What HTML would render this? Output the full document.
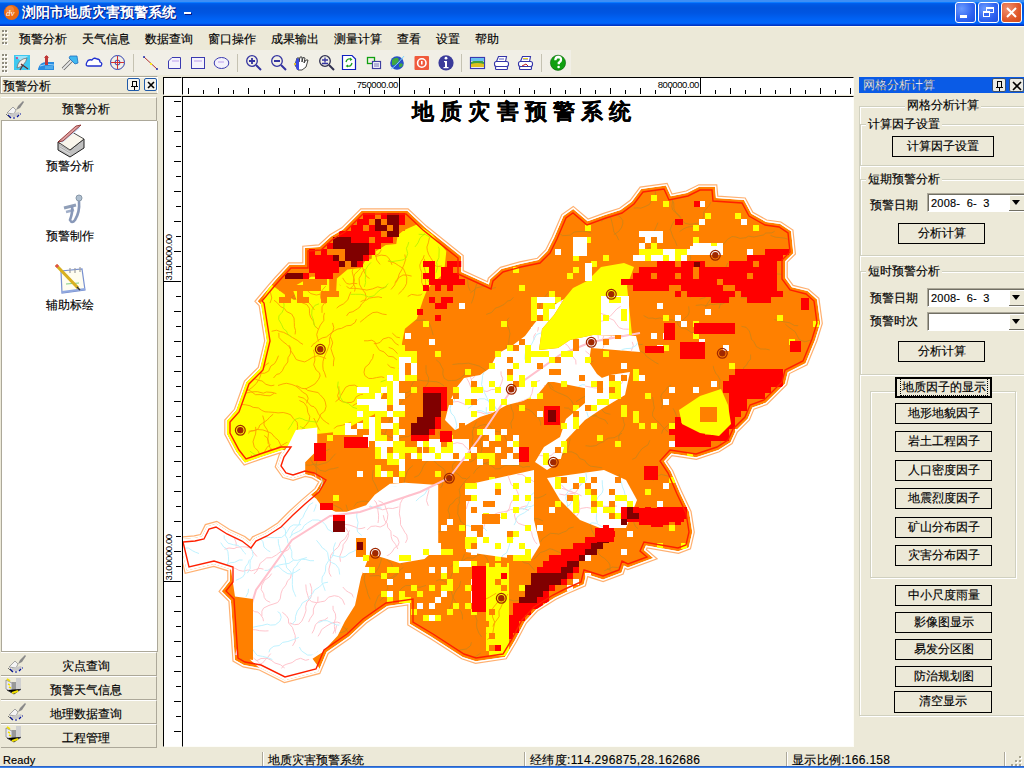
<!DOCTYPE html>
<html><head><meta charset="utf-8">
<style>
*{box-sizing:border-box;margin:0;padding:0}
html,body{width:1024px;height:768px;overflow:hidden;background:#ECE9D8;font-family:"Liberation Sans",sans-serif;font-size:12px;color:#000;-webkit-text-stroke:0.15px #000}
#title{-webkit-text-stroke:0}
.abs{position:absolute}
#title{left:0;top:0;width:1024px;height:26px;background:linear-gradient(#3E8FF5 0,#3E8FF5 2px,#0B7BFF 2px,#0B7BFF 3px,#0060F0 3px,#0058E2 5px,#0053DC 8px,#0056E2 13px,#0062F4 19px,#0066FA 23px,#0058F0 24px,#0036C4 25px,#0036C4 26px)}
#title .t{left:22px;top:4px;color:#fff;font-weight:bold;font-size:14px;letter-spacing:0px;text-shadow:1px 1px 0 #0A1880}
.tb{top:2px;width:21px;height:21px;border:1px solid #fff;border-radius:3px}
#menu{left:0;top:26px;width:1024px;height:24px;background:#ECE9D8;border-top:1px solid #FFFCEF}
.mi{top:4px;font-size:12px}
.grip{width:3px;background:repeating-linear-gradient(#B8B4A0 0 2px,transparent 2px 4px)}
#toolbar{left:0;top:50px;width:571px;height:25px;background:#F1EFE6}
.sep{top:55px;width:1px;height:16px;background:#C5C2B2;border-right:1px solid #fff}
.ico{position:absolute;top:54px;width:16px;height:16px}
.sunk{border-top:1px solid #000;border-left:1px solid #000;border-right:1px solid #FDFDF8;border-bottom:1px solid #FDFDF8;background:#fff}
.hdr{left:1px;width:156px;height:24px;background:#ECE9D8;border-top:1px solid #fff;border-bottom:1px solid #ACA899;border-right:1px solid #ACA899}
.hdr span{position:absolute;left:0;width:170px;text-align:center;top:5px}
.btn{position:absolute;border:1px solid #000;background:#ECE9D8;text-align:center;line-height:19px;font-size:12px}
.grp{position:absolute;border:1px solid #D0D0BF;box-shadow:1px 1px 0 #fff inset,1px 1px 0 #fff}
.gt{position:absolute;background:#ECE9D8;padding:0 2px;font-size:12px;line-height:12px}
.combo{position:absolute;left:927px;width:99px;height:19px;background:#fff;border:1px solid;border-color:#ACA899 #fff #fff #ACA899;box-shadow:inset 1px 1px 0 #716F64}
.combo span{position:absolute;left:3px;top:3px;font-size:11px;line-height:12px;letter-spacing:0.2px}
.dd{position:absolute;left:81px;top:1px;width:16px;height:16px;background:#ECE9D8;box-shadow:inset -1px -1px 0 #716F64,inset 1px 1px 0 #fff}
.dd:after{content:"";position:absolute;left:3px;top:5px;border-left:4px solid transparent;border-right:4px solid transparent;border-top:5px solid #000}
#status{left:0;top:748px;width:1024px;height:18px;background:#ECE9D8}
.st{position:absolute;top:5px;font-size:12px;line-height:14px}
.ssep{position:absolute;top:4px;width:2px;height:14px;border-left:1px solid #ACA899;border-right:1px solid #fff}
</style></head><body>
<div id="title" class="abs">
  <svg class="abs" style="left:3px;top:4px" width="17" height="17"><circle cx="8.5" cy="8.5" r="7.5" fill="#EE6A10"/><circle cx="7" cy="6" r="4" fill="#F8A060" opacity=".5"/><text x="3" y="12" font-size="9" fill="#fff" font-style="italic" font-family="Liberation Serif">dv</text></svg>
  <div class="abs t">浏阳市地质灾害预警系统</div><div class="abs" style="left:184px;top:12px;width:7px;height:2px;background:#fff;box-shadow:1px 1px 0 #0A1880"></div>
  <div class="abs tb" style="left:955px;background:radial-gradient(circle at 30% 30%,#6A9AFF,#2E62F0 60%,#1D4FE0)"><div class="abs" style="left:4px;top:12px;width:7px;height:3px;background:#fff"></div></div>
  <div class="abs tb" style="left:978px;background:radial-gradient(circle at 30% 30%,#6A9AFF,#2E62F0 60%,#1D4FE0)"><div class="abs" style="left:7px;top:4px;width:8px;height:6px;border:1px solid #fff;border-top-width:2px"></div><div class="abs" style="left:4px;top:8px;width:7px;height:6px;border:1px solid #fff;border-top-width:2px;background:#3567F2"></div></div>
  <div class="abs tb" style="left:1001px;background:radial-gradient(circle at 30% 30%,#F09070,#E0582A 60%,#D04A1A)"><svg class="abs" style="left:3px;top:3px" width="13" height="13"><path d="M2 2L11 11M11 2L2 11" stroke="#fff" stroke-width="2"/></svg></div>
</div>
<div id="menu" class="abs">
  
  <div class="abs mi" style="left:19px">预警分析</div>
  <div class="abs mi" style="left:82px">天气信息</div>
  <div class="abs mi" style="left:145px">数据查询</div>
  <div class="abs mi" style="left:208px">窗口操作</div>
  <div class="abs mi" style="left:271px">成果输出</div>
  <div class="abs mi" style="left:334px">测量计算</div>
  <div class="abs mi" style="left:397px">查看</div>
  <div class="abs mi" style="left:436px">设置</div>
  <div class="abs mi" style="left:475px">帮助</div>
</div>
<div id="toolbar" class="abs"></div>

<!-- TOOLBAR_ICONS --><svg class="abs" style="left:0;top:0" width="580" height="76" viewBox="0 0 580 76">
<g><rect x="3" y="31" width="2" height="2" fill="#fff"/><rect x="2" y="30" width="2" height="2" fill="#8E8B7E"/><rect x="6" y="31" width="2" height="2" fill="#fff"/><rect x="5" y="30" width="2" height="2" fill="#8E8B7E"/><rect x="3" y="35" width="2" height="2" fill="#fff"/><rect x="2" y="34" width="2" height="2" fill="#8E8B7E"/><rect x="6" y="35" width="2" height="2" fill="#fff"/><rect x="5" y="34" width="2" height="2" fill="#8E8B7E"/><rect x="3" y="39" width="2" height="2" fill="#fff"/><rect x="2" y="38" width="2" height="2" fill="#8E8B7E"/><rect x="6" y="39" width="2" height="2" fill="#fff"/><rect x="5" y="38" width="2" height="2" fill="#8E8B7E"/><rect x="3" y="43" width="2" height="2" fill="#fff"/><rect x="2" y="42" width="2" height="2" fill="#8E8B7E"/><rect x="6" y="43" width="2" height="2" fill="#fff"/><rect x="5" y="42" width="2" height="2" fill="#8E8B7E"/><rect x="3" y="55" width="2" height="2" fill="#fff"/><rect x="2" y="54" width="2" height="2" fill="#8E8B7E"/><rect x="6" y="55" width="2" height="2" fill="#fff"/><rect x="5" y="54" width="2" height="2" fill="#8E8B7E"/><rect x="3" y="59" width="2" height="2" fill="#fff"/><rect x="2" y="58" width="2" height="2" fill="#8E8B7E"/><rect x="6" y="59" width="2" height="2" fill="#fff"/><rect x="5" y="58" width="2" height="2" fill="#8E8B7E"/><rect x="3" y="63" width="2" height="2" fill="#fff"/><rect x="2" y="62" width="2" height="2" fill="#8E8B7E"/><rect x="6" y="63" width="2" height="2" fill="#fff"/><rect x="5" y="62" width="2" height="2" fill="#8E8B7E"/><rect x="3" y="67" width="2" height="2" fill="#fff"/><rect x="2" y="66" width="2" height="2" fill="#8E8B7E"/><rect x="6" y="67" width="2" height="2" fill="#fff"/><rect x="5" y="66" width="2" height="2" fill="#8E8B7E"/><rect x="3" y="71" width="2" height="2" fill="#fff"/><rect x="2" y="70" width="2" height="2" fill="#8E8B7E"/><rect x="6" y="71" width="2" height="2" fill="#fff"/><rect x="5" y="70" width="2" height="2" fill="#8E8B7E"/></g>
<rect x="133" y="54" width="1" height="18" fill="#C5C2B2"/><rect x="237" y="54" width="1" height="18" fill="#C5C2B2"/><rect x="461" y="54" width="1" height="18" fill="#C5C2B2"/><rect x="541" y="54" width="1" height="18" fill="#C5C2B2"/>
<!-- dish -->
<rect x="14" y="55" width="16" height="15" fill="#3EC8F0"/><path d="M15,56 L28,56 L22,62 Z" fill="#9BE4FA"/><circle cx="17" cy="58" r="1" fill="#E0307A"/>
<path d="M17,68 Q18,59 27,58 Q25,66 17,68 Z" fill="#F4F2EC" stroke="#707070" stroke-width="0.8"/><path d="M21,64 L28,69 M23,65 L20,70" stroke="#603030" stroke-width="1.2"/>
<!-- wave -->
<path d="M38,69 Q40,61 48,62 L54,62 L54,70 L38,70 Z" fill="#2A8CE0"/><path d="M40,66 Q46,63 54,65" stroke="#9AD4FA" stroke-width="1" fill="none"/><rect x="45" y="56" width="3" height="9" fill="#C03838"/><path d="M44,58 L46.5,55 L49,58 Z" fill="#C03838"/><path d="M45,66 L53,66 L53,69 L45,69 Z" fill="#60B8F0" opacity=".7"/>
<!-- arrow -->
<path d="M63,69 L73,59" stroke="#6A6A6A" stroke-width="3.6"/><path d="M63,69 L73,59" stroke="#E8E8E8" stroke-width="1.8"/><path d="M70,56 L77,56 L78,63 L75,64 L69,58 Z" fill="#40B8F0" stroke="#2070C0" stroke-width=".8"/>
<!-- cloud -->
<path d="M88,66 Q85,66 87,62 Q88,59 92,60 Q94,57 97,59 Q100,59 100,62 Q103,63 101,66 Z" fill="#fff" stroke="#2030D0" stroke-width="1.3"/>
<!-- crosshair -->
<circle cx="117.5" cy="62.5" r="7" fill="none" stroke="#3040B0" stroke-width="1"/><circle cx="117.5" cy="62.5" r="2.5" fill="none" stroke="#3040B0" stroke-width="1"/><path d="M111,62.5 H124 M117.5,56 V69" stroke="#D03030" stroke-width="1"/>
<!-- line -->
<path d="M144,57 L157,69" stroke="#B03030" stroke-width="1"/><circle cx="144" cy="57" r="1" fill="#2030B0"/><circle cx="157" cy="69" r="1" fill="#2030B0"/><circle cx="151" cy="64" r="1.1" fill="#FFFF00"/>
<!-- polygon -->
<path d="M168.5,61 L172,57.5 L180.5,57.5 L180.5,68.5 L168.5,68.5 Z" fill="#F4F2FC" stroke="#3A3AB0" stroke-width="1"/><rect x="172" y="60" width="7" height="2" fill="#D8C8F4"/>
<rect x="191.5" y="57.5" width="13" height="11" fill="#F4F2FC" stroke="#3A3AB0" stroke-width="1"/><rect x="194" y="60" width="8" height="2" fill="#D8C8F4"/>
<ellipse cx="221.5" cy="63" rx="7.3" ry="5.5" fill="#F4F2FC" stroke="#3A3AB0" stroke-width="1"/><rect x="218" y="61" width="6" height="2" fill="#D8C8F4"/>
<!-- zoom in/out -->
<g fill="none" stroke="#3434A0"><circle cx="252" cy="61" r="5.3" stroke-width="1.3"/><circle cx="277" cy="61" r="5.3" stroke-width="1.3"/><circle cx="325" cy="61" r="5.3" stroke-width="1.3" stroke="#303050"/></g>
<path d="M256,65 L261,70 M281,65 L286,70" stroke="#3434A0" stroke-width="2"/><path d="M329,65 L334,70" stroke="#303050" stroke-width="2"/>
<path d="M249,61 H255 M252,58 V64 M274,61 H280" stroke="#3434A0" stroke-width="1.8"/><path d="M322,60 H328 M325,57.5 V62.5 M322,63.5 H328" stroke="#3434A0" stroke-width="1.3"/>
<!-- hand -->
<path d="M295,65 L297,58 L299,58 L299,62 L300,57 L302,57 L302,62 L303,57.5 L305,58 L304,63 L306,60 L308,60 L306,67 L302,70 L298,70 Z" fill="#fff" stroke="#303030" stroke-width=".9"/><path d="M295,64 L297,58 L299,59 L299,70 L297,70 Z" fill="#3A4AE0"/><rect x="294" y="63" width="2" height="2" fill="#E0C030"/>
<!-- refresh doc -->
<path d="M342.5,55.5 L352,55.5 L355.5,59 L355.5,69.5 L342.5,69.5 Z" fill="#fff" stroke="#1020C0" stroke-width="1.2"/><path d="M346,62 Q347,58 351,59 M352,63 Q351,67 347,66" stroke="#20A020" stroke-width="1.3" fill="none"/><path d="M350,57.5 L352.5,59.5 L350,61 Z M348,64.5 L345.5,66 L348,67.5 Z" fill="#20A020"/>
<!-- windows -->
<rect x="367.5" y="57.5" width="7" height="6" fill="none" stroke="#10A010" stroke-width="1.3"/><rect x="372.5" y="61.5" width="8" height="7" fill="#fff" stroke="#4040A0" stroke-width="1.2"/><path d="M374,64 H379 M374,66 H379" stroke="#4040A0" stroke-width=".8"/>
<!-- globe -->
<circle cx="397" cy="63" r="6.8" fill="#2850C8"/><path d="M392,60 Q395,57 398,58 Q400,61 397,63 Q395,66 392,65 Z M399,64 Q402,62 403,65 Q401,68 399,67 Z" fill="#40A840"/><path d="M391,69 Q396,66 404,56" stroke="#80D8FF" stroke-width="1" fill="none"/>
<!-- red square -->
<rect x="414.5" y="56" width="14.5" height="14" rx="1" fill="#F05A3C"/><circle cx="421.8" cy="63" r="4.2" fill="none" stroke="#fff" stroke-width="1.6"/><rect x="421" y="61" width="1.6" height="3.5" fill="#fff"/>
<!-- info -->
<circle cx="446" cy="62.8" r="7.6" fill="#3A3A9A"/><circle cx="446" cy="58.2" r="1.4" fill="#fff"/><path d="M444,61 H447 V67 H448.5 V68.3 H443.5 V67 H445 V62.3 H444 Z" fill="#fff"/>
<!-- picture -->
<rect x="470.5" y="57.5" width="14" height="11" fill="#fff" stroke="#3A3AB0" stroke-width="1.2"/><path d="M471,62 Q475,60 478,61 Q481,59 484,62 L484,66 L471,66 Z" fill="#40A040"/><path d="M471,64 Q477,62 484,64 L484,67 L471,67 Z" fill="#E0C020"/><rect x="471" y="58" width="13" height="3" fill="#6AC0F0"/>
<!-- printers -->
<g fill="#fff" stroke="#3434A8" stroke-width="1.1"><path d="M496.5,61.5 L498.5,56.5 L506.5,56.5 L505.5,61.5 Z"/><rect x="494.5" y="61.5" width="14" height="5" rx="2"/><rect x="495.5" y="66.5" width="12" height="3" rx="1"/>
<path d="M520.5,61.5 L522.5,56.5 L530.5,56.5 L529.5,61.5 Z"/><rect x="518.5" y="61.5" width="14" height="5" rx="2"/><rect x="519.5" y="66.5" width="12" height="3" rx="1"/></g>
<path d="M499,59 H504 M523,59 H528" stroke="#3434A8" stroke-width=".8"/><rect x="523" y="58" width="5" height="1" fill="#E8D020"/><path d="M522,66 L526,64 L528,66" stroke="#C02020" stroke-width="1" fill="none"/>
<!-- help -->
<circle cx="558" cy="62.8" r="7.6" fill="#10A010" stroke="#0A600A" stroke-width=".6"/><path d="M555.3,60.3 Q555.5,57 558.3,57 Q561.2,57.2 561,60 Q560.8,61.8 558.8,62.8 L558.8,64.3" stroke="#fff" stroke-width="2.3" fill="none"/><circle cx="558.6" cy="67" r="1.3" fill="#fff"/>
</svg>
<!-- /TOOLBAR_ICONS -->

<!-- LEFT PANEL -->
<div class="abs" style="left:0px;top:76px;width:158px;height:18px;border:1px solid #ACA899;border-right-color:#fff;box-shadow:inset 1px 1px 0 #fff"></div>
<div class="abs" style="left:3px;top:78px">预警分析</div>
<div class="abs" style="left:127px;top:78px;width:13px;height:13px;border:1px solid #1F5AA8;border-radius:2px;background:#F4F3EE"><svg class="abs" style="left:1px;top:1px" width="10" height="10"><path d="M3 1h5v5h1v1H6v3H5V7H2V6h1z M4 2v4h3V2z" fill="#000"/></svg></div>
<div class="abs" style="left:144px;top:78px;width:13px;height:13px;border:1px solid #1F5AA8;border-radius:2px;background:#F4F3EE"><svg class="abs" style="left:1px;top:1px" width="10" height="10"><path d="M2 2L8 8M8 2L2 8" stroke="#000" stroke-width="1.6"/></svg></div>
<div class="abs hdr" style="top:97px"><span style="top:3px">预警分析</span></div>
<div class="abs" style="left:1px;top:121px;width:157px;height:531px;background:#fff;border:1px solid #ACA899;border-top:none"></div>
<!-- LEFT_ICONS --><svg class="abs" style="left:0;top:0;z-index:5" width="160" height="750" viewBox="0 0 160 750">
<defs>
<g id="brush"><path d="M6,-11 L11,-16 L12,-15 L8,-9 L4,-7 Z" fill="#8A8A8A"/><path d="M-5,-4 L1,-10 L4,-7 L2,-3 Z" fill="#F4F4F4" stroke="#909090" stroke-width=".8"/><path d="M-2,-1 Q3,2 8,-3 L7,-5 L-2,-3 Z" fill="#C8C8C8"/><path d="M-4,-2 L-1,1 M1,1 L3,1 M5,0 L7,-2 M8,-3 L9,-3" stroke="#0010A0" stroke-width="1.2"/><path d="M-6,-3 L-2,1" stroke="#707070" stroke-width="1"/></g>
<g id="bldg"><path d="M-8,-8 L-2,-5 L-2,5 L-8,1 Z" fill="#E8E8F4" stroke="#888" stroke-width=".8"/><rect x="-2" y="-6" width="4" height="10" fill="#999"/><rect x="2" y="-10" width="5" height="13" fill="#D0D0D0"/><path d="M-7,-9 L-4,-7 M-6,-4 L-4,-3 M-5,-1 L-3,0" stroke="#F0E000" stroke-width="1.6"/><path d="M-7,2 L0,6 L7,1" stroke="#404040" stroke-width="1"/><path d="M-2,5 L4,3" stroke="#F0E000" stroke-width="2"/></g>
</defs>
<use href="#brush" x="12" y="117"/>
<use href="#brush" x="14" y="671"/>
<use href="#bldg" x="14" y="688"/>
<use href="#brush" x="14" y="719"/>
<use href="#bldg" x="14" y="736"/>
<!-- book -->
<path d="M58,142 L70,150 L84,139 L84,148 L70,157 L58,150 Z" fill="#C0C0C0" stroke="#202020" stroke-width="1"/>
<path d="M60,143 L70,149 L70,155 L60,149 Z" fill="#D8D8D8"/><path d="M60,145 L70,151 M60,147 L70,153" stroke="#909090" stroke-width=".6"/>
<path d="M58,142 L72,132 L84,139 L70,150 Z" fill="#FAF6EC" stroke="#202020" stroke-width=".8"/>
<path d="M60,141 L78,126 L80,128 L62,143 Z" fill="#C8E0F8"/>
<path d="M58,142 L76,126 L81,125 L63,141 Z" fill="#E0A0A0" stroke="#802020" stroke-width=".8"/>
<!-- wrench -->
<path d="M64,208 L76,205" stroke="#909FB8" stroke-width="3"/><path d="M66,212 L74,210" stroke="#A0AEC8" stroke-width="2.4"/>
<path d="M79,201 Q80,212 75,220 Q72,224 70,220 Q73,212 72,206" fill="none" stroke="#8898B8" stroke-width="2.6"/>
<circle cx="79" cy="198" r="3" fill="#B0C0D0" stroke="#8898A8" stroke-width="1"/>
<!-- notepad -->
<path d="M61,271 L82,269 L85,290 L62,293 Z" fill="#FFFDF0" stroke="#7890D0" stroke-width="1.2"/>
<path d="M62,292 L85,289" stroke="#90A8E0" stroke-width="2"/>
<path d="M70,268 V273 M75,268 V273 M80,267 V272" stroke="#A0A0A0" stroke-width="1.2"/>
<path d="M66,284 L79,283" stroke="#60C060" stroke-width=".8"/>
<path d="M56,265 L78,288" stroke="#D8B020" stroke-width="3.2"/><path d="M56,265 L58,267" stroke="#E05050" stroke-width="3"/><path d="M77,287 L80,290" stroke="#303030" stroke-width="1.5"/>
</svg>
<!-- /LEFT_ICONS -->
<div class="abs" style="left:46px;top:158px">预警分析</div>
<div class="abs" style="left:46px;top:228px">预警制作</div>
<div class="abs" style="left:46px;top:297px">辅助标绘</div>
<div class="abs hdr" style="top:652px"><span>灾点查询</span></div>
<div class="abs hdr" style="top:676px"><span>预警天气信息</span></div>
<div class="abs hdr" style="top:700px"><span>地理数据查询</span></div>
<div class="abs hdr" style="top:724px"><span>工程管理</span></div>

<!-- RULERS -->
<div class="abs sunk" style="left:163px;top:77px;width:19px;height:18px"></div>
<div class="abs sunk" style="left:182px;top:77px;width:672px;height:18px;overflow:hidden">
  <!-- TOPRULER -->
</div>
<div class="abs sunk" style="left:163px;top:96px;width:19px;height:651px;overflow:hidden">
  <!-- LEFTRULER -->
</div>
<div class="abs sunk" style="left:182px;top:96px;width:672px;height:651px;overflow:hidden">
  <!-- MAP -->
</div>

<!-- MAPSVG --><svg class="abs" style="left:0;top:0" width="1024" height="768" viewBox="0 0 1024 768">
<defs><clipPath id="cv"><rect x="183" y="97" width="670" height="648"/></clipPath><clipPath id="olc"><path d="M257.671,301.196 L261.001,304.527 L266.74,340.869 L260.101,368.374 L246.228,382.246 L236.199,410.329 L226.8,420.772 L226.8,433.795 L236.303,451.744 L244.896,462.792 L261.044,457.025 L281.519,450.2 L284.854,450.2 L281.111,455.546 L277.449,466.534 L284.046,475.77 L293.073,478.349 L305.171,474.316 L312.819,476.016 L321.624,481.152 L316.508,489.922 L302.877,501.605 L290.786,512.688 L278.98,524.494 L265.465,533.183 L253.895,538.442 L250.333,543.428 L243.68,538.253 L228.542,531.188 L216.504,523.528 L206.767,526.31 L201.819,536.207 L194.518,537.829 L179.018,539.121 L186.635,570.858 L213.883,564.319 L229.8,569.345 L229.8,580.902 L221.74,591.265 L230.889,600.414 L234.923,659.928 L243.88,665.046 L259.97,668.063 L284.64,680.398 L318.334,671.702 L326.589,652.097 L349.019,636.494 L365.019,621.494 L387.211,606.055 L409.8,602.709 L409.8,623.812 L431.309,636.717 L462.605,656.908 L475.713,661.277 L504.966,656.944 L514.79,640.57 L524.636,621.862 L536.065,609.48 L554.574,597.791 L566.358,591.899 L583.723,584.301 L586.28,574.076 L603.09,579.384 L621.553,572.46 L623.869,565.512 L627.807,567.481 L653.222,558.118 L643.892,550.122 L645.908,545.586 L678.305,551.303 L688.732,547.393 L692.258,532.114 L689.089,512.046 L679.918,492.684 L670.826,471.469 L664.048,461.304 L671.212,453.424 L696.278,457.28 L718.386,449.911 L730.52,442.189 L735.673,430.852 L747.71,418.815 L752.409,407.537 L765.754,402.772 L784.889,383.636 L787.747,372.204 L805.507,363.324 L815.014,340.085 L820.267,323.274 L817.009,299.381 L807.526,291.083 L791.904,287.178 L785.2,277.959 L785.2,261.325 L793.342,253.183 L791.025,231.171 L780.171,223.935 L766.046,221.917 L751.378,213.666 L743.981,199.929 L715.94,197.995 L714.922,186.8 L699.245,186.8 L686.938,192.954 L670.851,196.34 L665.921,185.493 L641.235,189.02 L631.714,201.714 L620.52,210.11 L604.969,214.97 L587.656,221.348 L573.18,208.939 L563.411,215.916 L554.096,237.653 L547.37,251.104 L538.41,260.065 L520.241,263.89 L501.419,269.118 L490.133,279.275 L488.827,284.497 L461.2,271.939 L461.2,256.462 L425.099,227.582 L407.269,210.8 L361.675,210.8 L343.03,229.445 L331.091,236.409 L319.652,246.894 L304.8,248.037 L304.8,264.8 L289.599,264.8 L276.62,278.861 L269.566,286.922 L257.671,301.196 Z"/></clipPath></defs>
<g clip-path="url(#cv)">
<text x="412" y="119" font-family="Liberation Serif" font-weight="bold" font-size="22" letter-spacing="6.2" stroke="#000" stroke-width="0.2">地质灾害预警系统</text>
<path d="M254.965,301.319 L259.127,305.481 L264.702,340.787 L258.288,367.358 L244.496,381.15 L234.448,409.284 L224.8,420.005 L224.8,434.292 L234.617,452.834 L244.205,465.163 L261.697,458.916 L280.76,452.561 L279.306,454.638 L275.229,466.868 L282.825,477.501 L293.118,480.442 L305.278,476.389 L312.08,477.9 L318.888,481.872 L314.95,488.622 L301.55,500.108 L289.403,511.243 L277.718,522.928 L264.505,531.422 L252.579,536.843 L249.917,540.57 L244.73,536.536 L229.506,529.431 L216.819,521.358 L205.372,524.628 L200.456,534.461 L194.216,535.847 L176.529,537.321 L185.157,573.27 L213.81,566.393 L227.8,570.811 L227.8,580.216 L219.077,591.431 L228.944,601.298 L233,661.132 L243.181,666.949 L259.326,669.977 L284.415,682.521 L319.793,673.391 L328.207,653.408 L350.28,638.053 L366.28,623.053 L387.968,607.965 L407.8,605.027 L407.8,624.944 L430.252,638.415 L461.733,658.726 L475.534,663.326 L506.194,658.784 L516.534,641.551 L526.284,623.026 L537.356,611.031 L555.557,599.535 L567.206,593.711 L585.425,585.74 L587.704,576.623 L603.145,581.499 L623.149,573.998 L625.037,568.332 L627.687,569.657 L657.11,558.817 L646.325,549.573 L647.1,547.827 L678.496,553.368 L690.439,548.889 L694.294,532.186 L691.02,511.45 L681.741,491.862 L672.591,470.513 L666.579,461.494 L671.969,455.564 L696.452,459.331 L719.252,451.731 L732.095,443.558 L737.344,432.01 L749.404,419.95 L753.915,409.123 L766.85,404.504 L786.695,384.658 L789.465,373.581 L807.073,364.777 L816.897,340.763 L822.309,323.445 L818.889,298.369 L808.479,289.26 L793.094,285.414 L787.2,277.309 L787.2,262.154 L795.431,253.923 L792.916,230.028 L780.903,222.019 L766.7,219.99 L752.864,212.207 L745.219,198.01 L717.778,196.117 L716.749,184.8 L698.772,184.8 L686.273,191.049 L672.009,194.053 L667.122,183.301 L640.132,187.157 L630.286,200.286 L619.595,208.303 L604.325,213.076 L588.067,219.065 L573.292,206.401 L561.794,214.614 L552.281,236.811 L545.726,249.92 L537.416,258.23 L519.767,261.946 L500.43,267.317 L488.341,278.198 L487.469,281.683 L463.2,270.652 L463.2,255.501 L426.412,226.07 L408.062,208.8 L360.846,208.8 L341.799,227.847 L329.898,234.79 L318.81,244.953 L302.8,246.185 L302.8,262.8 L288.723,262.8 L275.132,277.524 L268.045,285.623 L254.965,301.319 Z" fill="none" stroke="#FFB070" stroke-width="1.2"/>
<g clip-path="url(#olc)">
<path d="M257.671,301.196 L261.001,304.527 L266.74,340.869 L260.101,368.374 L246.228,382.246 L236.199,410.329 L226.8,420.772 L226.8,433.795 L236.303,451.744 L244.896,462.792 L261.044,457.025 L281.519,450.2 L284.854,450.2 L281.111,455.546 L277.449,466.534 L284.046,475.77 L293.073,478.349 L305.171,474.316 L312.819,476.016 L321.624,481.152 L316.508,489.922 L302.877,501.605 L290.786,512.688 L278.98,524.494 L265.465,533.183 L253.895,538.442 L250.333,543.428 L243.68,538.253 L228.542,531.188 L216.504,523.528 L206.767,526.31 L201.819,536.207 L194.518,537.829 L179.018,539.121 L186.635,570.858 L213.883,564.319 L229.8,569.345 L229.8,580.902 L221.74,591.265 L230.889,600.414 L234.923,659.928 L243.88,665.046 L259.97,668.063 L284.64,680.398 L318.334,671.702 L326.589,652.097 L349.019,636.494 L365.019,621.494 L387.211,606.055 L409.8,602.709 L409.8,623.812 L431.309,636.717 L462.605,656.908 L475.713,661.277 L504.966,656.944 L514.79,640.57 L524.636,621.862 L536.065,609.48 L554.574,597.791 L566.358,591.899 L583.723,584.301 L586.28,574.076 L603.09,579.384 L621.553,572.46 L623.869,565.512 L627.807,567.481 L653.222,558.118 L643.892,550.122 L645.908,545.586 L678.305,551.303 L688.732,547.393 L692.258,532.114 L689.089,512.046 L679.918,492.684 L670.826,471.469 L664.048,461.304 L671.212,453.424 L696.278,457.28 L718.386,449.911 L730.52,442.189 L735.673,430.852 L747.71,418.815 L752.409,407.537 L765.754,402.772 L784.889,383.636 L787.747,372.204 L805.507,363.324 L815.014,340.085 L820.267,323.274 L817.009,299.381 L807.526,291.083 L791.904,287.178 L785.2,277.959 L785.2,261.325 L793.342,253.183 L791.025,231.171 L780.171,223.935 L766.046,221.917 L751.378,213.666 L743.981,199.929 L715.94,197.995 L714.922,186.8 L699.245,186.8 L686.938,192.954 L670.851,196.34 L665.921,185.493 L641.235,189.02 L631.714,201.714 L620.52,210.11 L604.969,214.97 L587.656,221.348 L573.18,208.939 L563.411,215.916 L554.096,237.653 L547.37,251.104 L538.41,260.065 L520.241,263.89 L501.419,269.118 L490.133,279.275 L488.827,284.497 L461.2,271.939 L461.2,256.462 L425.099,227.582 L407.269,210.8 L361.675,210.8 L343.03,229.445 L331.091,236.409 L319.652,246.894 L304.8,248.037 L304.8,264.8 L289.599,264.8 L276.62,278.861 L269.566,286.922 L257.671,301.196 Z" fill="#FF8000"/>
<clipPath id="lc1"><path d="M262,301 L272,289 L279,281 L291,268 L308,268 L308,251 L321,250 L333,239 L345,232 L363,214 L406,214 L423,230 L458,258 L458,274 L491,289 L493,281 L503,272 L521,267 L540,263 L550,253 L557,239 L566,218 L573,213 L587,225 L606,218 L622,213 L634,204 L643,192 L664,189 L669,200 L688,196 L700,190 L712,190 L713,201 L742,203 L749,216 L765,225 L779,227 L788,233 L790,252 L782,260 L782,279 L790,290 L806,294 L814,301 L817,323 L812,339 L803,361 L785,370 L782,382 L773,391 L764,400 L750,405 L745,417 L733,429 L728,440 L717,447 L696,454 L670,450 L660,461 L668,473 L677,494 L686,513 L689,532 L686,545 L678,548 L644,542 L640,551 L647,557 L628,564 L622,561 L619,570 L603,576 L584,570 L581,582 L565,589 L553,595 L534,607 L522,620 L512,639 L503,654 L476,658 L464,654 L433,634 L413,622 L413,599 L386,603 L363,619 L347,634 L324,650 L316,669 L285,677 L261,665 L245,662 L238,658 L234,599 L226,591 L233,582 L233,567 L214,561 L189,567 L183,542 L195,541 L204,539 L209,529 L216,527 L227,534 L242,541 L251,548 L256,541 L267,536 L281,527 L293,515 L305,504 L319,492 L326,480 L314,473 L305,471 L293,475 L286,473 L281,466 L284,457 L291,447 L281,447 L272,450 L260,454 L246,459 L239,450 L230,433 L230,422 L239,412 L244,398 L249,384 L256,377 L263,370 L270,341 L267,322 L264,303 Z"/></clipPath><g clip-path="url(#lc1)" fill="none" stroke-width="0.8">
<path d="M469.8,462.2L474.1,460.0L476.9,456.5L480.9,452.9L482.0,449.1L480.4,443.9L480.3,440.8L483.9,436.1L487.6,433.0L488.7,430.2M220.8,281.8L221.2,286.1L219.5,290.4L217.1,294.1L213.9,297.2L211.1,302.5M631.8,342.9L635.3,346.8L639.5,350.4L644.5,353.4L646.1,356.0L650.7,359.3L655.7,362.6L658.6,364.0M676.6,320.7L678.5,325.6L681.4,327.9L684.6,328.2L687.7,329.9L691.3,332.4L696.4,333.3L701.0,331.6L703.7,328.3M183.3,610.8L185.9,612.4L191.9,613.0L196.5,614.1L199.6,612.8L202.3,611.4L207.5,609.6L210.4,608.1L213.5,604.3L213.5,600.2L214.1,596.9L215.7,591.6M732.4,278.2L733.0,281.9L735.9,286.3L735.8,289.8L732.3,294.3L729.3,297.3L728.5,300.3L725.6,302.6L722.1,304.1L717.4,303.8L713.9,304.6L710.7,304.3L706.3,305.7L701.5,304.8L695.8,305.4M657.9,222.7L656.4,226.3L654.0,231.7L654.5,235.1L655.4,239.0L654.9,243.5L651.7,247.1L647.4,248.1M627.4,658.8L632.6,659.4L638.5,658.5L641.9,655.4L647.2,653.1L652.3,652.8L657.7,654.6L662.7,655.3L667.0,658.9L671.6,661.8M546.2,494.0L543.5,495.8L537.9,498.1L532.8,497.3L527.6,497.4L523.3,497.0L520.6,495.2L518.7,492.8L516.5,488.9L512.6,485.7L508.8,482.6M345.2,194.5L345.5,198.0L343.3,202.4L341.1,207.7L340.4,212.6L341.5,216.8L340.6,222.4L338.0,225.7L335.2,228.4L333.9,232.7L330.0,236.7M785.3,324.1L788.0,326.6L791.9,329.4L795.1,331.7L797.9,337.0L799.5,339.7L804.8,341.8L809.7,340.4L813.6,339.7L816.5,340.5M439.9,281.7L442.5,277.0L445.6,275.7L448.4,272.0L451.4,269.3L452.3,265.8L454.8,262.9L459.2,260.1L461.9,258.5M355.7,357.7L354.8,352.5L353.1,347.4L353.9,344.3L357.8,340.9L359.2,336.8L362.0,331.8L363.6,327.3L367.7,323.9L372.1,323.5M245.7,611.7L244.9,608.1L243.7,605.0L240.2,600.3L240.0,596.5L240.8,593.6L241.7,590.6L241.9,586.3L240.4,580.7L237.0,576.3L234.8,574.0L231.5,570.2L231.0,565.8L234.1,561.0L236.9,556.9M782.6,429.4L786.1,426.4L788.9,422.0L792.0,418.7L796.5,417.2L799.9,414.9L805.6,414.3M376.0,257.9L372.0,256.7L369.0,257.5L364.9,259.4L362.1,264.5L358.9,269.6L358.8,272.8L361.3,278.1M445.3,656.0L448.3,654.3L452.7,651.1L457.2,650.9L460.6,649.8L466.3,649.0L470.5,645.8L471.4,642.3M190.5,327.6L189.8,323.2L189.5,317.6L190.1,312.5L192.3,307.3L191.0,302.6L191.9,297.9M730.7,449.6L731.3,454.3L734.8,458.9L736.6,462.5L740.4,465.4L741.7,468.8L741.7,472.4L744.6,477.2M643.6,315.6L648.4,318.2L652.6,318.1L655.5,318.8L660.5,317.9L666.0,320.2L670.4,319.5L674.8,320.5L678.0,322.1L681.3,321.7L684.6,318.4L688.1,315.2L689.2,311.9L688.7,306.4M770.6,235.5L775.6,237.2L780.0,237.6L784.3,238.1L787.2,238.9L792.0,241.7L796.3,242.1L800.2,243.9L803.7,243.9L806.7,243.9L811.3,246.8L814.9,251.0L817.1,254.7L818.8,258.8L817.3,264.0M360.2,245.7L362.0,242.9L363.5,238.5L364.1,234.2L363.0,230.8L359.4,226.8L356.6,225.1L353.8,219.8M330.2,650.0L328.7,645.5L327.7,641.5L329.8,637.0L333.3,633.1L336.3,632.5L341.5,632.5L345.5,631.0L347.5,628.0M189.8,315.2L188.9,319.3L187.6,324.7L188.9,328.8L189.4,333.4L188.7,339.3L188.9,345.1L190.0,350.9M526.6,480.1L523.5,483.0L521.1,486.8L519.1,490.1L514.6,492.2L511.5,492.4L506.9,491.0L503.2,489.1L500.9,486.9L497.2,485.0L492.9,482.1M229.6,630.9L226.0,630.1L220.3,628.6L216.6,626.3L214.8,621.1L214.2,617.9L214.1,613.5L212.8,610.6L211.5,607.5L209.2,603.1L207.3,599.8M413.8,552.0L414.2,548.6L414.6,544.2L413.8,539.7L414.9,536.1L417.2,531.4L419.6,528.8L421.2,525.4M501.4,507.6L501.8,510.6L503.3,513.3L506.6,514.9L511.9,515.5L514.6,517.7L520.2,519.6L524.1,520.8L528.5,521.1L533.6,518.8L538.0,518.7L543.0,521.0M464.7,553.7L462.6,558.8L460.6,562.1L456.4,565.6L454.2,570.0L451.9,573.7L450.4,578.1M540.7,425.6L540.6,422.4L538.6,417.8L535.3,415.7L532.1,411.8L529.2,410.0L524.4,408.1L521.1,407.4L516.9,405.3M460.7,580.9L459.5,586.6L456.9,589.3L454.8,592.8L453.2,596.7L452.5,600.2L450.9,605.3L448.9,610.5L447.4,613.7M741.5,326.4L746.1,327.3L749.3,331.0L750.3,334.1L751.5,339.3L753.8,341.6L756.4,346.6L760.7,349.0L765.9,349.1L769.6,349.9M493.0,632.0L491.2,637.1L490.8,640.5L490.3,645.9L492.7,650.1L497.5,652.3L499.2,655.9L503.0,657.6L507.4,656.9L510.4,656.6M633.2,580.5L630.3,584.9L626.4,586.1L623.8,588.6L621.3,591.6L618.2,592.2L615.2,593.8L610.1,595.2L607.7,597.3L604.3,600.7L601.3,601.3M308.3,364.3L304.4,362.1L299.2,359.7L293.7,358.0L290.7,354.2L290.5,349.5L292.5,345.5L294.3,340.0L297.0,335.4L296.9,329.8M214.5,651.4L216.1,647.1L216.4,641.2L217.4,637.6L215.6,633.6L212.5,629.1L211.1,624.5L208.7,622.0L205.5,620.1M586.8,673.6L588.8,678.6L593.7,681.1L596.7,685.6L600.3,687.1L602.8,689.2L606.3,691.9L607.6,696.5L606.7,700.3L604.1,703.7L601.1,704.8M315.1,454.2L311.9,451.9L308.9,450.7L304.5,450.3L300.8,448.8L298.1,446.8L294.3,444.6L292.1,439.6M190.8,373.0L190.1,368.7L185.6,364.8L184.1,361.5L183.1,357.7L181.2,353.6L178.5,350.5L174.7,347.3M302.6,372.8L306.7,374.4L310.4,376.7L313.4,378.0L316.3,379.8L318.8,382.3L321.8,383.3L326.7,384.7L329.7,383.8L333.6,385.5M399.6,590.7L401.8,588.1L405.5,585.6L410.4,585.5L415.0,587.0L420.3,587.2L426.0,585.4M348.3,281.1L346.8,284.4L346.0,288.2L347.8,293.0L350.7,296.5L353.8,298.6L357.1,301.7L359.5,304.4L360.2,310.4L359.2,316.1M580.6,285.6L584.7,288.6L590.1,290.8L594.4,291.6L600.0,289.7L603.8,285.5L607.1,282.2M289.9,552.9L292.3,547.6L290.9,542.8L288.6,538.0L286.5,535.2L283.8,530.5L281.5,527.0L280.5,521.3M378.0,516.6L378.3,511.2L376.2,508.2L374.1,505.6L370.6,502.4L366.2,501.1L361.5,501.3L356.8,502.7L353.8,506.7M438.6,431.8L440.7,437.2L441.9,441.2L445.0,445.9L448.4,450.5L450.4,455.6L453.0,457.7L454.2,461.5M449.5,200.8L453.4,199.1L456.7,196.8L462.3,195.8L465.8,197.0L468.3,199.8L469.6,205.5L470.5,208.7L469.1,213.2M779.1,618.3L782.7,620.3L786.6,622.9L791.5,623.5L794.9,623.5L798.7,620.9L801.1,615.8L803.4,612.1L804.9,607.1L803.5,603.9L801.5,600.0L800.1,596.9L799.5,593.3M202.7,627.5L197.8,630.8L194.9,633.0L191.5,637.6L188.1,638.9L184.1,638.5L180.6,638.2L175.6,634.9L170.8,634.0L165.3,635.4M595.2,338.4L595.6,334.1L598.0,330.9L603.1,329.4L606.4,328.0L609.7,328.3L613.3,329.7L616.8,332.5L620.3,333.9L623.5,337.2L627.9,338.4L631.2,343.0L634.4,344.8L639.5,344.7L642.7,344.4M519.5,211.1L514.3,209.6L510.6,210.8L506.9,210.6L502.4,211.7L498.0,215.4L494.9,215.4L489.7,215.7M184.7,624.1L188.8,628.1L192.7,630.2L196.5,629.7L201.2,631.2L204.0,635.6M559.5,565.4L562.3,569.1L566.5,572.0L568.8,575.0L572.0,579.6L573.6,583.0L578.2,586.8L582.5,587.1L585.8,589.4L589.3,592.7M502.4,541.9L502.8,538.4L504.3,533.9L507.2,530.0L507.3,525.7L508.8,520.5M668.2,432.2L665.5,429.6L661.9,426.1L659.2,422.7L655.7,420.0L652.6,416.0L652.6,412.6L654.3,408.1L653.4,402.9L652.6,397.0M335.6,623.4L339.1,625.8L342.2,625.8L346.2,629.3L348.1,632.5L351.7,635.4L355.8,636.8L358.2,640.1L362.8,644.0L364.8,646.4M554.0,674.4L556.7,669.5L559.9,667.8L565.7,668.0L569.5,666.5L571.8,662.9L572.9,657.6L575.5,654.0L577.8,649.8L581.1,646.9L584.8,643.7M730.0,288.8L726.3,290.7L724.2,292.8L722.9,296.4L721.8,302.1L720.0,305.4L719.0,308.7M269.9,306.5L275.2,304.9L280.3,302.8L283.5,300.8L288.5,300.7L293.2,299.3L296.6,298.2M203.1,341.4L200.3,345.7L199.0,350.7L197.5,353.7L197.2,357.6L195.7,361.5L194.5,367.0L195.2,370.8L196.6,374.2L199.3,375.7L202.8,378.8M601.7,221.7L603.1,218.6L606.2,215.8L609.7,214.5L613.1,214.8L617.5,215.0L620.6,217.4L622.7,220.4L622.8,224.0L621.4,227.8L618.7,231.4L613.9,234.6M486.2,314.4L491.6,312.5L495.3,308.1L498.9,307.0L503.9,304.5L507.7,301.0L510.8,300.3L513.4,297.3M541.7,316.8L539.1,312.7L539.4,308.6L540.5,302.9L543.1,298.8L545.9,295.6L548.2,292.5M740.7,375.4L742.9,371.4L743.8,367.4L746.5,365.2L748.1,361.9L750.6,359.1L750.6,354.5M185.2,455.9L185.4,450.5L188.1,446.2L191.3,444.1L192.6,441.3L195.3,439.0L197.6,436.3L198.6,433.0L198.8,427.9L200.6,424.5L202.0,420.6L204.5,416.9L207.4,414.1L212.5,411.4M739.3,671.7L740.2,666.2L741.1,661.3L738.9,656.9L736.4,653.2L733.4,650.3L731.1,645.8L727.6,642.4L723.3,639.7L717.8,639.0L713.3,640.3L709.2,644.6L706.4,646.6M691.0,250.1L689.5,253.4L690.8,257.9L688.7,263.5L689.5,268.5L690.8,273.2L693.1,278.5L692.2,281.6L690.4,284.4L690.7,288.2L689.2,294.0L690.3,297.8M711.0,606.5L714.1,611.2L715.4,614.6L715.6,618.8L718.2,622.8L719.3,626.3L722.6,630.9M294.0,241.3L297.1,239.9L299.4,237.9L302.3,236.0L305.8,234.5L308.9,231.3L311.0,228.2L310.9,225.0L312.8,221.6L312.5,218.0M271.6,574.1L274.7,571.4L278.5,568.7L281.0,564.6L284.2,562.5L286.3,559.3L287.4,554.0L289.3,548.5L287.5,543.2M524.7,518.3L524.1,521.4L523.2,527.0L524.9,530.7L525.2,534.5L527.6,539.7M436.1,580.9L439.2,579.6L443.3,580.6L446.5,582.4L448.0,585.1L449.3,588.6L451.4,592.1L453.0,597.3L455.4,601.6L457.9,604.5L458.4,608.4L461.0,611.5L462.3,614.9L462.5,619.5M295.4,240.6L297.5,242.8L300.4,245.9L304.4,248.3L305.7,251.6L305.1,255.6L303.5,258.5L299.5,260.1L296.0,259.1L290.9,258.4M698.2,223.1L692.9,224.0L689.9,224.3L685.0,223.3L682.8,221.1L680.4,217.9L677.0,214.0L672.7,210.0L671.9,206.7L672.5,201.5L672.5,197.1L674.7,193.1L676.1,188.7L674.2,183.3M466.3,478.6L461.9,478.1L458.3,474.4L453.8,471.7L452.3,467.8L452.9,464.4L456.2,461.5L458.8,456.6L462.5,452.1L467.4,449.9L472.9,447.5L475.8,442.7L478.7,440.2M470.9,450.7L472.9,446.2L472.0,441.6L473.0,437.3L472.3,431.9L474.1,426.9L476.5,421.7M697.6,276.1L694.2,277.6L691.0,280.3L688.3,281.9L684.1,283.2L681.0,284.1L676.4,284.6L670.9,286.6L666.5,285.2L664.2,281.7L663.6,276.7L665.6,271.2L667.6,268.1L668.4,262.9M622.8,416.6L623.5,421.4L624.7,424.8L623.0,429.6L620.4,432.7L618.7,436.6L619.1,441.5M420.5,488.0L421.6,491.1L423.0,495.1L424.1,498.3L428.3,502.0L429.1,505.1L429.2,508.8L429.3,512.4M564.2,407.8L568.5,408.2L571.4,410.8L574.1,415.1L577.4,417.6L583.1,418.4L587.2,417.5L592.2,415.2L597.0,415.4M470.3,291.1L468.4,286.7L467.6,280.8L469.4,275.5L471.2,272.5L471.0,269.0M487.1,507.1L492.2,505.6L495.7,504.2L498.8,503.2L502.3,498.3L506.4,494.8L510.9,494.2L515.4,494.2M509.9,235.8L513.9,232.7L519.5,231.3L525.4,231.2L531.0,230.9M480.1,196.7L483.0,195.7L487.0,193.4L489.9,191.8L493.8,191.5L497.2,191.2L500.6,191.3L504.4,188.9L508.0,184.9L509.5,181.0L508.6,177.4L507.2,173.0L505.1,167.8L500.7,164.5L494.8,163.6M440.7,487.8L442.4,485.2L443.0,479.8L445.2,475.2L445.0,470.6L442.8,468.0L437.9,464.8L434.0,460.8L429.8,460.2L426.4,461.8L423.2,466.6L421.6,470.8L418.6,475.5L414.2,477.3M433.1,335.1L432.0,330.9L430.9,327.0L429.2,323.0L424.6,320.1L420.0,320.3L415.8,320.3L412.7,321.5L409.4,323.6M785.9,442.7L781.1,442.7L776.9,445.4L774.1,448.0L769.1,448.6L765.7,447.3L763.3,445.2L760.1,444.2L756.9,441.8L755.4,438.5L753.8,433.3L755.4,428.6L755.9,425.4M237.2,669.2L238.6,664.0L241.6,660.1L241.8,654.8L239.1,650.7L236.2,645.7L235.2,642.8L236.7,637.8M705.3,422.8L700.4,425.2L698.4,427.8L695.7,429.9L690.9,431.3L686.6,430.8L682.5,427.5L680.2,422.2L677.0,417.7L675.4,412.8L673.1,408.3M767.7,292.0L764.4,292.2L760.4,290.3L756.2,291.1L751.5,292.9L747.1,291.8L743.5,289.8L741.4,287.3L740.2,284.0L739.4,280.5L738.0,277.3L735.1,273.5M470.1,476.3L466.3,479.7L464.2,482.3L461.1,486.1L459.2,489.8L460.1,495.5L459.1,499.2L459.5,502.8L458.1,505.6L458.0,509.9L457.7,514.0L459.3,517.2L460.8,522.0M205.2,529.9L201.8,529.2L198.3,525.3L197.2,522.2L197.5,518.5L196.0,514.2L195.4,510.9L196.2,506.2L200.1,502.0L203.6,499.8L208.7,500.1M568.6,594.4L572.0,593.3L576.8,594.5L581.5,594.1L584.5,592.9L587.1,588.2L590.2,586.7M284.5,608.5L287.9,604.6L291.4,601.0L296.6,599.9L299.3,598.2L303.4,598.4L306.7,600.1L310.5,601.7L314.9,605.5L318.4,608.6L321.6,610.4M547.5,641.2L543.5,636.9L543.2,633.3L542.1,629.4L537.9,625.3L536.1,622.4L534.0,619.7L533.3,613.8L536.3,608.9M459.9,520.6L464.3,524.3L465.4,527.4L468.1,529.8L469.8,532.4L469.6,538.1L472.5,543.0L475.3,545.3L478.5,546.6L483.6,548.9L487.9,548.7L492.4,550.4M774.7,231.2L771.8,232.9L765.9,233.0L763.5,234.9L758.6,236.0L753.9,237.0L748.6,236.1L745.8,237.7L740.0,238.4L736.0,237.0L732.0,236.5L727.5,239.4L724.5,243.1L721.9,246.1M471.4,303.4L472.7,299.8L474.3,294.7L474.6,291.0L475.6,287.4L476.8,283.8L479.5,281.5L481.3,278.0M651.8,288.7L656.5,287.0L660.6,285.5L663.1,281.6L663.5,276.6L661.9,273.8L661.6,267.8L660.8,262.9M397.4,574.7L393.2,577.8L388.9,581.1L387.8,585.5L387.6,588.7L385.6,591.5L384.3,596.9L379.8,600.7M270.8,255.5L269.7,252.0L269.7,248.2L272.2,243.2L274.9,240.1L279.8,237.1L282.6,232.2L287.4,230.3M261.1,345.8L256.4,342.9L251.6,340.5L248.3,340.1L245.5,339.0L242.0,334.2L241.9,329.2L239.2,323.9M369.7,575.9L375.2,575.7L378.8,575.5L383.8,578.5L389.1,577.9L392.1,577.1L394.8,574.7L398.1,573.3L399.8,570.1L403.4,567.4M477.9,278.1L481.1,276.1L484.9,274.6L489.4,272.6L492.5,270.1L497.2,269.4L501.7,268.3L505.5,267.1L509.1,268.1M479.9,463.0L483.9,463.4L488.0,464.1L491.6,465.9L495.5,468.9L499.9,468.7L504.3,465.8L509.2,465.0L514.1,465.5L518.6,465.3L522.9,467.3L526.8,466.6L530.0,466.7M798.1,325.7L794.4,325.5L789.7,322.8L784.1,321.8L779.9,321.0L774.2,319.5M727.8,262.9L725.5,268.2L722.5,272.3L720.5,275.6L718.1,278.0L715.9,282.8L715.5,286.6L713.5,289.3L710.5,293.5L710.7,298.9L707.8,303.0L705.2,307.2M774.2,503.4L780.1,502.6L783.7,504.0L788.8,503.7L794.5,505.5L797.5,507.0L799.8,509.3L801.2,514.4L800.4,519.9L799.1,525.6L797.2,529.7M633.8,208.1L637.5,207.8L640.8,208.2L644.8,206.6L649.4,204.5L651.2,201.1L653.7,199.0L655.5,196.4L655.4,191.8L655.6,187.9L655.7,184.7L653.9,181.6M224.8,236.2L225.1,231.6L223.9,226.0L222.1,222.0L220.0,218.6L220.4,214.7M319.6,638.0L318.2,634.0L316.6,630.0L315.6,624.7L317.3,620.6L321.4,618.1L323.8,616.2L325.0,612.9L329.1,610.4L332.4,605.4L336.3,602.8L340.1,602.8L342.9,604.1L346.1,603.5L351.3,606.3M788.3,622.6L793.4,622.7L796.7,622.5L801.4,621.8L805.5,622.5L810.2,624.4L812.9,626.1M338.5,467.3L333.5,468.7L329.9,469.1L325.2,471.4L319.7,470.2L316.3,466.6L313.8,464.9L311.2,460.4L309.2,455.6M346.2,575.2L344.3,571.3L342.4,567.8L340.9,563.9L337.9,559.5L335.1,556.1L334.4,551.8L332.6,546.4L334.4,541.3L335.4,536.4M370.8,542.3L375.1,542.0L378.8,542.5L382.8,544.7L384.3,548.5L384.6,551.5L385.6,556.7L388.1,560.8L391.5,563.3L392.4,566.8L391.3,569.8L388.9,574.7M225.2,666.1L223.4,662.1L219.9,658.5L217.2,656.3L211.9,656.2L206.5,655.5L203.5,655.1L200.0,653.2L198.3,649.6M603.5,330.1L602.8,325.3L601.9,320.8L604.1,316.7L607.8,314.9L611.0,314.6L615.7,312.8L621.2,312.3L624.9,311.3L629.0,309.2M525.0,383.1L520.0,385.4L516.5,386.3L513.1,390.9L510.8,393.0L509.6,395.8L510.7,400.5L510.6,404.3L511.7,409.1L513.3,412.7L513.2,418.4L510.8,422.9L511.7,428.6M569.3,670.7L569.3,674.1L566.8,677.3L564.5,680.9L559.6,683.9L556.3,684.9L551.8,687.4L548.3,691.8M486.8,217.8L482.0,215.6L478.6,211.9L478.2,208.9L476.4,204.4L476.3,199.9L476.5,195.8L478.3,191.9L482.4,189.4L485.2,187.9L488.0,183.8L487.9,178.5M538.9,362.7L537.4,366.1L538.5,369.9L539.0,373.7L542.6,378.0L545.6,381.3L550.4,384.4L553.3,388.3M622.0,433.2L618.2,435.5L614.2,437.7L608.5,438.2L605.8,439.7L603.5,441.8L599.0,443.4L596.1,445.6L590.7,446.3L585.6,445.7M240.4,433.6L240.0,439.2L241.2,442.3L242.4,446.1L244.3,450.4L247.6,452.3L253.2,454.1L256.3,455.3L259.8,459.4L261.9,464.2L264.6,469.5M558.0,455.8L563.1,454.4L566.8,451.9L571.7,451.8L577.1,454.4L579.7,458.5L584.5,460.2L587.4,464.1L590.7,466.2L596.3,466.9L602.2,467.9M349.3,586.4L347.1,584.2L345.9,581.0L343.7,578.9L339.5,577.5L337.2,574.2L332.7,571.0L327.9,570.2L322.4,568.2L318.0,569.6L313.1,572.0L309.5,575.8L308.1,580.0M335.1,325.1L336.6,321.9L336.9,318.0L339.7,313.7L344.4,312.0L348.5,311.4L352.9,312.0L356.9,310.0L360.6,307.2L361.5,304.3L364.9,302.0L367.2,299.5L371.6,295.8M312.3,194.5L310.6,190.5L309.3,187.7L307.2,182.2L304.0,179.5L299.9,178.2L296.5,177.8L290.9,178.1L287.8,178.9L283.7,181.6L280.0,181.7L276.6,181.1M271.0,356.0L274.6,356.2L278.7,354.5L281.5,353.1L284.4,351.7L289.8,351.7L293.9,351.2L297.1,352.0L300.6,350.2L303.6,350.9L308.2,354.4L312.8,357.2L314.8,360.5L318.5,363.9M426.1,534.5L423.1,535.3L419.7,537.2L414.5,538.2L408.7,537.6L404.8,539.1L399.5,538.3L394.0,540.5L388.5,540.9L383.8,542.0L378.5,539.9M816.4,598.5L812.6,596.6L809.8,594.8L807.9,592.1L806.4,588.7L803.3,584.9L799.5,583.0L796.1,578.1L792.7,575.6L790.5,572.8L789.9,569.3L789.5,565.3L787.3,563.2L783.4,562.9L777.6,564.3L774.4,564.5M691.0,275.8L687.2,275.8L683.5,275.4L678.6,273.3L674.3,271.2L671.8,266.9L672.1,263.5L673.4,258.6L674.2,253.1L674.9,249.6M796.7,217.4L801.3,220.3L804.5,223.7L805.5,227.7L809.1,231.2L812.7,231.6M554.7,605.1L559.3,607.3L562.7,612.0L566.3,615.4L569.8,617.7L572.5,620.3L577.1,621.0L581.4,620.7L585.3,619.0M189.8,421.5L189.4,426.0L191.1,429.0L192.9,433.7L191.2,438.8L191.1,443.1L191.0,448.5L191.6,454.3L192.2,458.4L192.9,462.4L191.3,465.1M521.2,658.5L524.4,657.9L527.3,656.0L531.0,654.6L535.9,651.7L538.9,651.1L541.6,649.0L542.9,645.9L547.2,642.9L550.2,641.2L552.8,638.7M361.3,212.7L357.8,209.7L356.9,205.8L355.0,200.4L355.1,194.9L357.1,192.0L359.2,188.8L361.7,184.0L365.5,182.1L368.1,178.6M386.1,542.3L387.5,538.0L386.7,533.4L389.1,528.4L389.6,523.8L389.0,520.3L390.0,515.1L389.7,510.9L390.9,505.8L391.5,502.5L390.2,499.3L390.5,494.8L391.6,490.8M231.9,299.0L227.4,298.5L221.5,297.8L217.0,294.8L214.6,291.3L209.7,287.9L207.7,282.9M593.4,361.0L589.0,363.5L584.8,363.6L581.1,363.0L577.8,363.3L572.4,361.4L568.3,361.2L565.2,362.8L559.8,364.4L557.4,367.3L554.1,369.0L550.1,369.0L546.5,369.0L542.4,370.3M376.7,423.1L376.1,427.5L378.3,431.2L383.0,433.4L386.3,435.2L390.3,437.2L394.7,438.2L398.4,438.7L403.0,436.9L408.0,436.7L411.4,434.6M294.7,509.2L290.9,508.5L287.0,508.8L284.0,509.9L281.2,511.2L278.8,514.3L278.4,518.9L275.2,523.3M241.6,259.8L243.9,263.0L246.8,266.3L249.0,269.4L250.0,273.3L248.6,278.5L250.7,282.7L255.5,285.6M403.6,505.2L400.4,503.0L397.4,499.8L394.3,499.3L389.7,498.7L385.2,497.4L380.9,496.0L378.9,493.0L377.0,488.5L375.0,484.0L372.5,479.5L372.5,475.0L373.2,470.1M287.3,301.9L290.0,299.8L292.4,296.9L296.4,293.7L300.6,292.6L304.7,291.1L308.5,288.9L313.5,287.6L317.6,285.4L319.3,282.7L320.9,279.0L320.2,275.8L318.2,270.4L318.6,267.3L318.1,263.2M680.9,217.7L678.8,214.9L675.6,212.0L673.9,208.8L673.8,203.0L671.9,199.3L670.4,196.4L670.3,193.3L670.2,190.0L666.9,185.1L667.0,181.9L665.9,178.0L665.2,174.8M310.2,581.7L314.4,585.1L316.6,588.0L317.0,593.6L317.2,596.8L318.6,600.4L321.3,605.6L323.2,610.7M444.1,386.0L439.8,382.9L436.2,381.7L430.4,381.3L426.3,380.9L423.2,380.8L417.9,379.9L413.4,381.8L411.0,386.5M255.9,203.4L252.1,201.8L247.8,200.3L244.7,201.4L240.0,201.1L236.0,200.9L231.8,199.1M610.3,414.3L605.0,412.9L602.7,410.8L600.5,406.5L598.6,401.1L594.9,398.5L589.6,396.1L585.0,396.3L580.4,398.9L576.0,401.7M702.6,399.5L701.0,404.4L697.2,408.8L694.8,412.5L690.4,414.3L687.2,414.6L683.5,415.3L679.7,418.2L676.7,421.4L673.6,422.6L669.3,424.0L666.2,426.8L662.8,429.9L661.6,433.6M773.6,631.8L774.2,627.5L775.8,622.9L776.5,617.0L776.1,614.0L773.8,611.2L771.7,606.1L768.5,604.2M258.0,228.6L260.5,225.6L265.0,224.2L267.8,221.3L272.9,220.0L277.4,221.8L281.5,225.0L285.2,225.7L287.7,228.2L289.1,231.2L293.6,233.6M721.0,589.7L716.9,586.0L715.9,583.1L711.6,580.1L706.8,577.0L705.6,572.8M604.7,527.5L603.9,533.2L601.6,538.0L600.2,541.4L598.6,546.2L597.3,549.2L598.5,553.2L600.8,556.1L604.5,558.3L608.5,562.4L610.0,565.0L610.1,569.8M572.1,361.9L569.8,364.1L564.9,367.0L560.2,368.4L554.4,367.6L549.4,364.3M675.3,482.4L673.5,478.7L669.2,476.4L664.9,475.3L661.4,474.4L657.0,476.4L653.1,480.6M632.2,459.4L635.8,457.8L638.7,453.0L641.9,448.8L644.6,447.0L648.0,444.8L649.8,440.3M548.5,335.8L546.8,340.6L546.1,346.1L544.7,351.0L544.3,355.2L540.8,359.9L536.2,362.8L532.9,362.3L528.8,362.8L525.2,364.0M715.5,671.8L716.7,667.1L718.0,663.9L722.0,661.7L726.0,657.3L727.7,654.6L730.4,652.0L732.0,648.4M385.8,513.3L391.5,513.1L396.6,510.9L399.3,507.0L399.3,503.7L401.3,501.0L405.0,498.3L406.3,493.1L404.2,487.8L404.5,483.3L404.5,480.2L405.3,477.2L407.1,471.8L408.9,468.9L412.8,465.6M639.2,599.4L640.9,604.7L641.1,608.6L643.5,612.0L648.5,614.9L651.8,614.8L656.0,618.1L659.5,620.7L661.3,625.5L663.6,629.0M355.2,230.2L359.7,228.6L363.8,226.4L367.7,226.6L371.7,225.0L375.4,223.3L379.7,222.0L382.5,220.1L386.0,215.8L389.3,214.2L392.6,211.2L395.1,209.0L397.0,204.9L401.3,201.4M225.5,333.1L228.7,333.3L232.3,332.8L237.0,331.7L240.3,331.6L243.5,331.7L248.9,331.5L254.0,329.5L257.1,326.7L259.9,325.7L264.4,324.5L270.2,324.8L273.7,326.0L278.1,325.5L282.4,323.7M505.9,356.8L506.2,351.9L506.3,346.8L508.7,343.9L509.0,339.6L510.0,333.7L509.1,329.4L506.9,324.3L507.1,320.0L509.0,317.7M267.7,478.8L267.0,475.5L265.4,472.4L263.9,469.7L264.0,464.7L266.0,460.6L270.7,457.8L276.1,457.3L279.6,455.5L282.0,450.7L284.5,445.3L285.1,441.1L288.6,436.3M742.5,639.8L744.8,644.2L744.1,648.7L745.7,653.1L749.2,655.7L753.5,655.9L758.1,658.3L760.5,661.9L762.5,664.4L763.8,668.9L765.1,672.1L766.5,674.9M505.5,508.2L508.7,508.5L513.7,508.5L518.9,511.1L523.6,514.5L527.1,517.6M309.6,399.6L312.1,396.7L312.5,392.1L312.3,386.3L310.7,383.0L307.9,381.7L304.3,377.4L301.5,376.3L298.2,374.5L293.6,371.0L291.5,367.8L290.0,364.3L289.7,360.5L292.0,356.0L295.4,353.8M346.1,504.7L347.4,509.3L349.3,512.0L350.1,515.3L349.7,519.1L350.1,524.9L348.0,530.0M565.7,645.4L562.1,643.3L559.1,641.2L555.3,637.1L553.7,633.7L550.0,631.9L544.9,629.9L540.8,627.9L536.9,625.3L533.8,621.9L531.5,618.9M547.9,341.4L552.0,341.4L555.7,343.8L557.3,348.4L557.6,353.4L556.5,356.2L554.4,359.1L550.6,362.0L545.7,364.0L541.2,364.0L537.3,366.2L533.2,368.2L530.8,370.5L527.0,371.2L522.3,373.7M365.9,370.8L362.3,371.2L357.2,368.3L351.9,365.3L348.7,362.7L345.7,362.4L340.7,361.2L335.7,359.2L330.7,357.6L326.3,355.5L322.0,353.0L319.3,351.2M454.3,662.3L450.2,662.7L445.5,665.8L442.8,670.2L442.4,674.7L440.1,677.0L437.2,677.9L431.9,675.8M232.2,572.2L235.8,570.9L240.6,571.1L244.7,574.6L249.4,574.7L253.0,574.4L257.1,577.3L261.4,578.9L266.4,581.7L270.4,582.2L274.7,582.8L278.3,581.8L283.2,579.1M576.1,420.0L575.6,414.1L575.5,410.1L573.7,405.3L571.5,400.8L567.6,396.8L562.5,394.4L558.6,392.9L554.5,390.8L550.5,388.4L548.5,383.6L543.6,380.2M516.8,615.4L522.4,614.4L525.7,611.4L529.7,611.1L533.8,611.9L539.2,612.6L544.2,614.2L547.5,614.0L551.1,610.9L554.1,608.1L558.0,606.3L561.1,604.4L563.9,600.0L565.8,596.8L565.4,592.0M301.8,435.7L301.2,430.9L302.5,425.1L302.5,419.1L302.1,414.6L300.5,411.8L299.5,408.6L296.8,406.8M307.2,317.5L305.3,312.8L306.8,308.2L307.9,303.7L310.6,298.9L313.5,296.6L316.7,295.7L319.9,292.5L321.5,288.1L321.7,282.3M766.5,546.8L761.1,544.3L756.9,543.9L753.4,542.0L750.4,540.9L746.7,536.8L743.0,535.1L740.4,532.2M473.5,473.6L476.0,469.7L479.5,466.7L482.7,464.2L486.9,462.6L492.0,461.4M784.1,423.2L784.4,419.9L783.5,416.6L778.9,413.3L777.7,409.3L773.4,406.4L771.3,404.1L770.1,401.1M195.5,435.2L194.1,430.7L191.0,427.3L186.2,425.1L180.9,424.3L176.7,423.7L172.2,422.2L168.0,421.0L165.0,418.1L161.9,417.1M554.3,222.8L555.4,227.0L557.9,232.1L562.4,235.6L565.9,235.5L570.4,235.1L574.0,232.1L577.0,231.7L582.7,231.4L586.9,231.6L591.3,233.0M382.0,593.7L378.4,595.7L376.9,599.2L374.8,604.7L375.6,610.3L373.0,615.0L372.4,618.0L370.2,620.3L367.6,625.6L364.1,629.7M754.5,629.9L753.5,624.8L753.7,619.0L753.5,613.7L756.4,609.9L760.0,606.8L763.1,604.0M543.3,615.3L545.1,619.7L543.7,624.6L545.8,630.0L547.3,633.3L547.5,638.2L545.5,642.4L545.0,646.8M210.3,458.2L207.8,461.6L204.6,464.5L199.8,467.0L197.4,470.4L195.6,475.1L191.1,477.7L187.6,478.5L183.6,479.9L181.6,482.5L180.0,486.3L179.9,490.2L181.0,493.5M367.0,572.2L364.7,575.0L364.2,579.4L365.0,583.5L365.9,586.9L366.9,589.8L367.8,593.9L370.2,599.3M230.2,395.3L226.8,395.0L223.2,393.8L219.5,391.8L217.6,387.9L214.9,385.1L214.4,381.1L212.3,377.0L210.9,371.3L207.9,368.7L205.7,364.8L204.4,359.9L202.1,357.8L198.3,356.6M448.8,528.4L443.6,530.9L438.0,532.0L433.5,533.0L430.0,533.0L425.5,533.3L421.6,532.5L416.6,533.0L414.0,535.5L409.1,536.0L403.4,536.4M471.8,602.2L473.4,605.7L476.0,607.7L477.4,611.8L475.6,616.1L477.0,620.6L476.5,624.7L477.0,628.4L479.0,633.3L481.6,636.9M221.3,206.9L227.1,205.9L232.1,205.3L235.4,202.6L239.1,200.5L242.9,199.3L246.5,198.9L250.8,198.5L254.0,198.3L258.6,196.1L261.4,192.7L266.1,191.7L271.4,192.4L274.4,195.3M661.7,408.7L662.6,403.7L661.6,400.6L660.9,396.3L662.1,393.4L666.0,389.7L667.6,387.0L671.1,385.1M510.0,207.8L507.9,204.9L507.9,201.4L507.9,197.0L506.2,193.6L503.5,191.4L498.5,191.3L494.9,190.3L492.2,187.0L488.3,182.7L486.1,178.9L485.2,173.8L483.8,170.9L483.1,165.7M257.2,552.2L258.6,556.9L261.8,559.5L263.6,562.3L267.6,563.8L270.8,567.5L273.7,568.9L276.9,573.4L278.2,576.8L278.1,579.8L279.9,583.4L279.3,586.5L280.8,591.5L280.5,595.2M472.9,227.7L470.6,231.9L467.1,235.0L462.9,236.1L460.0,237.0L456.8,238.4L452.9,237.4L449.5,236.8M751.3,617.6L748.0,621.2L743.4,622.0L738.2,621.3L733.5,622.9L730.1,624.4M798.7,635.7L794.3,639.4L789.1,642.0L786.0,646.6L781.8,650.6L781.1,655.0M582.8,364.3L578.1,365.2L572.2,366.0L567.9,366.7L565.4,369.0L561.6,371.8L559.2,375.5L553.5,377.3M568.0,315.1L568.5,309.9L570.8,305.9L576.1,303.2L580.2,303.0L584.7,301.1L586.9,298.3M609.9,653.2L612.3,649.4L614.5,643.9L614.5,639.7L613.5,635.1L612.2,631.4L611.3,627.9L612.7,622.3L612.6,619.2L610.6,613.6M243.5,490.4L241.0,487.9L237.9,483.6L235.0,481.0L231.9,480.3L227.5,481.1L223.0,479.6L219.2,477.8L214.3,476.2L210.5,474.3L207.3,474.5L203.1,475.0L198.9,477.1M436.1,359.8L439.8,362.9L441.1,365.9L443.1,369.4L442.8,374.2L444.2,378.3L448.1,380.7L451.5,380.5L456.2,380.3L460.4,378.2L464.3,374.8L465.6,369.5M274.2,384.0L278.5,383.9L284.2,385.2L287.4,386.7L291.2,389.1L292.6,392.5M546.9,189.8L547.9,193.0L550.7,197.3L550.3,202.6L548.8,207.0L547.5,210.6L544.0,213.0L541.0,215.2L538.4,218.8L535.8,221.0L533.6,224.8L531.1,228.9M426.0,365.2L426.0,368.2L426.2,372.7L428.7,377.9L428.2,382.4L426.2,385.9L422.1,389.3M272.6,251.9L273.6,248.1L271.8,244.0L271.9,240.9L272.0,237.6L271.5,233.2L268.2,230.2L266.6,225.0L267.8,220.8L268.2,216.2L267.4,213.2L266.8,209.5L265.3,205.3L263.3,202.4M498.7,540.9L497.0,544.4L494.9,548.2L492.0,550.2L488.6,551.7L482.9,552.6L478.0,555.2L472.9,558.2L467.0,557.8L463.5,560.1L458.7,562.5L453.3,564.3L450.8,566.9M225.1,216.8L228.3,220.1L231.3,221.8L235.8,222.1L239.2,224.1L243.6,225.2L246.8,227.4M364.2,520.6L360.1,520.3L356.4,520.2L353.8,518.6L350.6,517.8L347.7,516.4L344.5,513.1L341.1,508.6L336.0,506.1L331.9,504.1M528.6,674.5L533.2,674.2L536.4,674.5L541.4,673.6L544.4,674.7L550.2,674.2L554.9,674.3L557.4,672.3M509.3,530.2L508.7,535.7L510.5,540.4L513.0,543.0L513.4,548.9L517.1,552.9L519.3,556.6L520.7,559.6L524.0,562.7L528.9,563.7L532.7,568.4L535.0,570.6M218.3,628.1L214.9,625.6L212.6,621.8L208.3,618.5L205.2,618.5L200.8,619.4L196.0,619.4L192.6,620.8L187.2,620.2L183.4,620.1M316.3,241.9L320.5,241.7L325.5,239.3L330.7,238.3L335.2,234.7L335.8,231.7M381.7,437.1L384.3,435.6L385.8,431.8L386.6,428.9L386.8,425.6L388.8,422.5L389.9,419.2L392.4,416.9L394.8,414.2L397.0,408.6L400.3,404.6L403.0,399.3L407.4,397.2L409.5,394.9L412.8,391.8M816.0,587.6L815.6,590.7L817.4,596.3L816.8,601.5L815.7,604.4L812.6,606.7L808.1,607.8L803.7,608.9L798.4,607.2L793.0,606.1L789.1,607.2L786.4,608.8L784.0,610.6L778.5,610.7L775.4,610.8M668.1,612.9L672.9,612.8L678.4,612.7L683.6,611.4L688.9,609.5L693.5,609.2L697.1,610.5L699.1,614.0L700.6,617.3M742.4,656.9L738.6,659.6L735.7,662.3L730.6,663.9L727.5,663.0L722.9,660.9L719.8,660.9L715.3,658.0L712.7,655.0L708.8,651.2L703.7,650.1L699.9,648.0L697.8,643.6M306.2,388.2L302.7,393.0L297.5,395.0L292.5,393.6L289.9,391.7L285.9,389.5L280.2,389.9L276.6,390.8L273.5,394.1L270.6,399.2M455.6,265.9L459.6,267.9L463.4,269.8L465.0,272.5L469.2,275.9L472.9,277.5L476.6,278.6L479.1,280.7L482.9,284.2L487.4,286.9L492.0,288.4L495.8,287.6M570.6,415.3L573.5,417.9L578.0,419.5L581.3,419.4L585.3,416.5L590.6,416.0L596.2,416.1L599.5,418.0L605.1,420.0L607.9,424.1M746.7,657.1L748.8,660.6L752.7,663.7L757.3,664.0L760.5,662.7L765.5,662.7L771.0,664.2L776.5,662.9L779.9,660.6L782.9,660.8L785.8,661.8L791.3,663.9M489.7,493.2L487.7,496.3L485.2,498.4L483.8,502.7L479.3,505.5L474.3,507.2L471.0,510.2L470.2,514.8M709.0,411.7L713.4,410.2L715.1,407.7L716.1,402.9L718.6,399.0L718.1,395.3L719.1,391.0L719.4,385.7L720.0,379.7L717.8,375.6L715.8,373.3L713.8,368.9L713.2,365.9M545.5,201.4L541.1,201.6L536.6,198.7L531.6,197.8L529.3,195.9L528.2,191.7L528.9,188.7L528.8,184.8L526.8,180.3L526.8,175.3L528.6,172.5L529.7,168.5L533.0,164.4L538.5,163.3M651.9,588.3L647.4,585.1L644.3,584.7L639.4,582.4L633.8,582.4L630.6,581.2L625.6,581.8L622.1,581.7L619.2,579.5L616.4,574.4L612.1,571.7L607.4,568.4M591.6,579.6L596.2,578.2L599.4,578.7L604.4,578.0L607.4,575.1L612.3,572.2L616.3,570.3M205.6,268.6L207.8,270.7L211.2,273.1L213.8,278.1L217.7,281.5L222.3,284.2L224.6,286.4L227.9,289.2L231.6,292.0L234.2,295.3L237.4,299.8L238.7,303.1L241.6,305.6L242.6,309.6M794.7,530.1L790.7,534.4L787.3,538.0L783.2,540.6L780.7,544.6L778.4,549.1L775.7,551.5L773.4,554.5L769.1,555.6L763.5,557.6L758.0,557.2L754.6,557.0M472.5,427.5L476.5,427.7L480.0,425.6L484.8,424.5L490.0,426.1L492.8,429.7L495.4,431.3L499.9,431.9L502.7,433.9L505.4,437.6L507.4,442.1L509.5,444.9L511.6,448.7M444.9,191.5L449.6,191.6L453.9,190.3L457.2,189.5L461.3,191.1L463.6,193.1L467.0,196.6L469.8,200.8L469.4,204.8L469.4,209.9L472.4,213.7M570.2,438.4L569.2,443.8L567.7,449.6L564.8,453.2L561.8,456.2L556.4,457.3L551.9,460.7M411.3,552.4L407.0,554.7L401.4,554.2L397.2,553.8L392.6,552.0L388.1,552.9L383.8,555.2L381.6,558.4L380.6,562.2L378.7,567.4L376.1,571.6L372.8,574.2M679.7,231.5L684.0,228.6L688.3,226.9L693.3,226.4L697.1,225.7L700.9,222.0L703.6,216.7L703.7,212.3L706.1,209.0L709.1,205.6L710.8,202.2M234.8,409.9L235.6,406.1L236.4,401.8L239.1,399.5L241.4,395.2L242.7,391.4L241.5,385.8L240.2,381.2M597.8,335.9L594.9,333.4L589.7,331.7L585.1,329.0L582.7,325.2L580.3,322.5L577.5,320.4L574.4,315.8L571.8,314.2L570.3,311.4L568.2,308.8L567.8,305.4M470.3,292.9L473.7,290.4L476.3,287.9L480.1,287.0L484.9,286.1L488.2,283.3L489.8,279.0M724.5,647.4L727.0,650.8L727.0,655.3L725.4,658.1L723.6,662.8L720.3,665.9L715.2,667.1L710.4,668.9L707.2,670.0L701.8,668.8M335.6,453.7L331.7,457.9L329.7,460.6L326.7,462.6L322.8,463.6L317.9,465.1L314.2,464.1L309.8,465.3L305.8,465.0L300.6,465.4L296.5,463.1L292.7,461.1L288.3,461.2L284.8,463.3L281.8,464.5M650.8,549.8L650.1,553.5L648.8,557.9L646.3,560.9L641.7,562.5L637.0,562.7L632.8,564.8L629.8,564.3L625.9,564.6L621.0,566.8L617.7,567.5L612.1,567.1L609.4,568.7L604.2,570.8M503.8,387.5L499.4,384.7L494.4,381.9L491.6,378.4L488.4,376.2L486.9,371.5L483.4,368.7L479.3,366.1L473.8,364.5L468.5,363.2L462.9,363.7L458.2,363.8L452.5,364.5M491.9,197.5L495.4,196.0L500.7,195.1L505.2,193.6L509.8,190.4L514.7,188.3L517.0,186.3L520.5,183.3L522.9,178.4L523.0,174.7L525.2,169.9L526.6,166.8L528.5,163.3L528.7,160.1M542.6,615.5L538.8,613.6L533.2,611.7L529.1,609.7L525.9,606.1L522.6,602.3L519.1,600.2L514.0,601.0L509.0,599.5L505.9,595.2L502.3,593.6L500.5,590.9L500.3,585.5M540.5,542.1L542.3,538.9L545.6,536.7L550.4,533.3L555.6,533.6L558.8,534.1L563.2,532.2L566.6,531.0L568.7,528.4L573.7,527.0M689.0,606.9L686.0,610.7L683.7,613.5L681.3,618.9L679.7,623.0L680.9,627.7L683.2,630.2L686.1,634.0L688.9,635.8L691.9,640.3L694.5,642.6L697.8,645.5L701.0,646.5L703.7,649.7M533.8,559.2L537.8,555.5L540.3,552.6L544.9,551.1L549.8,548.7L552.9,549.5L557.8,551.7L562.5,553.6L566.4,552.5L569.4,549.8M611.6,612.7L607.7,614.8L603.4,618.1L597.7,619.7L592.1,619.4L588.6,620.7L584.7,620.8L580.8,618.6L577.5,617.1L575.1,614.6L571.1,610.2L567.8,605.3M483.3,554.4L486.3,557.4L488.5,562.0L490.8,566.8L492.3,569.8L494.5,574.6L497.9,577.3L499.2,580.1L498.9,584.1L499.5,589.2L499.5,593.0L501.6,596.8M638.1,528.7L635.5,526.5L634.3,523.6L632.9,519.7L634.0,515.0L633.5,511.8L632.6,507.2L631.5,502.6L628.4,499.9L626.9,496.4L624.3,494.0L623.1,488.5L621.8,484.7L618.9,479.9L619.2,474.0M257.1,648.8L259.2,651.1L261.0,654.4L260.8,658.0L259.6,662.1L260.9,665.7L264.0,670.1L265.4,675.7L267.8,678.5L270.9,681.0L275.9,682.4L280.1,680.5L282.5,677.3M677.1,246.0L675.1,240.8L673.3,237.8L672.0,234.2L670.3,229.4L671.8,225.1L674.6,220.6M480.7,653.1L477.0,655.7L472.9,658.1L467.4,658.3L462.9,660.7L459.1,662.6L456.0,667.4L451.0,669.0L447.9,669.6L444.3,671.4L442.2,674.9L440.8,678.9L441.6,682.2L439.9,686.6M458.6,497.3L455.5,499.3L452.8,503.1L449.9,505.0L448.0,510.2L449.6,514.6L449.2,520.3M610.8,208.5L612.5,205.4L613.3,201.8L615.3,197.0L618.9,194.3L619.8,191.4L618.9,188.1M375.6,535.8L377.8,538.1L382.4,539.8L387.0,542.2L390.0,546.9L393.0,550.3L397.6,552.8L399.5,555.9L401.0,559.8L402.0,564.7M306.1,285.4L305.6,280.2L303.4,277.1L303.4,273.5L305.0,270.1L308.2,267.4L312.3,264.4L315.7,263.3L319.2,263.0L324.0,260.7M621.5,645.3L617.9,645.5L613.5,644.7L608.9,643.2L604.6,642.2L602.0,640.7L598.1,641.2L593.2,638.9L588.4,635.9L584.0,634.1L581.2,629.1L580.6,624.9L577.8,619.8M418.1,386.6L415.8,388.9L412.7,389.3L408.0,392.3L404.9,392.8L399.0,393.3L396.0,391.8L390.4,392.5M587.9,200.2L590.3,203.2L590.8,208.6L594.2,213.2L598.0,214.2L601.6,213.6L604.7,213.2L607.9,214.9L610.8,217.7L611.9,222.2L613.1,227.4L613.8,231.7L616.9,236.1L618.7,240.1M573.6,666.2L577.9,665.2L580.9,664.7L586.0,667.0L591.2,669.4L594.8,672.9L598.9,673.5L602.6,672.0L605.6,672.3L611.0,674.0L613.9,676.8L618.9,680.2L621.7,683.4M249.9,273.8L245.9,276.8L240.8,279.8L236.0,279.4L231.9,281.5L229.3,284.3L228.4,289.3L227.0,292.8L226.9,298.8L226.4,303.8M353.6,314.3L357.9,315.0L363.4,316.6L367.2,316.1L371.7,312.4L376.5,308.8M520.6,211.2L516.7,210.7L513.8,207.5L510.4,205.3L507.1,204.4L502.0,204.3L498.4,205.0M329.5,449.1L324.8,451.3L321.3,454.8L319.0,456.7L317.0,460.8L315.8,466.6L316.6,471.3L316.2,475.5M808.7,534.1L813.5,532.7L816.6,533.9L820.7,536.8L826.4,536.5L830.4,535.2M807.6,532.9L806.3,536.0L804.4,538.3L803.1,543.4L800.9,547.2L801.0,552.4L799.2,556.0L798.9,559.7L794.8,564.0L794.2,567.7L796.5,572.6L795.1,578.4L791.1,581.8L790.0,584.9L790.9,588.1M680.1,296.2L681.7,293.4L681.6,287.9L683.7,284.9L687.7,281.5L691.1,280.8L693.7,279.0L697.5,277.6L701.0,277.4L704.8,277.9L709.5,278.1L712.3,280.3L713.8,283.1L718.0,286.1M718.8,420.3L718.1,425.0L715.5,430.1L715.0,434.9L716.9,438.0L720.6,441.7L720.9,445.4L719.7,449.2L721.0,452.7L723.7,456.1L724.5,460.7M231.5,277.1L228.0,281.3L225.3,286.1L222.0,288.7L219.5,293.8L218.5,296.6L216.9,301.9M493.1,651.9L494.3,648.7L498.5,644.8L502.7,642.8L505.5,641.4L511.0,640.6L514.4,640.2L517.6,640.9M469.7,252.9L472.7,253.8L477.2,253.8L482.3,253.5L487.4,253.6L490.6,251.5M695.9,285.8L700.5,285.2L704.7,285.6L708.5,287.1L712.0,289.9L716.1,291.6L721.3,293.2L726.1,294.3L730.3,296.4L733.5,296.3M351.3,362.0L348.2,361.8L344.9,362.0L340.3,362.5L335.3,360.0L333.0,356.3L328.9,352.6L324.8,351.8L319.8,354.0M770.3,279.7L772.7,276.1L776.5,273.9L782.3,274.4L786.9,273.9L792.5,272.8L796.5,274.1L800.4,274.5L805.1,276.2L809.1,278.4L811.3,280.5L815.1,283.9M699.7,299.1L704.9,297.5L707.6,295.2L709.6,291.1L713.0,288.9L718.5,289.2L721.1,287.4L725.6,287.9L730.5,290.5L733.4,291.2L737.7,295.1L741.9,297.9L747.7,297.3L753.6,297.7M227.9,390.1L228.4,394.5L228.7,398.5L230.0,403.1L230.7,407.3L230.5,410.7L231.6,415.3L233.2,418.4L233.3,424.2L234.9,426.9L239.2,428.4L242.3,428.2M598.9,551.3L601.6,546.8L601.1,543.5L599.6,540.5L596.5,538.4L593.8,533.8L591.5,529.7L590.7,525.0L587.6,521.9L583.6,520.2L581.8,517.1L578.5,513.7L576.5,510.3L573.6,506.8L573.4,503.7" stroke="#C8841A"/>
</g>
<path d="M327,435h6v6h-6zM327,507h6v6h-6zM333,495h6v6h-6zM339,543h6v6h-6zM345,543h6v6h-6zM357,555h6v6h-6zM375,423h6v6h-6zM381,351h6v6h-6zM381,549h6v6h-6zM387,567h6v6h-6zM393,369h6v6h-6zM393,453h6v6h-6zM399,351h6v6h-6zM399,591h6v6h-6zM405,597h6v6h-6zM411,351h6v6h-6zM411,387h6v6h-6zM417,453h6v6h-6zM423,321h6v6h-6zM435,351h6v6h-6zM435,393h6v6h-6zM435,471h6v6h-6zM441,585h6v6h-6zM447,225h6v6h-6zM447,435h6v6h-6zM447,579h6v6h-6zM459,393h6v6h-6zM459,525h6v6h-6zM465,369h6v6h-6zM465,399h6v6h-6zM471,225h6v6h-6zM477,453h6v6h-6zM483,207h6v6h-6zM483,453h6v6h-6zM483,591h6v6h-6zM489,237h6v6h-6zM489,477h6v6h-6zM495,555h6v6h-6zM501,321h6v6h-6zM501,549h6v6h-6zM507,213h6v6h-6zM507,519h6v6h-6zM507,633h6v6h-6zM513,195h6v6h-6zM513,267h6v6h-6zM519,201h6v6h-6zM519,285h6v6h-6zM519,405h6v6h-6zM519,585h6v6h-6zM525,237h6v6h-6zM525,393h6v6h-6zM531,297h6v6h-6zM537,393h6v6h-6zM537,609h6v6h-6zM537,633h6v6h-6zM549,291h6v6h-6zM555,297h6v6h-6zM555,501h6v6h-6zM555,573h6v6h-6zM555,609h6v6h-6zM561,447h6v6h-6zM567,273h6v6h-6zM573,255h6v6h-6zM573,267h6v6h-6zM573,291h6v6h-6zM573,309h6v6h-6zM573,357h6v6h-6zM573,405h6v6h-6zM579,315h6v6h-6zM579,369h6v6h-6zM585,225h6v6h-6zM585,237h6v6h-6zM591,261h6v6h-6zM597,279h6v6h-6zM597,435h6v6h-6zM597,543h6v6h-6zM597,591h6v6h-6zM603,255h6v6h-6zM603,351h6v6h-6zM609,189h6v6h-6zM615,441h6v6h-6zM621,405h6v6h-6zM621,411h6v6h-6zM627,339h6v6h-6zM633,369h6v6h-6zM633,375h6v6h-6zM633,411h6v6h-6zM633,417h6v6h-6zM639,423h6v6h-6zM645,393h6v6h-6zM645,489h6v6h-6zM645,513h6v6h-6zM651,195h6v6h-6zM651,423h6v6h-6zM657,543h6v6h-6zM663,201h6v6h-6zM663,315h6v6h-6zM663,345h6v6h-6zM669,423h6v6h-6zM669,477h6v6h-6zM669,525h6v6h-6zM675,249h6v6h-6zM675,555h6v6h-6zM681,543h6v6h-6zM687,453h6v6h-6zM693,225h6v6h-6zM693,237h6v6h-6zM693,321h6v6h-6zM693,333h6v6h-6zM693,513h6v6h-6zM693,543h6v6h-6zM705,213h6v6h-6zM711,429h6v6h-6zM717,477h6v6h-6zM723,501h6v6h-6zM729,291h6v6h-6zM729,363h6v6h-6zM729,489h6v6h-6zM735,213h6v6h-6zM735,381h6v6h-6zM741,261h6v6h-6zM753,225h6v6h-6zM759,465h6v6h-6zM777,183h6v6h-6zM777,315h6v6h-6zM783,219h6v6h-6zM789,339h6v6h-6zM795,255h6v6h-6zM795,273h6v6h-6zM795,411h6v6h-6zM801,195h6v6h-6zM801,483h6v6h-6zM813,321h6v6h-6zM813,483h6v6h-6zM819,195h6v6h-6zM819,267h6v6h-6zM825,279h6v6h-6zM825,387h6v6h-6zM825,531h6v6h-6z" fill="#FFFF00"/>
<path d="M357,393h6v6h-6zM357,423h6v6h-6zM357,471h6v6h-6zM357,549h6v6h-6zM363,441h6v6h-6zM363,567h6v6h-6zM369,417h6v6h-6zM381,381h6v6h-6zM387,393h6v6h-6zM393,411h6v6h-6zM399,525h6v6h-6zM405,333h6v6h-6zM429,339h6v6h-6zM435,411h6v6h-6zM435,543h6v6h-6zM441,525h6v6h-6zM447,519h6v6h-6zM459,303h6v6h-6zM459,417h6v6h-6zM465,489h6v6h-6zM477,495h6v6h-6zM483,441h6v6h-6zM513,357h6v6h-6zM513,477h6v6h-6zM531,393h6v6h-6zM537,411h6v6h-6zM537,525h6v6h-6zM543,219h6v6h-6zM543,297h6v6h-6zM549,507h6v6h-6zM549,639h6v6h-6zM555,249h6v6h-6zM567,585h6v6h-6zM573,579h6v6h-6zM585,555h6v6h-6zM585,573h6v6h-6zM591,513h6v6h-6zM591,579h6v6h-6zM603,489h6v6h-6zM603,501h6v6h-6zM621,339h6v6h-6zM621,363h6v6h-6zM621,549h6v6h-6zM627,531h6v6h-6zM639,375h6v6h-6zM651,333h6v6h-6zM657,303h6v6h-6zM657,345h6v6h-6zM657,501h6v6h-6zM657,567h6v6h-6zM663,333h6v6h-6zM663,399h6v6h-6zM663,483h6v6h-6zM669,387h6v6h-6zM669,441h6v6h-6zM675,315h6v6h-6zM681,321h6v6h-6zM693,387h6v6h-6zM699,201h6v6h-6zM699,219h6v6h-6zM699,339h6v6h-6zM705,309h6v6h-6zM711,381h6v6h-6zM717,519h6v6h-6zM723,345h6v6h-6zM723,531h6v6h-6zM729,447h6v6h-6zM729,555h6v6h-6zM735,429h6v6h-6zM735,441h6v6h-6zM741,219h6v6h-6zM747,249h6v6h-6zM747,483h6v6h-6zM753,525h6v6h-6zM759,255h6v6h-6zM765,453h6v6h-6zM777,495h6v6h-6zM777,501h6v6h-6zM795,381h6v6h-6zM795,531h6v6h-6zM801,417h6v6h-6zM807,429h6v6h-6zM813,357h6v6h-6zM819,423h6v6h-6z" fill="#FFFFFF"/>
<path d="M260.101,368.374 L246.228,382.246 L236.199,410.329 L226.8,420.772 L226.8,433.795 L236.303,451.744 L244.896,462.792 L261.044,457.025 L282.454,449.889 L293.065,442.461 L299.486,436.039 L314.366,434.179 L333.558,432.159 L346.173,429.005 L357.482,422.837 L374.541,414.307 L379.943,400.261 L388.745,381.68 L399.072,368.254 L402.162,342.505 L404.916,328.735 L416.748,318.876 L423.006,300.101 L426.828,290.546 L431.365,284.195 L444.054,273.621 L446.321,250.946 L432.154,234.599 L417.353,224.353 L403.831,230.268 L397.703,235.315 L396.253,244.018 L385.777,244.891 L371.8,253.718 L371.8,258.694 L365.276,260.868 L361.086,268.05 L361.081,268.058 L361.075,268.066 L361.069,268.073 L361.062,268.079 L361.054,268.084 L361.046,268.089 L361.037,268.093 L361.028,268.096 L361.019,268.098 L361.009,268.1 L347.461,269.39 L336.881,278.459 L335.973,294.8 L329.2,294.8 L329.2,279.276 L317.809,276.8 L311.162,276.8 L292.079,287.534 L296.459,299.8 L293.829,299.8 L285.745,295.309 L271.546,284.659 L269.566,286.922 L269.361,287.168 L260.664,302.389 L266.74,340.869 L260.101,368.374 Z" fill="#FFFF00"/>
<clipPath id="lc2"><path d="M264,303 L272,289 L284,298 L293,303 L301,303 L296,289 L312,280 L326,280 L326,298 L339,298 L340,280 L354,268 L375,261 L375,249 L399,247 L401,235 L417,228 L430,237 L443,252 L441,272 L429,282 L424,289 L420,299 L414,317 L402,327 L399,342 L396,367 L386,380 L377,399 L372,412 L356,420 L345,426 L333,429 L314,431 L298,433 L291,440 L281,447 L272,450 L260,454 L246,459 L239,450 L230,433 L230,422 L239,412 L244,398 L249,384 L256,377 L263,370 L270,341 L267,322 Z"/></clipPath><g clip-path="url(#lc2)" fill="none" stroke-width="0.9">
<path d="M238.5,362.2L235.4,360.1L231.3,356.6L228.2,356.4L223.8,357.5L219.2,356.0L216.3,353.1L213.5,347.9L213.3,344.5L212.4,340.9M380.1,264.4L376.7,260.0L375.7,254.4L375.3,249.4L375.6,245.9L374.4,240.6L372.7,237.2L369.3,232.9L366.9,230.9L363.6,227.1L361.9,222.5L359.1,220.6M379.4,411.8L383.5,410.7L387.1,411.4L392.5,413.9L398.1,412.9L401.0,410.9L406.2,410.7L411.5,409.4M374.8,393.6L370.4,392.9L367.2,391.6L363.4,390.3L359.8,388.4L354.8,385.1L349.2,385.5L345.6,387.3L343.5,390.9L340.8,395.4L339.3,398.7L335.5,401.7M398.5,294.0L402.6,290.0L405.1,286.5L406.6,283.3L406.8,277.7L405.5,273.5L403.4,268.6L398.3,265.4L395.0,263.2L391.2,261.8L387.9,261.1M274.0,300.3L276.8,302.3L280.7,306.7L284.4,308.4L286.5,311.5L291.6,314.0L294.0,318.0L294.3,322.5L294.4,326.6L295.5,330.5L295.1,334.4M413.5,436.9L410.8,431.7L409.8,428.3L410.3,422.6L411.4,416.9L413.5,412.6L418.2,409.1L422.8,408.2L426.5,408.5L429.7,407.4L434.2,404.6L439.4,403.0L442.6,400.8M250.9,455.1L254.5,458.7L258.6,459.8L261.6,458.8L264.5,455.3L268.0,451.2L271.0,449.2L274.4,449.3L278.5,446.9L283.0,444.7L286.7,442.6L290.8,442.9L294.3,443.5L299.0,442.8L301.3,440.3L304.7,438.0M323.9,440.2L328.4,437.7L333.2,436.7L337.5,434.9L341.4,432.6L342.9,429.5L345.4,427.8L349.2,423.7L355.0,422.2L360.3,421.1M274.3,385.1L271.0,385.8L265.9,384.3L262.0,380.9L258.8,380.5L254.3,378.6L250.9,374.5L247.4,371.1M360.2,322.1L364.7,318.4L367.9,315.8L372.8,312.6L377.1,312.1L382.6,314.1L386.6,314.6M316.8,245.2L316.8,249.8L319.1,253.5L320.1,256.6L320.9,260.2L322.5,265.0L326.1,267.3L330.9,270.9L335.2,274.5L337.2,279.7L338.3,283.0L340.2,285.6M290.7,414.8L287.0,413.4L283.2,412.5L278.1,412.9L274.2,412.4L268.7,412.0L265.0,411.8L261.7,410.3L258.4,407.9L253.2,407.4L250.1,405.8L245.7,404.8L241.0,404.5M437.6,233.1L433.0,234.9L429.4,237.8L428.3,242.9L426.9,247.0L427.3,250.3L428.6,254.3L430.5,257.5L432.6,260.8L434.0,264.7L436.9,266.6L441.0,266.1L444.9,265.4L450.1,264.9M277.7,233.6L275.8,229.9L271.1,226.9L267.8,226.7L264.5,224.2L261.5,223.3L258.0,218.4M276.4,393.6L272.0,392.4L266.4,392.0L263.3,393.2L257.6,391.7L254.1,391.7L250.5,392.2L245.6,393.1L241.1,394.4L236.5,396.7L233.3,398.8L229.9,401.7L224.5,404.5L220.9,407.4M364.0,340.8L367.8,340.8L371.9,340.2L375.1,342.1L376.4,345.7L379.4,350.2L384.0,351.9L388.1,356.2L393.2,356.9L397.8,360.7L400.0,364.2L402.9,366.2L407.1,367.7L409.9,369.3L413.8,373.6M272.9,247.2L278.0,249.1L283.3,251.6L286.1,253.2L290.0,257.1L293.1,258.8L296.5,260.3L299.3,264.4L302.6,267.6M430.6,316.8L429.4,320.3L427.7,323.5L425.2,328.1L424.7,331.1L424.5,334.4L423.5,337.4L424.8,342.4L423.0,347.0L424.0,350.9L426.4,355.3L430.1,359.5L431.9,362.1M420.0,299.2L425.2,299.5L427.7,301.4L431.2,302.4L434.7,303.8L438.5,305.1L441.1,306.7L445.4,310.0L448.7,314.9M418.4,440.6L415.4,443.4L413.7,447.8L410.0,451.1L409.0,453.9L404.9,456.9L402.7,461.8L400.6,464.0L399.0,469.6L396.3,474.6L395.7,478.0L393.3,482.6L392.1,486.6L391.4,491.6M238.4,371.9L241.2,369.7L246.4,368.2L248.4,365.1L251.3,362.6L256.0,360.0L259.5,360.7L262.4,363.0L265.1,365.6M336.7,308.2L339.0,306.1L343.6,303.8L347.9,299.7L348.8,296.8L350.9,291.8M412.3,445.5L410.0,440.3L410.0,434.5L410.8,429.5L411.9,425.0L415.5,421.4L420.8,419.7L424.1,416.1L425.4,410.5M381.4,249.5L379.1,253.8L375.0,255.7L371.0,258.4L365.7,258.4L362.1,258.3M428.0,333.2L432.3,329.1L437.4,326.9L439.9,323.4L443.6,322.1L445.9,319.7L449.5,317.9L454.5,317.7M402.9,449.6L401.0,453.8L400.0,456.7L400.2,459.7L400.4,465.7L402.4,468.7L406.6,470.9M418.9,341.5L423.8,342.8L428.8,342.6L434.2,344.2L438.4,348.4M429.6,391.7L424.4,389.5L421.2,387.1L419.3,384.3L415.0,382.7L412.2,379.1L412.2,375.6L410.6,372.2M332.0,280.5L329.6,282.6L325.6,286.3L322.9,289.3L320.3,293.4L320.7,298.3L322.5,301.4L325.8,303.9M298.1,264.8L299.5,268.7L302.1,271.5L303.7,275.3L303.5,279.1L304.8,281.8L304.8,285.0L306.5,288.4L307.9,291.2L310.9,293.6L316.3,295.0L320.8,294.1L325.2,291.6L328.7,288.2L330.2,283.0M330.4,446.1L333.4,450.8L334.0,454.5L335.8,457.1L339.1,458.2L343.0,461.1L348.3,463.0L351.8,464.6L354.7,469.4L355.4,473.0M248.0,433.5L251.0,430.8L255.3,430.6L258.5,428.4L259.8,425.1L262.8,423.0L267.2,420.1L269.7,417.2L273.2,414.2M369.5,278.5L366.5,276.4L364.2,271.8L362.1,266.2L360.7,261.7L360.8,256.1L362.4,252.5L365.5,248.4L368.3,245.9L371.3,242.9L374.7,242.0L378.8,237.8M395.8,444.1L398.9,445.9L404.7,446.6L410.1,449.1L413.1,448.8L419.0,448.1L421.7,445.7L424.9,444.1L427.8,441.7L428.6,437.5L429.4,433.8L430.5,429.5M315.4,274.2L319.1,272.7L323.5,271.7L326.7,267.9L329.7,266.8L331.6,264.0L333.6,261.3L336.4,258.6L340.3,256.9L344.1,257.7M360.5,301.8L363.3,300.4L366.6,300.0L369.3,298.1L373.7,297.4L378.2,296.8L382.0,297.7M339.4,250.8L341.9,248.6L346.3,246.6L349.7,246.6L355.7,245.8L358.9,244.5L363.7,244.1L367.9,247.1L370.2,250.6M361.5,267.2L358.4,270.6L354.5,274.2L353.5,278.3L353.4,283.8L355.4,288.1L354.5,291.5M413.6,434.2L410.4,433.0L407.3,433.0L403.4,435.7L398.4,435.5L394.3,435.4L391.5,433.7L387.1,430.7M387.5,364.3L390.4,367.0L394.8,368.2L398.4,369.0L403.9,369.0L407.7,370.2L411.7,369.7L415.1,367.4L418.1,366.7L422.9,368.2L427.8,371.0M325.4,292.5L329.6,289.9L332.8,285.7L335.6,282.7L338.2,277.7L337.9,274.4L336.7,268.7L333.2,265.7M351.1,422.1L347.0,423.7L342.5,425.2L337.0,426.2L333.9,428.7L332.1,434.0L333.5,438.8L333.9,443.2M379.0,389.9L378.4,392.9L376.6,397.9L374.7,400.8L370.5,402.1L367.3,401.3L363.6,400.6L359.9,401.5L357.3,403.0L352.6,405.8M365.2,269.0L362.3,272.2L361.0,275.3L359.1,278.4L359.4,284.1L361.9,288.8L365.2,293.0L366.2,297.6L364.5,301.3L361.5,304.0L359.9,307.0L357.3,308.9L352.9,311.7L349.0,312.6L346.6,315.9M285.5,238.8L288.4,244.0L291.3,246.3L294.2,247.9L297.0,249.4L302.6,248.7L307.4,247.0L311.8,246.9L316.8,246.1L320.0,244.3L325.3,242.4L328.1,240.3L331.0,236.5L334.6,234.2M305.1,388.1L307.6,390.4L313.1,391.6L317.9,392.5L320.3,394.9L324.1,399.1L325.3,402.1L326.1,406.4L324.7,411.1L320.6,414.3L319.7,417.2L317.1,422.2M296.5,385.5L301.7,388.3L305.8,388.8L310.0,386.7L314.9,384.0L318.5,379.4L320.1,375.9L319.5,372.9L316.1,370.0L313.7,364.8L314.9,360.1L314.6,354.7L313.5,349.8M391.0,289.5L394.8,284.9L395.5,281.5L398.5,277.8L403.0,275.0L407.1,275.1L411.6,276.1M265.2,254.2L264.6,250.7L263.6,247.5L263.8,242.1L263.1,238.7L262.2,233.5L262.2,229.9L264.2,224.4L267.2,222.4L269.4,217.9M241.3,290.7L237.2,288.1L235.1,283.0L232.4,277.7L230.0,272.4L228.7,267.8L227.6,262.2L226.6,257.3L225.6,253.5L223.1,248.1M427.7,425.3L425.1,421.0L421.7,417.7L419.1,416.0L417.1,413.1L412.5,410.1L410.7,407.1L409.3,403.2L409.7,398.9M252.7,372.0L256.0,372.5L259.3,373.3L264.7,373.2L268.6,371.1L270.8,366.1L274.6,363.6L276.6,360.2L278.5,355.7M237.8,410.9L235.0,406.0L235.8,401.3L238.5,396.0L241.2,391.2L244.3,389.6L248.0,389.7L251.5,391.7L255.5,394.7L260.2,394.6L265.2,395.5L270.1,395.8L274.2,393.3M251.4,372.6L248.3,367.9L246.4,363.9L246.9,358.0L248.1,353.2L251.0,348.3L254.7,345.4L258.3,342.2L261.2,339.0L263.8,334.2M383.7,237.2L382.4,231.8L383.6,226.3L385.0,221.7L383.9,218.7L382.9,214.5L382.7,211.1L381.5,206.5L382.6,201.3L385.6,198.4L388.7,196.2L391.3,193.4L395.8,192.2M332.5,322.9L333.8,327.5L333.0,331.0L331.0,334.0L329.5,339.1L329.7,343.3L328.5,346.7L327.5,350.0L325.9,353.2L323.9,358.0L323.0,361.6L322.8,365.9L323.2,369.8L324.6,372.8L326.0,377.5M271.6,331.3L276.7,330.2L280.2,331.6L283.5,332.3L288.0,334.7L292.6,337.6L297.8,340.6L300.2,342.7L303.0,344.4M314.3,309.9L311.1,305.3L307.7,301.6L305.1,298.3L300.3,295.5L297.4,294.2L292.7,291.2L289.4,291.2L286.1,291.8L280.6,293.3M373.8,343.7L377.1,343.4L380.1,342.4L382.9,339.0L388.5,337.4L391.5,338.4L395.2,343.1L398.9,345.4L402.1,347.2L405.6,347.6L409.5,349.7L413.0,354.4L415.1,358.5M272.3,262.6L274.2,266.1L277.6,271.1L279.1,275.0L280.1,279.4L280.5,282.5L281.1,285.5L282.4,291.1L285.6,293.9L288.2,296.9L290.7,302.1M338.8,386.4L338.9,392.0L337.6,395.6L338.9,399.4L342.2,401.7L346.3,402.4L351.0,402.5L354.0,401.1L356.2,396.8L360.2,394.7L365.4,394.0L370.8,392.2L375.9,391.7L379.2,391.4M273.5,378.0L276.6,374.4L279.6,373.7L282.3,370.8L284.3,366.6L287.8,362.0L288.0,357.7L290.4,353.9L290.5,349.6L289.2,346.9L286.8,344.5L282.3,341.1L279.0,337.5L278.8,332.8M278.0,385.5L283.0,383.9L286.6,383.3L291.9,384.5L295.9,386.1L300.4,389.7L302.4,392.0L306.6,394.5L308.2,398.3L306.6,403.4M441.6,415.2L446.9,417.5L449.2,422.1L450.1,425.2L452.6,428.0L455.6,431.4L455.9,436.1L454.2,438.6L453.3,441.6L449.6,445.1L447.7,450.2L443.8,453.9M264.2,435.5L267.3,438.0L268.6,441.7L269.7,447.4L272.2,449.8L274.9,454.9M255.6,426.9L255.9,430.6L255.6,434.1L254.5,436.9L253.0,441.8L254.3,447.2L258.1,450.9L260.0,455.6L260.1,459.5L261.0,462.8L262.7,466.7L263.7,471.8L263.5,476.8L264.4,480.5M329.2,424.2L326.3,422.4L322.7,419.6L320.6,416.6L318.4,413.9L316.3,409.3L314.0,406.7L311.1,406.0L307.7,402.1L303.9,398.2L298.2,396.6M411.7,403.5L407.0,401.9L403.8,398.8L398.4,396.8L395.1,395.2L391.9,391.5L390.0,387.8M324.5,312.9L323.7,315.8L323.8,320.5L320.4,325.0L318.1,330.1L316.7,334.5L317.6,338.6L318.8,341.6M356.4,319.2L355.2,322.3L351.0,325.3L346.5,325.8L341.5,328.4L337.9,329.0L334.7,330.6L329.9,334.1L326.4,337.0L322.3,337.9L318.4,340.1L315.6,342.7L313.0,344.3L311.3,347.0M386.5,286.6L382.1,288.1L377.7,286.8L372.5,288.9L366.8,290.1L362.5,289.3L359.1,288.8L353.6,288.3L349.4,288.4L346.5,286.4M333.4,277.5L338.8,276.3L342.6,277.7L344.6,281.0L346.7,283.5L349.7,284.1L353.3,283.3L357.3,283.7M438.2,415.4L440.0,411.2L444.2,407.0L445.1,402.2L445.9,397.3L446.0,394.0M421.0,399.5L419.4,393.7L418.8,389.7L420.6,385.9L424.5,383.4L427.6,381.8L431.0,382.0M396.0,282.6L397.6,279.7L399.2,274.1L401.7,269.9L404.0,264.6L405.7,259.2L404.8,254.5M240.7,335.4L243.8,333.0L248.0,329.7L253.8,329.9L259.2,329.5L263.7,331.2M279.5,230.8L283.9,230.2L287.5,227.8L289.6,225.1L292.8,220.9L294.0,217.1L294.2,212.8L292.8,209.5L290.6,206.1M313.7,418.0L315.3,421.0L316.8,424.6L319.0,429.3L322.1,433.0L322.8,438.6L326.2,442.3L329.0,447.1L329.4,450.2L327.3,454.4L322.4,457.4M315.0,267.5L312.1,272.7L311.7,276.5L310.5,280.9L308.3,285.7L308.4,289.2M326.1,358.5L322.0,357.0L317.8,355.7L312.8,357.2L307.8,360.3L304.7,361.9L299.0,360.5L296.2,359.5L293.4,354.6L290.8,350.8L290.6,347.8L288.8,345.1M270.5,444.7L267.0,447.3L264.6,451.7L262.4,456.2L262.4,460.6L263.9,463.8L268.2,467.2L271.3,468.3M442.3,426.3L445.8,423.8L450.5,421.7L453.9,418.5L454.7,415.2L455.0,412.0L452.7,406.6L449.5,404.7M428.9,351.0L425.6,351.2L423.0,349.3L417.5,348.2L412.1,345.7L408.0,342.1L403.4,339.4L400.7,338.0L396.5,337.0L392.3,333.1M333.4,366.2L333.5,362.1L334.2,358.2L332.6,354.0L330.9,348.5L332.7,342.9L331.7,339.8L330.4,336.9M356.7,247.2L357.0,252.6L355.6,257.1L354.3,261.8L353.5,267.5L352.1,271.1L353.1,275.6L354.5,279.6L353.5,285.3L350.8,288.0M299.4,400.5L304.0,402.7L307.0,406.9L307.8,412.4L309.8,416.5L309.0,421.2L306.0,425.1L302.7,428.8L299.2,431.6L297.2,436.4M426.7,369.5L432.1,371.1L435.6,371.8L438.6,373.5L443.1,373.3L447.9,375.8L451.1,380.5L451.4,383.9L452.2,387.6L452.7,391.9L454.2,396.5L458.0,399.0M256.7,251.9L254.3,246.7L254.3,243.2L255.0,239.0L256.5,235.8L259.8,231.0L262.6,229.2L264.6,226.8L269.3,223.8L272.1,222.4L275.2,217.9L278.0,214.6M241.2,366.1L237.9,364.1L234.2,361.0L229.8,357.8L228.2,352.8L224.6,350.4L222.6,347.6L218.5,345.6L215.9,342.8L212.1,342.3L208.0,342.2L202.4,342.5L197.2,344.8M332.0,290.2L328.7,294.4L326.1,298.2L325.0,302.1L322.0,306.8L322.0,312.8M392.0,264.9L390.5,261.0L388.6,258.1L386.4,255.8L381.3,255.1L375.8,256.4L372.3,254.7L366.4,254.8M284.8,455.5L283.7,449.7L280.6,445.0L278.4,440.3L274.6,437.1L271.3,433.1L268.3,431.9L262.8,429.9L256.9,429.5L252.4,431.0L248.6,431.2M293.9,450.6L292.8,456.1L291.1,458.6L291.0,464.1L290.9,468.5L291.0,474.3L292.6,478.7L291.5,483.6M258.9,274.6L262.7,275.0L266.0,278.2L267.4,283.2L270.4,286.9L270.4,292.2L271.8,298.0L270.0,303.1M373.5,354.0L372.6,358.5L370.6,361.1L369.1,364.0L365.0,367.5L364.0,372.2L364.8,375.5L368.6,378.4L372.3,378.5L376.5,377.6L381.4,376.8L384.3,377.6M290.6,414.7L293.5,418.7L297.1,422.3L297.7,426.7L297.1,430.8L296.4,434.2L295.2,438.1L296.1,441.9L294.1,445.9L289.9,448.8M234.8,247.1L231.7,244.3L228.4,242.5L222.9,243.3L219.8,241.6L216.6,238.4L211.3,235.7L205.5,234.2M268.9,362.8L265.0,365.3L263.5,368.1L261.2,373.3L259.4,378.6L256.4,383.4L252.1,387.5L248.2,390.3L242.8,391.1L239.2,394.6L236.1,399.0L233.4,400.6M428.2,354.7L422.8,356.7L419.5,358.5L414.6,357.9L411.6,357.4L408.8,356.2L404.7,357.1L399.2,355.5L395.9,351.9L393.1,349.0L388.7,347.4M292.3,284.7L296.8,286.6L298.7,289.9L298.8,294.8L300.1,299.1L302.0,302.7L306.9,304.7L309.4,308.3L309.5,313.7L310.6,317.2L313.2,320.9L314.6,325.6L318.3,329.2M427.3,310.9L428.5,307.0L426.9,302.3L427.8,298.5L428.2,293.1L426.0,290.0L423.4,286.5L421.7,282.3L421.8,277.7L421.8,272.6L420.2,268.4L419.8,265.2L421.1,261.4L423.3,258.2L424.2,255.2M415.5,401.2L415.3,395.9L414.0,392.4L412.3,386.8L412.9,381.1L412.7,377.3L412.5,373.0M407.7,296.6L411.5,294.4L417.4,295.3L420.9,294.9L423.9,292.4L426.1,288.0L425.6,282.8L425.2,277.0L425.5,272.9L424.2,267.3L425.2,262.8L424.3,258.8M262.7,415.6L264.1,420.4L264.0,425.0L267.1,429.7L268.5,433.4L267.8,439.0L268.2,443.8" stroke="#FFA000"/>
<path d="M252.5,259.2L248.2,261.8L246.0,264.8L243.8,269.3L242.8,272.6L239.0,275.3L236.2,278.3L235.9,283.0L238.8,287.6L240.1,291.3M279.4,282.9L282.2,285.3L284.0,289.3L285.7,294.0L285.3,297.3L283.4,301.0L284.1,305.2L283.5,309.2L282.2,312.2L278.9,315.9L278.7,319.4L281.5,324.3L283.5,328.9L286.4,330.9L287.6,333.7L291.3,336.8M422.9,369.7L428.3,370.2L433.2,366.9L438.7,365.0L441.3,362.7L444.4,361.2M437.5,352.5L434.4,351.3L431.2,350.6L427.8,348.4L425.1,343.3L425.2,340.3L426.1,336.3L426.7,331.1L426.7,326.5L428.2,323.4L428.1,319.7L428.3,313.9L431.0,310.8L434.1,308.1M300.1,426.5L304.6,428.6L307.4,431.7L308.8,437.4L308.1,440.7L305.6,443.6L305.0,448.9L302.8,451.6L302.8,456.7L302.9,461.4L305.3,463.9L309.8,464.6L312.2,466.8L315.3,470.1L319.1,471.1M314.9,450.0L313.3,454.9L311.0,459.5L310.2,465.2L308.4,470.5M433.0,355.4L436.0,354.6L438.4,351.8L441.2,350.1L443.9,345.4L445.8,341.8L449.4,340.1L453.3,336.3M338.2,381.6L337.5,387.2L339.6,391.4L340.4,397.4L343.1,401.7L348.7,403.7L353.0,407.4L358.3,408.9M247.7,275.9L252.1,276.6L256.8,274.5L259.9,272.5L263.9,271.2L268.6,270.0L272.1,266.5M418.7,234.3L422.4,234.4L425.6,234.6L429.1,236.7L433.5,238.8L437.4,243.2L439.2,248.7L439.0,254.0L438.9,257.5L436.6,262.3L437.5,267.2L436.1,272.8M316.6,247.2L314.7,250.8L310.1,253.6L305.5,254.3L301.5,256.5L298.7,258.9L296.6,261.9M277.2,273.8L276.3,268.6L275.4,262.8L276.7,257.8L277.6,254.3L280.3,251.4M249.9,451.2L254.0,454.1L258.6,455.8L263.3,455.3L268.4,454.3L271.5,455.5L274.9,456.2L277.9,458.0L281.0,457.7M355.1,427.9L357.3,430.5L360.8,431.1L365.4,432.5L368.6,435.5L369.3,439.2L373.0,443.6L375.9,445.7L379.2,448.6M339.2,238.5L342.4,243.2L345.6,245.7L349.5,246.7L355.1,247.1L358.0,245.5L361.9,241.0L365.4,238.4L370.6,238.7L374.1,240.5L377.7,241.4L383.0,244.0M425.0,274.2L426.6,277.3L428.5,281.7L432.8,285.6L436.0,286.2L438.9,287.6L442.3,289.1L445.1,291.0L450.7,292.3L454.7,294.7L457.1,297.3L460.7,300.8L465.2,301.8L468.9,300.7M408.7,400.2L408.1,396.8L409.9,392.0L411.3,386.2L411.8,380.4L409.9,377.5L406.0,375.3L401.5,374.6L398.0,373.8L393.9,375.8L388.8,378.9L384.2,380.7L380.6,381.9M317.5,422.2L312.0,421.5L309.0,421.2L305.2,420.3L302.5,418.9L299.4,418.0L295.1,419.4L293.1,421.8L290.9,425.7L288.1,429.7M429.2,336.3L432.8,337.1L435.8,341.0L438.9,343.9L441.5,345.6L444.4,348.3L447.7,349.4L451.2,352.1M440.6,377.3L440.5,373.6L438.5,370.6L433.5,367.4L431.6,364.5L429.0,360.1L429.1,355.8L426.3,351.5L425.0,345.7M388.2,283.5L384.6,287.9L380.8,289.3L376.8,292.6L374.0,295.8L368.5,297.0L364.4,295.0L360.3,294.3L355.7,294.3L350.5,294.3M422.5,386.4L417.7,384.7L413.1,384.2L407.7,385.7L405.7,388.4L404.3,391.2L404.0,395.3M326.9,297.5L328.3,294.0L330.2,289.5L331.9,284.3L334.2,281.3L335.7,275.8L339.2,272.7L342.5,271.4L345.9,269.5M415.0,246.9L418.0,242.9L420.2,237.7L424.5,234.2L426.5,230.2L425.8,226.4L426.2,221.4L426.9,217.1M423.0,292.7L426.7,296.3L431.2,297.7L434.2,299.5L439.6,301.0L441.5,303.6L441.8,307.4L441.2,312.7L438.9,317.6L435.2,321.7M388.3,260.4L392.0,261.6L397.1,260.8L403.0,259.9L406.2,257.9L407.7,253.5L406.4,248.3L407.8,245.3L408.8,242.0M254.1,275.4L249.7,274.6L246.7,275.9L242.7,277.0L236.8,277.9L233.6,276.0L230.6,273.1L227.5,268.7L224.5,265.9L221.6,260.9L218.3,256.6L215.8,254.1M304.8,256.5L310.0,258.9L314.2,258.4L318.8,256.8L324.4,255.1L330.2,254.7L334.4,252.7L336.1,249.1L339.9,245.1L342.1,241.4M239.7,285.4L236.7,288.4L235.0,291.0L235.1,296.4L234.6,300.3L233.3,305.1M239.5,366.6L236.6,363.8L234.8,358.6L235.2,354.6L238.8,350.4L242.6,346.6L246.8,345.7L251.3,343.8L254.0,340.8L257.0,338.0L258.6,334.4L262.0,331.3L266.2,329.8M369.2,244.7L368.3,250.2L368.2,254.4L371.0,259.3L370.8,262.5L367.8,266.0L365.7,269.6L365.6,274.3L365.3,279.4L365.6,282.6L364.4,286.9M231.8,315.5L231.0,321.4L226.8,325.7L221.6,328.3L219.8,332.5L215.3,336.2L212.0,336.3L207.0,338.7L203.6,339.7L199.6,341.8L195.9,341.9L192.8,344.1L189.2,346.1M338.1,245.9L339.9,249.1L343.6,252.0L347.8,255.3L353.6,256.8L357.3,259.3L360.6,261.7L364.6,264.5M260.7,454.2L255.3,455.3L250.4,457.8L247.4,462.3L245.2,464.7L240.4,467.8L237.0,472.3L236.0,476.9L233.8,480.7M319.1,303.8L314.9,305.4L312.0,309.8L311.7,315.2L313.5,320.0L314.0,324.7L315.8,327.5M263.3,255.8L259.8,255.4L256.9,253.1L251.0,253.0L246.1,253.3L240.6,251.2L238.0,247.8L236.7,244.8" stroke="#B8F000"/>
</g>
<path d="M279,279h6v6h-6zM279,285h6v6h-6zM285,273h6v6h-6zM285,279h6v6h-6zM291,267h6v6h-6zM291,273h6v6h-6zM297,267h6v6h-6zM297,273h6v6h-6zM303,267h6v6h-6zM303,273h6v6h-6zM309,249h6v6h-6zM309,255h6v6h-6zM309,261h6v6h-6zM309,267h6v6h-6zM315,249h6v6h-6zM315,255h6v6h-6zM315,261h6v6h-6zM315,267h6v6h-6zM315,273h6v6h-6zM321,249h6v6h-6zM321,255h6v6h-6zM321,261h6v6h-6zM321,267h6v6h-6zM321,273h6v6h-6zM327,243h6v6h-6zM327,249h6v6h-6zM327,255h6v6h-6zM327,261h6v6h-6zM327,267h6v6h-6zM327,273h6v6h-6zM333,237h6v6h-6zM333,243h6v6h-6zM333,249h6v6h-6zM333,255h6v6h-6zM333,261h6v6h-6zM333,267h6v6h-6zM339,231h6v6h-6zM339,237h6v6h-6zM339,243h6v6h-6zM339,249h6v6h-6zM339,255h6v6h-6zM339,261h6v6h-6zM345,231h6v6h-6zM345,237h6v6h-6zM345,243h6v6h-6zM345,249h6v6h-6zM345,255h6v6h-6zM345,261h6v6h-6zM351,225h6v6h-6zM351,231h6v6h-6zM351,237h6v6h-6zM351,243h6v6h-6zM351,249h6v6h-6zM351,255h6v6h-6zM351,261h6v6h-6zM357,219h6v6h-6zM357,225h6v6h-6zM357,231h6v6h-6zM357,237h6v6h-6zM357,243h6v6h-6zM357,249h6v6h-6zM357,255h6v6h-6zM357,261h6v6h-6zM363,213h6v6h-6zM363,219h6v6h-6zM363,225h6v6h-6zM363,231h6v6h-6zM363,237h6v6h-6zM363,243h6v6h-6zM363,249h6v6h-6zM363,255h6v6h-6zM369,213h6v6h-6zM369,219h6v6h-6zM369,225h6v6h-6zM369,231h6v6h-6zM369,237h6v6h-6zM369,243h6v6h-6zM369,249h6v6h-6zM375,213h6v6h-6zM375,219h6v6h-6zM375,225h6v6h-6zM375,231h6v6h-6zM375,237h6v6h-6zM375,243h6v6h-6zM381,213h6v6h-6zM381,219h6v6h-6zM381,225h6v6h-6zM381,231h6v6h-6zM381,237h6v6h-6zM387,213h6v6h-6zM387,219h6v6h-6zM387,225h6v6h-6zM387,231h6v6h-6zM387,237h6v6h-6zM393,213h6v6h-6zM393,219h6v6h-6zM393,225h6v6h-6zM393,231h6v6h-6zM399,213h6v6h-6zM399,219h6v6h-6zM399,225h6v6h-6z" fill="#FF0000"/>
<path d="M333,237h6v6h-6zM333,243h6v6h-6zM333,249h6v6h-6zM333,255h6v6h-6zM339,237h6v6h-6zM339,243h6v6h-6zM339,249h6v6h-6zM339,255h6v6h-6zM339,261h6v6h-6zM345,237h6v6h-6zM345,243h6v6h-6zM345,249h6v6h-6zM345,255h6v6h-6zM345,261h6v6h-6zM351,243h6v6h-6zM351,249h6v6h-6zM351,255h6v6h-6zM351,261h6v6h-6zM357,243h6v6h-6zM357,249h6v6h-6zM357,255h6v6h-6zM363,243h6v6h-6zM363,249h6v6h-6z" fill="#800000"/>
<path d="M375,219h6v6h-6zM375,225h6v6h-6zM381,219h6v6h-6zM381,225h6v6h-6zM381,231h6v6h-6zM387,213h6v6h-6zM387,219h6v6h-6zM387,225h6v6h-6zM387,231h6v6h-6zM393,213h6v6h-6zM393,219h6v6h-6zM393,225h6v6h-6zM393,231h6v6h-6z" fill="#800000"/>
<path d="M279,279h6v6h-6zM285,273h6v6h-6zM285,279h6v6h-6zM291,267h6v6h-6zM291,273h6v6h-6zM297,267h6v6h-6zM297,273h6v6h-6z" fill="#800000"/>
<path d="M279,279h6v6h-6zM285,279h6v6h-6zM291,267h6v6h-6zM297,267h6v6h-6zM303,267h6v6h-6zM315,249h6v6h-6zM327,249h6v6h-6zM333,249h6v6h-6zM339,249h6v6h-6zM339,255h6v6h-6zM345,261h6v6h-6zM363,225h6v6h-6zM369,219h6v6h-6zM369,237h6v6h-6zM375,213h6v6h-6zM381,219h6v6h-6zM381,231h6v6h-6zM387,225h6v6h-6zM399,225h6v6h-6z" fill="#FF8000"/>
<path d="M279,285h6v6h-6zM279,297h6v6h-6zM285,285h6v6h-6zM285,291h6v6h-6zM285,297h6v6h-6zM291,285h6v6h-6zM297,285h6v6h-6zM297,291h6v6h-6zM297,297h6v6h-6zM303,279h6v6h-6zM303,285h6v6h-6zM303,297h6v6h-6zM309,279h6v6h-6zM309,285h6v6h-6zM315,279h6v6h-6zM315,285h6v6h-6zM321,279h6v6h-6zM321,291h6v6h-6zM321,297h6v6h-6zM327,291h6v6h-6zM333,291h6v6h-6z" fill="#FF8000"/>
<path d="M417,309h6v6h-6zM423,261h6v6h-6zM423,273h6v6h-6zM423,285h6v6h-6zM429,261h6v6h-6zM429,267h6v6h-6zM429,273h6v6h-6zM429,279h6v6h-6zM429,297h6v6h-6zM435,279h6v6h-6zM435,285h6v6h-6zM435,303h6v6h-6zM435,315h6v6h-6zM441,267h6v6h-6zM441,273h6v6h-6zM441,279h6v6h-6zM441,297h6v6h-6zM441,303h6v6h-6zM447,261h6v6h-6zM447,267h6v6h-6zM447,273h6v6h-6zM447,279h6v6h-6zM447,285h6v6h-6zM447,297h6v6h-6zM453,261h6v6h-6zM453,273h6v6h-6zM453,279h6v6h-6zM459,261h6v6h-6zM459,279h6v6h-6z" fill="#FF0000"/>
<path d="M333,429h6v6h-6zM339,429h6v6h-6zM375,405h6v6h-6zM375,411h6v6h-6zM381,387h6v6h-6zM381,411h6v6h-6zM387,381h6v6h-6zM387,393h6v6h-6zM393,375h6v6h-6zM399,345h6v6h-6zM405,351h6v6h-6zM405,375h6v6h-6zM411,357h6v6h-6zM411,375h6v6h-6z" fill="#FFFF00"/>
<path d="M345,423h6v6h-6zM345,429h6v6h-6zM351,429h6v6h-6zM357,423h6v6h-6zM375,399h6v6h-6zM381,399h6v6h-6zM381,405h6v6h-6zM387,375h6v6h-6zM387,399h6v6h-6zM393,381h6v6h-6zM393,387h6v6h-6zM399,357h6v6h-6zM399,363h6v6h-6zM399,369h6v6h-6zM399,375h6v6h-6zM405,357h6v6h-6zM411,363h6v6h-6zM411,369h6v6h-6z" fill="#FFFFFF"/>
<path d="M357,387h6v6h-6zM357,399h6v6h-6zM357,411h6v6h-6zM357,441h6v6h-6zM363,387h6v6h-6zM363,399h6v6h-6zM363,435h6v6h-6zM363,441h6v6h-6zM369,399h6v6h-6zM369,405h6v6h-6zM369,423h6v6h-6zM369,429h6v6h-6zM369,435h6v6h-6zM375,393h6v6h-6zM375,399h6v6h-6zM375,405h6v6h-6zM375,441h6v6h-6zM381,387h6v6h-6zM381,405h6v6h-6zM381,423h6v6h-6zM381,441h6v6h-6zM387,411h6v6h-6zM387,423h6v6h-6zM387,441h6v6h-6zM393,393h6v6h-6zM393,399h6v6h-6zM393,405h6v6h-6zM393,417h6v6h-6zM393,435h6v6h-6zM399,393h6v6h-6zM399,405h6v6h-6zM399,429h6v6h-6z" fill="#FFFFFF"/>
<path d="M357,405h6v6h-6zM363,393h6v6h-6zM363,411h6v6h-6zM363,417h6v6h-6zM363,423h6v6h-6zM369,387h6v6h-6zM369,393h6v6h-6zM375,387h6v6h-6zM375,411h6v6h-6zM375,417h6v6h-6zM375,429h6v6h-6zM375,435h6v6h-6zM381,411h6v6h-6zM381,435h6v6h-6zM387,387h6v6h-6zM387,399h6v6h-6zM393,411h6v6h-6zM393,423h6v6h-6zM393,429h6v6h-6zM393,441h6v6h-6zM399,411h6v6h-6z" fill="#FFFF00"/>
<path d="M235.143,597.55 L249.8,601.458 L249.8,659.452 L259.202,667.679 L284.64,680.398 L318.334,671.702 L319.65,668.578 L312.548,658.814 L322.082,652.458 L337.654,635.848 L344.794,621.567 L355.011,605.22 L361.077,576.915 L369.928,553.902 L384.042,558.054 L399.753,563.291 L424.472,558.992 L438.2,546.408 L438.2,485.006 L404.992,482.792 L389.873,483.872 L374.793,494.644 L366.11,505.257 L346.481,511.8 L335.669,511.8 L321.091,505.422 L316.316,498.737 L310.933,494.7 L302.877,501.605 L290.786,512.688 L278.98,524.494 L265.465,533.183 L253.895,538.442 L250.333,543.428 L243.68,538.253 L228.542,531.188 L216.504,523.528 L206.767,526.31 L201.819,536.207 L194.518,537.829 L179.018,539.121 L186.635,570.858 L213.883,564.319 L229.8,569.345 L229.8,569.345 L231.022,569.731 L235.143,597.55 ZM305.2,462.325 L317.2,450.325 L317.2,427.375 L295.904,430.037 L288.243,445.358 L284.854,450.2 L281.111,455.546 L277.449,466.534 L284.046,475.77 L293.073,478.349 L305.171,474.316 L305.2,474.323 L305.2,462.325 Z" fill="#FFFFFF"/>
<clipPath id="lc3"><path d="M253,599 L238,595 L234,568 L233,567 L214,561 L189,567 L183,542 L195,541 L204,539 L209,529 L216,527 L227,534 L242,541 L251,548 L256,541 L267,536 L281,527 L293,515 L305,504 L319,492 L326,480 L314,473 L305,471 L293,475 L286,473 L281,466 L284,457 L291,447 L298,433 L314,431 L314,449 L302,461 L302,492 L314,501 L319,508 L335,515 L347,515 L368,508 L377,497 L391,487 L405,486 L435,488 L435,545 L423,556 L400,560 L385,555 L368,550 L358,576 L352,604 L342,620 L335,634 L320,650 L308,658 L316,669 L285,677 L261,665 L253,658 Z"/></clipPath><g clip-path="url(#lc3)" fill="none" stroke-width="1">
<path d="M359.9,476.7L362.2,472.9L364.4,469.2L365.5,466.4L368.8,462.7L371.1,457.7L371.7,454.4L370.6,451.5M308.6,622.1L310.1,618.7L313.3,614.0L313.4,609.1L314.7,605.9L317.8,601.4L318.0,596.6M235.3,449.0L238.7,446.6L241.8,445.4L244.2,442.7L248.5,438.8L251.5,438.4L255.3,435.4M225.7,637.8L222.1,638.3L216.4,638.4L212.3,640.5L206.7,641.5L203.1,643.3L199.5,644.2L197.5,646.7L194.8,651.5L191.3,653.7L189.0,658.5L189.7,664.5L188.8,668.1L189.6,671.4L188.5,675.1M234.1,510.2L232.0,513.0L228.9,514.5L225.2,516.0L222.6,518.5L217.3,520.9L215.0,523.7L212.8,526.2L208.5,529.5L207.4,533.5L204.5,536.1M307.3,461.7L309.2,464.3L311.3,468.5L313.4,472.5L315.5,474.8L316.3,480.1L314.9,483.2L312.4,486.0L309.4,487.1L306.1,489.2L303.6,491.0L302.2,493.9M374.9,668.0L374.3,672.6L373.9,677.0L376.4,681.6L381.3,683.8L384.3,686.6L385.1,690.1L384.5,694.4M400.6,659.1L396.0,662.9L395.0,666.8L392.0,670.3L390.3,673.3L387.7,677.3L384.8,680.9L381.0,685.4M310.0,583.3L311.6,588.3L311.8,591.9L311.2,596.5L309.4,599.5L307.0,602.1L305.7,606.5L306.0,610.7L304.2,616.0L301.8,621.2L298.7,624.2L294.7,624.7L289.7,622.9M428.3,505.8L426.5,500.7L427.3,496.2L428.9,490.5L428.4,486.8L424.7,483.0L419.8,479.7L418.5,476.3L413.8,473.4L412.1,470.4L412.7,466.4L413.0,462.9L411.9,459.5L409.4,456.8M342.8,446.8L343.5,450.3L344.1,454.5L342.4,459.0L342.1,462.9L340.6,467.0L337.2,469.3L331.8,470.8L328.6,472.4L323.3,474.1L318.4,475.0L314.0,473.5M333.0,605.8L333.1,609.7L335.4,613.8L335.8,618.1L334.6,621.3L334.4,626.4L334.7,629.8L333.0,633.8M382.7,452.4L388.6,452.2L392.4,449.6L396.6,449.6L400.7,452.3L406.4,452.7L411.0,454.5L413.7,456.0L417.6,456.0L422.9,454.0L428.3,454.7L432.1,453.7M219.8,565.3L225.2,565.5L230.1,566.5L235.7,568.6L238.8,570.3L243.0,571.2L247.9,570.0L251.5,570.8L255.6,569.6L260.0,568.3L263.5,569.2M231.5,452.6L231.5,458.5L230.4,464.1L228.4,469.4L225.7,471.2L224.5,474.5L225.4,479.4L226.0,484.0L225.1,487.1L224.6,492.0M318.0,636.4L320.1,633.0L321.6,629.6L325.9,626.5L330.9,623.5L334.3,622.2L337.5,622.1L341.3,623.7L346.6,624.5L350.5,626.7L356.2,627.4L361.4,627.3M330.7,656.4L333.7,654.4L337.0,649.9L340.8,645.9L341.1,642.0L338.9,638.6L336.0,635.9L335.3,631.2L336.6,625.4M230.0,518.3L229.6,522.8L229.8,528.3L231.0,531.6L232.8,535.4L234.6,538.6L236.2,542.9L236.1,546.4M378.0,523.0L378.5,519.4L378.6,515.2L377.9,510.5L377.8,507.1L376.0,502.0L373.5,499.8L371.7,497.0L368.7,492.4L364.0,490.8L360.3,491.5L355.7,490.3L353.5,487.5M405.5,542.9L407.3,539.1L406.8,534.9L404.8,532.3L403.1,529.1L400.5,524.7L400.5,519.3L399.3,513.9L399.8,508.5L400.2,503.7L402.3,499.4L405.0,497.1L409.4,494.9M359.5,643.0L362.1,641.4L364.3,637.0L363.5,632.6L363.8,628.7L365.3,625.5L365.1,621.7L363.3,616.9L360.2,612.9M251.6,548.4L246.2,547.0L242.4,546.7L236.9,547.3L234.1,548.6L229.0,548.0L224.5,549.2M284.7,668.0L280.4,664.7L274.9,663.0L271.2,660.2L266.8,658.2L261.0,658.5L256.4,660.9L252.7,660.4L249.4,659.0L246.5,655.0L242.3,651.5L239.3,646.5L236.3,642.0M331.2,576.6L329.2,572.9L328.9,569.1L330.4,563.4L330.3,559.3L330.8,555.2L334.4,550.4L338.4,546.9L340.7,541.9L345.1,538.7L347.7,533.9L349.6,530.4M202.2,474.3L202.3,478.9L203.4,482.9L205.0,486.1L205.6,490.6L204.3,494.3L204.3,499.3L203.8,504.1M250.6,484.2L247.9,488.8L244.0,491.8L241.6,494.3L237.2,497.0L234.8,501.1L232.7,503.2L228.8,504.8L226.8,507.4L221.9,508.7L216.5,506.7L214.3,504.2L210.8,499.6L209.3,494.7M230.2,463.1L226.8,459.3L222.0,456.5L217.3,454.2L213.5,454.9L210.6,457.5L206.0,458.5M365.2,527.4L362.0,528.4L358.7,528.8L354.9,526.9L349.4,525.0L344.9,524.3L341.6,523.0L338.7,519.7L335.2,515.1L335.0,511.7M270.7,653.6L267.4,657.6L265.3,659.8L262.5,663.1L259.0,664.4L255.5,668.6L251.1,671.8L245.7,671.4L240.7,674.7M368.4,506.5L374.1,507.6L378.4,508.4L382.7,509.8L388.3,508.2L392.8,508.5L398.6,506.9M368.3,623.8L362.8,623.0L359.3,619.4L356.7,617.2L353.5,615.3L350.4,614.5L346.3,613.8M204.1,620.4L200.4,622.0L195.0,620.7L190.5,621.0L187.8,623.5L187.0,626.5L188.0,632.0L190.2,635.7L193.1,636.9L197.7,640.0M390.7,638.5L392.5,635.6L394.5,632.0L396.4,627.0L399.2,624.9L402.6,624.6L405.9,622.5L411.6,622.8L414.3,624.4L417.6,624.6M259.0,472.5L253.3,472.2L249.7,470.7L245.4,468.7L242.7,466.0L242.0,463.0L241.8,459.3M370.1,445.5L374.0,449.8L376.0,454.7L378.8,458.8L380.2,462.5L382.4,465.7L383.3,470.6L383.4,474.4L384.8,479.4L386.9,482.0M265.3,674.4L263.7,670.4L261.2,666.0L259.4,663.2L257.1,660.8L253.3,658.1L248.2,658.5L245.1,656.7L242.7,654.8L238.8,654.3M378.5,500.8L382.8,502.7L384.9,505.3L386.7,510.5L387.9,514.4L387.3,519.4L384.7,524.8L380.2,527.0L375.7,526.0L371.1,526.4L367.2,529.8M268.5,630.8L265.1,631.0L259.6,630.7L255.8,629.8L252.5,629.7L248.2,632.5L245.1,633.3L240.4,636.0L235.6,637.0L231.5,637.0M281.6,668.4L283.4,665.6L286.9,664.1L292.1,662.6L296.1,659.7L300.6,658.3L305.5,660.3L310.9,659.0L314.0,657.6L317.0,654.9L321.0,654.4L324.4,653.3L327.6,654.1L331.8,657.7M217.8,453.0L220.5,451.4L222.4,448.0L225.0,443.4L227.5,438.0L226.4,434.2L223.0,430.6L220.9,427.7L220.0,423.2L216.8,420.4M328.0,617.5L324.6,619.9L319.5,621.0L315.5,624.6L313.9,629.7L312.0,633.4M270.2,602.3L266.3,600.4L264.2,597.4L263.7,593.7L261.2,589.6L261.8,585.2L264.7,580.2L269.1,577.1L271.6,573.6M359.8,603.9L363.9,605.2L369.5,603.3L372.7,601.4L374.9,597.9L375.8,593.7L376.0,590.1L377.8,584.9L376.3,579.2L374.9,575.9L373.4,571.1M344.7,604.7L342.4,599.4L338.6,596.5L334.3,595.7L328.6,597.1L324.8,601.1L320.3,601.9L316.8,602.7L311.7,601.7L308.9,599.3L307.8,595.6L306.3,590.3L305.8,584.5M282.3,612.2L286.3,615.6L288.4,618.8L288.6,623.0L292.5,627.5L293.7,631.3L295.2,635.4L295.3,641.0L292.5,645.9M254.2,525.8L251.1,530.8L247.8,533.9L247.1,537.1L248.3,541.7L248.6,545.7L251.5,549.8L254.0,553.1L256.9,556.5M233.9,592.9L236.5,596.3L238.3,598.8L241.7,599.7L245.1,603.6L247.9,606.2L251.1,609.0L254.6,611.7L257.8,612.1L260.6,614.6L262.9,618.2L263.5,621.2M270.3,458.4L272.1,462.4L273.5,466.8L274.2,472.6L273.2,477.8L272.4,482.4M291.3,574.1L290.5,578.2L287.6,580.7L285.9,585.1L282.5,589.4L281.1,593.1L280.2,598.9L277.7,602.5L274.0,603.8L269.0,605.4L263.7,608.0L261.9,611.1L261.9,615.9M383.3,515.2L384.6,520.4L387.2,523.3L387.7,527.3L390.9,531.3L391.2,536.6L392.2,540.1L395.6,544.5L397.8,549.0M250.6,465.5L255.1,465.8L258.7,468.1L260.1,471.5L260.5,474.6L258.5,478.5L255.6,480.3L251.9,482.5L247.8,484.6L242.5,485.5L238.6,485.1L234.5,486.4L231.5,490.8L231.9,495.6M345.3,527.4L348.5,532.4L348.6,535.7L346.7,540.1L343.1,544.8L342.9,548.0L341.5,552.0L339.7,556.4L340.5,561.7M397.4,595.8L392.6,596.8L388.2,597.8L382.3,597.3L379.0,597.5L374.8,600.0L370.2,601.2L365.2,603.9L361.6,603.2L358.9,601.2L353.9,598.2L351.8,593.9L348.7,592.3L346.1,590.7L342.8,587.0M229.9,470.1L233.8,471.9L239.2,471.1L244.2,473.8L245.7,477.1L245.7,481.6L244.2,485.7M335.6,661.5L334.8,665.3L334.7,671.0L335.4,675.5L338.4,678.1L340.8,680.6L342.3,683.7L346.2,688.3L347.2,692.4L345.1,697.6L345.8,700.6L350.2,704.0L353.3,704.1M253.9,574.0L256.8,571.0L259.0,566.4L260.2,563.2L262.8,561.3L266.7,557.9L271.7,557.7L276.5,554.9L280.6,551.6L285.5,551.1L288.4,549.6L290.4,545.5M392.9,535.0L397.5,537.8L399.1,542.4L397.9,545.8L394.7,547.7L391.9,552.1L389.7,554.2L385.8,556.6L380.6,556.3" stroke="#FFC4CC"/>
<path d="M424.5,581.6L421.7,584.7L420.8,589.2L421.1,593.6L423.4,597.2L426.2,600.0L429.1,601.9L431.0,605.1L433.9,606.9L435.6,609.6L440.0,611.9L441.2,614.9L441.9,617.9L446.0,621.3M225.4,468.0L221.6,471.0L218.4,473.5L213.3,475.8L210.6,480.1L207.8,484.7L205.4,487.8L200.8,489.0L196.1,488.5L192.9,485.8L187.6,484.3L183.4,481.2L180.2,481.3L176.7,483.0M221.9,438.7L218.9,438.0L216.6,435.0L212.8,432.1L208.9,427.9L207.2,425.0L203.7,423.8L200.8,420.3L198.9,417.1L198.8,413.2L199.6,410.1L200.9,406.4L200.2,402.4L201.9,399.4L201.0,394.3L200.6,389.1M283.5,472.9L282.5,469.9L280.5,466.5L280.1,463.0L281.4,457.8L281.6,452.9L279.4,448.0L279.9,442.8L277.5,438.1L275.8,432.6L276.2,427.0L274.0,423.6L270.6,420.5M272.4,659.6L268.3,657.8L262.6,656.4L257.4,655.5L255.1,652.8L251.7,648.1L250.4,644.1M218.6,567.5L219.6,570.7L221.1,574.5L223.7,576.3L226.6,580.2L231.9,581.6L235.1,580.7L239.8,578.6L242.7,577.0L244.8,573.8L244.8,569.9L245.5,566.7L247.9,563.7L249.4,559.6M291.2,535.9L293.4,533.9L298.7,531.4L302.4,529.1L303.9,525.8L307.7,522.8L312.5,520.0L318.2,520.0L321.9,521.2L325.5,524.9L327.9,529.5L330.8,530.8L333.5,532.7M308.8,597.6L312.6,593.6L314.4,590.1L319.4,587.0L323.3,583.1L328.0,582.2M301.1,524.6L297.4,525.0L293.3,524.9L289.9,527.0L287.2,531.6L285.5,534.2L281.7,537.4L277.7,537.6L274.6,537.7L270.2,537.5L264.8,537.0L260.9,533.6L259.4,530.4L255.9,528.4L251.2,528.6M236.1,483.9L235.6,479.7L235.9,474.6L237.2,471.0L236.5,466.2L235.4,461.3L232.1,456.9L228.3,452.9M410.7,654.3L414.5,650.7L418.0,647.6L422.9,645.5L425.6,641.3L430.2,637.6L435.5,635.9L440.8,637.1L443.9,640.6L447.3,643.4L451.3,647.9M218.2,572.1L219.8,568.7L222.7,566.3L226.9,565.2L230.1,562.8L234.7,562.3L239.2,560.0L242.6,560.0M235.8,659.1L237.5,662.4L238.7,665.9L237.2,670.5L233.8,674.6L229.9,676.6L227.2,680.3L225.5,684.2L222.2,688.3L217.1,691.2L212.6,694.0L208.4,694.1L205.2,693.1M351.2,502.1L354.7,506.5L357.0,512.1L356.7,517.0L358.1,522.6L357.0,528.4L357.6,531.9L361.8,535.5M221.0,669.3L218.2,673.0L215.6,674.9L211.4,675.6L206.9,677.4L203.8,678.2L201.0,679.5L197.7,680.5L193.1,680.4L190.1,677.8L184.8,676.0L180.8,677.3L177.6,676.1L174.5,674.4L171.5,671.6M225.8,637.9L230.7,638.8L235.9,638.9L240.9,641.2L244.9,644.1L248.3,648.1L251.7,650.1M226.0,580.2L222.6,580.1L219.2,581.6L214.7,585.1L212.2,589.4L210.1,592.8L206.4,596.0L201.0,597.4L197.7,595.8L195.1,592.7L192.3,590.9M278.4,515.2L278.9,518.4L280.9,520.9L281.9,525.8L285.4,530.0L285.6,535.9L287.3,538.6L287.9,542.7L290.1,547.1L291.8,551.5L291.8,557.4L293.7,560.3M295.8,596.7L294.6,593.7L293.0,590.0L292.3,584.6L292.4,581.1L292.4,577.7L292.8,573.1L293.5,568.7L296.4,565.9L298.4,562.2L301.8,559.1L306.8,557.5M400.8,631.2L399.7,628.5L398.6,624.1L396.3,618.6L393.1,614.4L390.8,610.2L387.8,606.0M250.9,629.0L249.4,624.6L248.9,621.6L249.9,616.8L248.9,612.4L248.8,608.9L246.2,604.6L245.8,601.1L245.6,597.4L248.1,592.6L248.5,588.8M238.4,668.3L241.3,671.6L243.6,673.6L245.4,676.9L247.9,680.4L250.4,682.2L253.2,684.7M199.0,553.5L195.7,552.3L192.8,550.9L188.4,548.0L183.3,548.0L177.7,548.7L174.6,546.8L170.2,545.6L165.8,545.3L162.6,545.5L159.3,544.4L156.2,544.2M221.2,514.0L221.3,510.4L220.3,506.5L221.4,502.6L222.7,499.1L221.6,493.3L220.7,488.1M356.6,549.4L354.1,551.1L349.0,553.3L345.8,556.2L343.0,557.3L339.9,556.9L336.9,556.3L331.8,554.9M405.7,583.1L407.5,588.7L410.0,591.8L412.2,594.1L415.1,598.3L420.8,600.0L424.0,601.7L427.6,601.0L431.9,601.2L437.1,599.7L442.1,601.0L446.4,604.6M355.2,482.3L354.8,486.1L356.1,490.3L357.8,493.1L360.0,497.4L365.1,500.0L367.1,503.7L369.8,505.5L372.6,507.3L376.8,507.6L381.6,508.1M187.6,472.1L187.9,466.9L186.9,462.2L188.6,458.7L191.1,455.6L195.5,453.9L201.4,453.0L205.6,450.6L211.0,449.0L216.4,450.3L218.5,452.7L219.1,456.0L217.2,461.2M409.9,653.4L411.2,650.5L414.4,648.8L419.5,646.6L425.0,647.6L427.7,649.0L432.5,650.8L436.1,650.8L441.7,650.5L446.6,647.1L451.4,645.3M335.5,542.5L333.5,547.8L333.7,552.9L331.9,557.4L328.7,560.5L325.8,565.4L325.4,571.3L323.9,574.5L322.2,577.1L321.9,582.3L323.2,585.2L325.2,590.8M316.5,540.3L320.2,544.8L322.5,548.1L325.2,549.7L327.6,552.5L328.3,557.0L328.9,560.1L331.6,562.5L335.5,564.3L338.8,568.6L339.7,574.5M247.0,545.6L250.8,548.2L252.4,550.8L253.1,555.5L250.3,560.5L250.0,563.9L250.2,568.7L247.3,573.2M212.7,629.1L208.8,629.3L206.0,631.9L204.7,636.3L203.7,640.7L204.1,646.1L202.7,648.9L200.9,651.4L200.2,656.0L200.2,660.4L200.3,666.2M314.0,560.7L310.1,560.7L305.8,559.5L301.2,559.1L297.7,560.3L293.5,560.2L288.9,563.4L283.3,564.2L278.7,565.1L273.9,568.1M313.8,511.7L315.7,506.6L317.0,501.2L316.5,495.3L318.7,491.7L321.4,489.8L326.7,489.9L330.7,491.5L336.6,492.2L341.8,490.6L347.3,490.0L350.7,489.4M277.6,611.6L280.1,613.4L281.2,617.4L279.8,621.3L275.3,624.8L270.3,625.1L267.2,624.1L261.9,625.5L258.1,626.1L253.2,627.2L248.2,627.9L244.4,626.6L241.5,625.4L238.4,620.5L237.2,616.3M291.7,573.7L290.0,571.0L286.7,567.9L285.8,563.4L285.0,558.3L282.8,554.7L280.7,552.2L279.7,547.7L278.5,543.7L278.2,539.1M246.0,554.3L243.7,552.0L241.0,548.0L238.0,545.4L233.7,544.8L228.0,543.2L224.3,538.6L224.1,535.3M298.8,637.4L293.4,639.6L287.9,641.5L282.7,642.4L279.1,645.6L273.9,646.2L270.1,649.0L268.9,652.3M292.0,624.4L295.3,620.7L295.5,616.4L297.3,611.1L300.5,606.6L302.4,602.9L307.2,600.2L311.2,597.7M374.0,606.4L371.0,608.4L365.9,610.4L361.4,613.9L359.0,617.4L356.7,620.2L353.2,620.9L349.1,622.0L345.7,623.2L340.7,625.4L336.3,624.8L332.4,623.1L327.1,620.7L323.2,620.7L318.3,622.7M184.8,650.6L182.4,648.6L181.6,644.3L179.1,642.1L176.0,641.2L171.2,642.3L167.2,646.3L163.2,650.5L161.9,655.4L160.1,659.9M215.2,580.0L217.3,577.4L221.0,572.9L224.3,568.1L226.7,565.4L228.7,560.9L228.4,556.2L227.9,551.7L226.4,548.6L223.7,547.0L220.7,542.6M256.4,534.6L259.9,538.0L262.9,541.6L264.0,547.1L267.6,550.3L270.3,551.8M403.8,631.8L398.2,633.5L393.9,632.9L389.4,635.4L386.1,637.2L383.9,641.1L383.6,646.2L383.1,650.5L383.0,654.9L380.5,657.9L376.5,659.3L372.6,663.3L369.4,664.7L364.6,665.7M363.3,437.8L359.9,437.3L354.8,438.1L351.3,441.5L348.8,445.8L343.7,447.6L339.2,446.5L335.1,446.7L330.3,449.8M425.2,482.6L427.7,486.1L427.5,489.6L424.6,494.3L419.7,497.5L415.9,501.1M387.3,463.7L385.3,466.0L382.7,468.5L378.1,471.6L376.1,475.3L374.1,479.8L374.7,484.8L376.3,488.9M313.2,502.5L309.0,505.1L307.0,509.1L304.8,512.8L302.8,517.6L300.2,519.9L299.1,524.5L294.8,528.7L292.2,531.9L291.6,535.0L289.7,538.0M380.0,625.0L380.2,628.1L382.0,631.4L381.1,636.5L380.5,639.9L379.8,645.3L377.4,650.8L375.9,655.2L375.0,659.9L374.4,665.1M197.3,438.4L192.2,439.5L188.0,437.6L183.9,435.0L179.8,435.3L174.2,435.7L171.2,438.3L167.7,440.9L164.2,443.3L161.6,447.3L159.7,449.9L156.8,453.9L151.5,456.1L146.2,456.5M212.0,457.6L208.9,459.4L205.1,462.5L201.1,465.2L196.8,468.0L195.5,470.9L196.3,473.9L199.1,476.6L199.6,480.6M396.6,486.2L393.0,486.5L389.8,486.5L385.7,489.2L382.4,489.7L377.7,490.8L372.0,490.5L369.0,488.5L364.0,486.0L360.1,483.1L355.0,482.3M327.0,457.4L326.2,461.0L323.6,463.8L321.0,466.2L319.4,471.1L319.9,475.9L321.6,479.2L322.2,483.5L320.7,488.3L317.9,491.7M358.7,446.0L355.0,444.1L353.1,440.5L349.9,437.9L346.9,436.8L344.5,432.8L342.2,429.7L340.3,424.5M264.6,570.4L267.9,570.3L271.9,567.7L275.8,566.0L278.9,566.7L282.9,570.6L287.8,573.7L291.0,574.0L295.5,572.0L300.2,569.0M299.4,647.0L301.5,650.9L305.0,653.3L307.7,655.1L313.6,655.0L318.1,651.3M371.8,632.6L375.7,632.1L378.8,633.2L382.2,632.5L387.5,633.2L391.3,633.2L394.5,633.1L397.6,631.7L401.8,632.6L404.0,635.3L407.6,638.2L408.3,641.5M407.3,555.7L404.0,558.5L401.4,560.3L399.4,563.6L395.7,568.3L390.7,571.0M399.8,646.4L403.8,650.6L404.5,654.2L408.9,657.9L413.8,658.4L419.1,657.0L422.4,655.7L424.9,653.3L427.2,650.6L427.3,644.8L427.4,639.6L426.6,636.2L427.7,632.1M230.9,524.0L232.0,529.9L234.3,534.4L237.5,537.0L242.4,538.2L247.1,538.0L251.9,535.9L254.6,533.2" stroke="#BFF2FF"/>
</g>
<path d="M236,655 L256,590 L292,540 L330,516 L360,512 L420,492 L449,478 L478,440 L512,389 L560,355 L591,342 L640,333" fill="none" stroke="#FFC0CC" stroke-width="2"/>
<path d="M375,441h6v6h-6zM381,447h6v6h-6zM381,453h6v6h-6zM381,471h6v6h-6zM393,453h6v6h-6zM393,477h6v6h-6zM399,459h6v6h-6zM399,465h6v6h-6zM411,453h6v6h-6zM417,441h6v6h-6z" fill="#FFFFFF"/>
<path d="M375,447h6v6h-6zM375,453h6v6h-6zM375,465h6v6h-6zM375,471h6v6h-6zM387,453h6v6h-6zM387,459h6v6h-6zM387,471h6v6h-6zM393,447h6v6h-6zM393,459h6v6h-6zM399,441h6v6h-6zM399,447h6v6h-6zM399,453h6v6h-6zM399,471h6v6h-6zM405,447h6v6h-6zM411,447h6v6h-6zM417,453h6v6h-6z" fill="#FFFF00"/>
<path d="M422,439 L469,439 L469,461 L422,461 Z" fill="#FFFFFF"/>
<clipPath id="lc4"><path d="M422,439 L469,439 L469,461 L422,461 Z"/></clipPath><g clip-path="url(#lc4)" fill="none" stroke-width="1">
<path d="M446.8,446.6L451.5,444.1L457.2,442.7L462.8,443.9L466.8,448.3L470.9,451.7L473.8,453.3L476.8,453.2L481.3,456.7L487.0,458.1L492.9,459.2M444.5,448.3L446.0,443.0L449.7,439.8L453.2,439.2L457.6,437.2L461.7,435.5L466.5,434.5L469.7,433.1L473.6,434.0L476.9,434.7L481.7,434.4L486.5,431.9L491.1,432.7L494.2,431.4L499.3,431.0" stroke="#FFC4CC"/>
</g>
<g clip-path="url(#lc4)"><path d="M236,655 L256,590 L292,540 L330,516 L360,512 L420,492 L449,478 L478,440 L512,389 L560,355 L591,342 L640,333" fill="none" stroke="#FFC0CC" stroke-width="2"/></g>
<path d="M423,441h6v6h-6zM429,447h6v6h-6zM435,453h6v6h-6zM441,447h6v6h-6zM447,441h6v6h-6zM447,447h6v6h-6zM465,453h6v6h-6z" fill="#FFFF00"/>
<path d="M423,447h6v6h-6zM441,441h6v6h-6zM453,453h6v6h-6z" fill="#FF8000"/>
<path d="M466,485 L534,470 L534,520 L540,545 L530,561 L466,552 Z" fill="#FFFFFF"/>
<clipPath id="lc5"><path d="M466,485 L534,470 L534,520 L540,545 L530,561 L466,552 Z"/></clipPath><g clip-path="url(#lc5)" fill="none" stroke-width="1">
<path d="M537.3,551.2L534.8,554.7L532.3,557.7L528.6,560.4L523.4,561.2L520.3,562.7L517.0,563.8L513.8,566.3L511.0,568.9L506.4,569.1L501.6,569.5L495.7,569.9L492.4,571.8L488.2,572.2M517.4,474.6L522.0,474.4L526.9,477.7L530.7,479.7L534.5,482.0L538.3,486.2L540.8,491.2M537.1,544.1L534.7,541.3L532.4,536.2L531.6,532.3L528.5,527.8L525.2,525.7L522.3,524.7L518.4,523.4L515.7,520.1L514.4,515.0L516.0,511.9L519.0,509.7L521.1,507.2L526.7,505.8M468.4,496.1L468.7,501.9L467.3,505.0L466.4,508.7L463.2,511.5L459.5,511.9L454.8,509.6M517.9,497.3L512.7,499.9L510.4,503.9L509.6,508.1L506.1,512.5L504.0,514.9L499.8,518.0L494.5,519.5L490.7,520.1L487.4,521.8L484.6,524.4L483.3,528.9M518.9,495.8L517.3,491.6L515.5,488.1L511.2,484.5L509.7,480.2L508.1,475.9L509.6,471.3M491.0,519.1L494.5,514.3L497.9,512.8L503.4,511.8L507.7,511.0L510.4,509.6L515.5,509.7L518.4,508.2L523.3,508.4L528.8,510.4" stroke="#FFC4CC"/>
<path d="M516.1,510.7L520.8,508.9L524.6,508.9L528.1,506.7L531.4,506.4L535.4,504.1L540.0,501.4L542.3,498.7M523.0,510.1L527.1,506.0L529.0,501.6L530.1,496.1L534.2,492.4L538.5,491.2L542.2,491.5L548.1,491.9L551.5,490.3L554.2,485.8M530.7,507.9L526.9,510.8L524.5,512.7L519.5,515.2L516.8,517.5L515.7,522.0L514.0,525.1M514.2,538.0L510.2,541.9L508.6,547.6L506.6,552.9L502.5,555.5L501.0,559.1L498.9,561.3L496.0,564.3L494.9,567.3L492.1,570.2L491.5,576.1L489.5,581.1M486.8,531.0L483.8,527.6L479.8,527.0L475.3,528.0L471.1,526.6L467.2,525.3L462.8,526.4L457.8,525.6L453.5,527.7L451.2,530.0L447.6,531.2L444.1,535.9L441.9,539.5L439.3,542.6M476.4,480.0L473.4,476.8L472.4,472.2L474.0,467.0L477.5,463.8L481.2,460.5L486.3,459.1L490.0,459.5L493.6,462.8L496.6,467.4" stroke="#BFF2FF"/>
</g>
<g clip-path="url(#lc5)"><path d="M236,655 L256,590 L292,540 L330,516 L360,512 L420,492 L449,478 L478,440 L512,389 L560,355 L591,342 L640,333" fill="none" stroke="#FFC0CC" stroke-width="2"/></g>
<path d="M465,483h6v6h-6zM465,537h6v6h-6zM465,543h6v6h-6zM471,483h6v6h-6zM471,495h6v6h-6zM471,537h6v6h-6zM483,513h6v6h-6zM483,537h6v6h-6zM495,483h6v6h-6zM495,543h6v6h-6zM501,513h6v6h-6zM507,537h6v6h-6zM513,483h6v6h-6zM513,495h6v6h-6zM513,507h6v6h-6zM513,531h6v6h-6zM513,555h6v6h-6zM519,543h6v6h-6zM519,555h6v6h-6zM525,477h6v6h-6zM525,495h6v6h-6zM525,525h6v6h-6zM525,549h6v6h-6zM525,555h6v6h-6z" fill="#FFFF00"/>
<path d="M465,495h6v6h-6zM471,507h6v6h-6zM471,525h6v6h-6zM471,543h6v6h-6zM477,525h6v6h-6zM477,531h6v6h-6zM483,501h6v6h-6zM489,501h6v6h-6zM495,489h6v6h-6zM507,531h6v6h-6zM507,555h6v6h-6z" fill="#FF8000"/>
<rect x="482" y="514" width="18" height="10" fill="#FF8000"/>
<path d="M471,447h6v6h-6zM477,459h6v6h-6zM483,429h6v6h-6zM489,429h6v6h-6zM489,435h6v6h-6zM495,447h6v6h-6zM501,429h6v6h-6zM501,459h6v6h-6zM507,441h6v6h-6zM507,453h6v6h-6zM507,459h6v6h-6zM513,435h6v6h-6zM513,447h6v6h-6zM513,459h6v6h-6z" fill="#FFFFFF"/>
<path d="M477,429h6v6h-6zM489,453h6v6h-6zM489,459h6v6h-6zM495,435h6v6h-6zM513,441h6v6h-6z" fill="#FFFF00"/>
<rect x="356" y="538" width="10" height="19" fill="#FF8000"/>
<rect x="357" y="542" width="6" height="8" fill="#800000"/>
<path d="M224,595 L253,599 L253,660 L238,658 L234,599 Z" fill="#FF8000"/>
<rect x="344" y="437" width="24" height="11" fill="#FF0000"/>
<rect x="314" y="443" width="12" height="18" fill="#FF0000"/>
<rect x="320" y="503" width="13" height="7" fill="#FF0000"/>
<rect x="333" y="521" width="12" height="11" fill="#800000"/>
<rect x="333" y="515" width="12" height="6" fill="#FF0000"/>
<path d="M411,423h6v6h-6zM411,429h6v6h-6zM411,435h6v6h-6zM417,417h6v6h-6zM417,423h6v6h-6zM417,429h6v6h-6zM417,435h6v6h-6zM423,387h6v6h-6zM423,393h6v6h-6zM423,399h6v6h-6zM423,405h6v6h-6zM423,411h6v6h-6zM423,417h6v6h-6zM423,423h6v6h-6zM423,429h6v6h-6zM423,435h6v6h-6zM429,387h6v6h-6zM429,393h6v6h-6zM429,399h6v6h-6zM429,405h6v6h-6zM429,411h6v6h-6zM429,417h6v6h-6zM429,423h6v6h-6zM429,429h6v6h-6zM435,387h6v6h-6zM435,393h6v6h-6zM435,399h6v6h-6zM435,405h6v6h-6zM435,411h6v6h-6zM435,417h6v6h-6zM435,423h6v6h-6zM441,387h6v6h-6zM441,393h6v6h-6zM441,399h6v6h-6zM441,405h6v6h-6z" fill="#FF0000"/>
<path d="M411,423h6v6h-6zM411,429h6v6h-6zM417,417h6v6h-6zM417,423h6v6h-6zM417,429h6v6h-6zM423,393h6v6h-6zM423,399h6v6h-6zM423,405h6v6h-6zM423,411h6v6h-6zM423,417h6v6h-6zM423,423h6v6h-6zM423,429h6v6h-6zM429,393h6v6h-6zM429,399h6v6h-6zM429,405h6v6h-6zM429,411h6v6h-6zM429,417h6v6h-6zM429,423h6v6h-6zM435,393h6v6h-6zM435,399h6v6h-6zM435,405h6v6h-6zM435,411h6v6h-6z" fill="#800000"/>
<rect x="440" y="431" width="12" height="11" fill="#FF0000"/>
<path d="M450,401 L457,387 L464,378 L480,375 L490,368 L497,354 L513,345 L525,336 L534,324 L544,312 L554,305 L564,299 L554,315 L542,329 L539,350 L558,348 L570,340 L593,335 L636,336 L640,352 L591,348 L589,362 L597,374 L607,382 L589,389 L554,382 L548,382 L539,393 L523,401 L507,405 L492,413 L480,417 L466,425 L455,430 L445,420 Z" fill="#FFFFFF"/>
<clipPath id="lc6"><path d="M450,401 L457,387 L464,378 L480,375 L490,368 L497,354 L513,345 L525,336 L534,324 L544,312 L554,305 L564,299 L554,315 L542,329 L539,350 L558,348 L570,340 L593,335 L636,336 L640,352 L591,348 L589,362 L597,374 L607,382 L589,389 L554,382 L548,382 L539,393 L523,401 L507,405 L492,413 L480,417 L466,425 L455,430 L445,420 Z"/></clipPath><g clip-path="url(#lc6)" fill="none" stroke-width="1">
<path d="M601.5,308.7L604.9,305.6L606.7,302.5L607.8,298.2L608.1,293.8L612.2,289.5L612.9,285.8L612.9,281.4L611.5,277.5L608.4,272.9L607.7,268.3L607.6,264.0M534.1,339.8L533.8,336.3L535.6,333.4L538.0,330.2L538.6,325.6L540.0,321.5L539.4,315.9L540.2,311.7L538.3,306.0L538.0,300.3L537.6,296.5M474.7,308.5L478.5,310.0L482.9,310.7L487.3,313.0L491.1,312.6L494.3,314.0L497.5,315.0L502.0,316.5L505.8,318.1L509.9,319.9M580.2,327.4L580.3,323.0L581.7,319.2L584.5,316.6L587.8,314.6L592.3,311.4L596.0,307.3L597.1,303.9M566.4,406.3L569.5,405.1L573.5,402.2L575.1,399.5L578.7,397.5L582.3,395.0L587.9,394.2L591.2,392.2L592.9,389.3M501.0,371.4L501.1,374.8L502.7,378.4L501.9,382.0L499.7,387.2L496.7,389.3L491.6,389.5L487.0,391.5L483.7,390.8L477.9,392.3L474.6,391.0L471.0,387.7L468.9,382.1L466.7,378.2M454.2,357.7L456.9,362.7L458.2,365.4L460.0,370.6L462.2,373.0L466.0,373.8L468.8,376.1L471.0,378.2L472.3,382.8L473.4,386.4M485.1,338.0L486.8,343.1L489.8,347.5L491.3,350.3L491.5,354.9L489.1,358.0L486.1,363.1L483.3,366.8L480.3,367.6L477.6,370.7L476.6,374.7L472.4,378.6M552.1,406.1L551.0,401.8L551.4,398.4L549.9,393.8L549.8,390.8L548.0,387.4L543.9,385.3M589.4,358.4L593.8,356.5L597.1,352.4L599.9,351.1L603.4,347.7L604.0,344.0L602.6,339.5L604.3,334.4L603.1,331.1M506.8,414.0L502.2,411.4L496.4,411.6L493.5,412.8L490.1,412.2L484.8,413.9L480.7,412.5L477.1,412.0L474.0,412.2M604.3,372.4L601.2,367.8L596.8,364.3L593.5,360.7L592.7,355.6L594.6,350.3M538.8,405.2L537.4,408.9L534.5,413.7L534.0,418.3L534.8,421.4L538.3,424.7L543.0,428.2L544.8,433.6L548.7,436.9L549.5,440.6L550.6,444.7M492.4,427.7L488.2,430.7L486.3,433.9L486.2,437.6L484.2,440.0L482.4,443.4L479.0,445.1L476.9,448.9M539.9,380.5L537.0,381.5L533.4,384.7L533.0,387.9L531.9,393.5L529.8,397.6L525.2,399.9L520.7,401.4L516.9,403.0L513.0,406.1L508.7,408.8L504.7,409.8L501.8,412.5L498.2,415.4M446.9,369.4L445.7,363.8L442.2,361.0L439.0,359.0L433.3,357.2L430.5,354.7L429.1,349.2L428.3,345.5L426.5,342.1L425.1,338.3M591.2,307.3L593.7,304.0L596.2,300.9L601.1,299.6L603.0,297.3L606.4,294.4L611.1,294.0L614.3,293.5M632.2,341.8L633.3,345.4L631.5,350.3L632.8,355.0L635.3,357.3L639.6,361.0L642.9,361.4L645.9,362.8L651.0,364.8L655.5,364.6L658.6,362.3L660.6,358.9L661.8,355.6M466.1,405.0L462.1,403.1L458.0,401.5L454.8,401.8L450.0,402.5L447.1,401.4L443.4,399.5L437.9,399.7L434.3,401.3L431.9,403.4L430.5,408.7L431.0,412.0L431.9,415.1L433.1,419.3L435.6,424.0M585.4,351.0L589.5,354.4L592.0,356.3L596.8,356.4L600.3,356.2L603.2,358.0L608.5,359.8L613.2,358.2L617.6,355.9L619.5,352.3M629.4,401.5L633.9,398.6L637.3,393.8L638.5,390.6L639.5,387.1L640.6,383.3L639.9,379.5L640.2,374.7L642.6,371.3L644.5,368.3L648.6,364.9L653.0,363.7L656.4,363.1L660.6,360.1M598.3,338.7L597.9,332.9L595.1,329.4L593.1,324.3L594.9,319.0L594.7,315.8L592.4,310.6L591.8,307.2L591.0,302.2L593.2,296.7L596.6,291.7L597.5,286.7M562.6,320.0L559.5,316.1L559.1,312.7L559.9,308.1L561.5,303.4L560.7,298.6L558.6,294.8M604.5,338.8L608.3,338.5L612.4,335.8L614.4,332.6L617.1,330.4L621.1,327.4L624.9,324.3L628.6,319.8L629.7,314.9L627.8,310.8L626.3,308.0L622.5,304.7L618.4,304.1M576.0,364.5L575.7,360.2L573.0,356.9L570.4,352.6L570.3,349.4L567.7,345.6L563.5,342.4L562.1,338.8M573.3,398.8L578.6,399.0L583.0,399.2L588.6,398.4L592.7,395.4L595.8,395.2L598.8,394.5L603.8,394.1L608.2,395.4L613.0,395.9L617.7,396.3L621.8,393.6L625.9,392.6L628.7,390.0M608.3,387.7L608.4,384.6L611.4,380.0L614.2,378.3L619.7,376.7L623.4,373.4L624.4,370.3L623.2,364.6L624.4,361.8L624.5,357.5L623.2,354.0M593.8,299.3L590.7,300.4L587.3,300.2L583.1,298.3L580.6,296.0L578.6,292.0L578.2,288.1L579.2,282.9L578.8,279.8L580.3,274.2L578.4,270.1M473.9,323.1L470.3,321.2L466.1,318.8L462.5,318.3L457.6,315.0L453.9,310.5L450.7,307.9M626.7,299.8L628.8,295.2L630.2,291.9L631.1,289.0L633.9,285.0L637.5,282.0L641.0,279.1L645.6,278.5L648.8,279.8" stroke="#FFC4CC"/>
<path d="M500.1,411.1L497.1,409.5L494.5,407.3L491.0,405.6L489.4,402.9L486.8,397.6L484.5,392.6L483.2,388.2L481.5,384.7L482.2,380.1L482.5,375.6L484.7,371.0M461.7,373.9L460.2,368.9L460.6,365.6L463.2,360.8L467.1,357.8L468.1,352.9L468.7,349.2L467.2,346.1M614.9,326.5L617.0,322.0L619.1,319.2L620.8,316.2L625.6,312.5L629.4,312.2L634.8,311.1M597.7,413.6L593.1,411.4L588.2,409.9L583.2,411.1L578.9,415.1L576.7,418.8L574.1,421.2M454.1,390.8L454.8,394.6L454.5,400.3L451.1,404.4L450.0,408.8L451.1,413.0L454.2,416.3L455.6,420.1L456.8,425.7L455.3,430.2M610.7,400.0L607.1,395.6L605.5,390.9L603.4,388.4L600.2,385.1L597.2,383.5L593.6,384.0L590.5,384.6L587.0,385.2L582.3,384.7L579.1,386.1L576.1,390.0L572.6,393.0M637.7,330.7L638.2,336.5L637.9,341.7L636.2,345.3L631.1,348.3L625.9,348.6L622.5,349.4L618.6,352.5L613.6,354.3L609.6,355.6L604.2,353.8L601.3,351.8M502.8,425.4L503.6,420.8L502.3,415.8L499.9,411.0L496.8,409.5L494.3,405.4L492.4,403.1L488.9,401.2L484.6,398.8L479.3,398.8L475.0,402.5L471.4,406.2L468.0,408.4M616.6,401.4L614.3,406.0L615.0,410.8L617.1,414.9L617.5,418.5L619.6,423.4L622.2,427.5L625.9,431.0L628.5,434.7L631.5,437.5L633.9,442.3L636.6,445.3M639.9,411.0L639.5,414.3L636.2,418.8L636.1,423.2L632.9,427.6L632.2,430.8L633.1,436.5L636.5,441.4L638.8,444.8L640.2,447.6L643.2,451.5L647.4,452.6M547.7,310.9L547.2,307.7L544.6,304.7L544.2,298.8L546.2,295.4L546.7,292.0L545.5,287.5L544.5,283.8L545.3,279.3L548.9,275.0M522.5,423.7L519.3,426.9L515.4,430.0L513.2,432.4L509.1,434.3L506.7,438.8L503.4,441.8L501.3,445.4L497.2,447.3M446.3,311.2L448.5,308.8L451.7,308.1L456.8,307.1L462.2,309.2L465.0,312.8L466.1,316.3L466.7,321.5L468.3,325.7M585.4,300.4L588.3,299.0L592.0,297.3L597.0,297.7L599.8,299.3L605.5,301.1L608.2,303.9L610.1,306.3M450.2,382.6L449.4,379.0L448.2,374.1L448.5,370.3L447.8,366.9L445.9,362.8L447.4,357.1L449.8,352.2L452.6,348.6L454.6,344.1L459.2,341.6L462.4,337.0L465.9,335.3L469.1,334.2M486.3,407.2L486.3,411.3L487.5,417.0L490.7,421.6L495.3,424.0L499.6,426.5L503.5,426.1L506.6,425.0L511.5,423.3L516.0,423.0L519.6,423.7L523.0,424.6L525.6,426.0L529.6,429.1M545.1,333.6L540.1,333.2L536.5,334.6L534.1,338.8L532.8,342.0L530.4,346.1L526.0,349.8L525.1,354.7L524.8,359.6M488.9,313.0L484.1,309.7L481.3,305.9L479.8,303.2L474.6,300.4L472.0,296.9L469.8,291.7L470.4,288.6L468.7,284.0L465.6,282.2L460.5,280.2L455.6,278.0L452.2,278.5M477.4,410.6L481.8,410.9L486.3,413.1L489.8,414.2L495.3,412.7L499.4,413.5L505.2,412.0L508.6,408.5L509.0,403.7" stroke="#BFF2FF"/>
</g>
<g clip-path="url(#lc6)"><path d="M236,655 L256,590 L292,540 L330,516 L360,512 L420,492 L449,478 L478,440 L512,389 L560,355 L591,342 L640,333" fill="none" stroke="#FFC0CC" stroke-width="2"/></g>
<path d="M447,399h6v6h-6zM453,393h6v6h-6zM459,423h6v6h-6zM471,381h6v6h-6zM471,399h6v6h-6zM507,357h6v6h-6zM507,369h6v6h-6zM513,345h6v6h-6zM513,381h6v6h-6zM519,339h6v6h-6zM531,327h6v6h-6zM537,315h6v6h-6zM537,363h6v6h-6zM549,369h6v6h-6zM555,357h6v6h-6zM555,369h6v6h-6zM573,339h6v6h-6zM573,345h6v6h-6zM579,375h6v6h-6zM597,381h6v6h-6zM603,339h6v6h-6zM615,333h6v6h-6z" fill="#FF8000"/>
<path d="M453,387h6v6h-6zM465,399h6v6h-6zM471,387h6v6h-6zM471,411h6v6h-6zM477,387h6v6h-6zM489,363h6v6h-6zM489,381h6v6h-6zM489,399h6v6h-6zM489,405h6v6h-6zM495,351h6v6h-6zM495,387h6v6h-6zM501,399h6v6h-6zM507,345h6v6h-6zM507,375h6v6h-6zM513,363h6v6h-6zM519,375h6v6h-6zM519,381h6v6h-6zM525,345h6v6h-6zM525,351h6v6h-6zM525,357h6v6h-6zM531,351h6v6h-6zM531,381h6v6h-6zM537,351h6v6h-6zM543,351h6v6h-6zM549,357h6v6h-6zM561,351h6v6h-6zM561,381h6v6h-6zM567,351h6v6h-6zM585,357h6v6h-6z" fill="#FFFF00"/>
<path d="M585,384 L610,375 L630,372 L625,395 L600,410 L585,420 L566,440 L560,462 L547,470 L535,462 L544,447 L560,437 L566,419 L585,403 Z" fill="#FFFFFF"/>
<clipPath id="lc7"><path d="M585,384 L610,375 L630,372 L625,395 L600,410 L585,420 L566,440 L560,462 L547,470 L535,462 L544,447 L560,437 L566,419 L585,403 Z"/></clipPath><g clip-path="url(#lc7)" fill="none" stroke-width="1">
<path d="M603.3,388.9L599.3,388.1L593.7,387.8L590.7,387.1L585.6,386.2L581.7,384.1L577.9,383.5L573.9,382.3L569.4,382.1M559.7,382.3L558.8,388.2L559.0,391.5L557.0,395.4L553.6,399.1L551.3,403.5L550.3,409.4L546.4,413.3M569.7,435.8L574.6,432.8L576.9,428.6L582.2,425.9L584.7,424.1L585.9,421.4M625.3,426.9L627.2,429.2L631.0,433.3L633.8,435.9L637.2,439.3L642.3,441.9M584.8,382.0L582.1,384.9L579.9,387.1L578.0,391.1L577.9,397.1L579.8,401.8M618.6,427.3L616.3,430.1L612.2,433.5L607.0,434.0L602.7,435.7L597.0,436.3M613.9,388.6L617.6,386.9L620.4,384.7L622.4,382.1L623.1,378.7L622.3,374.5L620.2,371.8L619.4,366.9L620.0,361.4L621.6,357.5L621.7,352.0L620.2,349.3M580.5,401.8L577.3,399.2L576.0,396.4L572.3,393.0L569.6,390.7L563.8,390.3L558.5,389.4L553.5,386.3L551.1,383.4L547.2,378.9L545.7,376.1L544.7,371.2L545.4,367.2M619.2,418.7L617.5,421.5L615.1,424.4L612.3,428.1L611.7,431.3L611.8,434.6L610.6,437.5L606.1,441.4L601.2,444.2L598.5,448.0L593.0,449.6L589.8,450.9L585.2,449.7L580.8,449.5M562.2,452.7L556.9,452.0L553.7,453.0L551.0,455.6L546.6,456.1L543.3,455.8L540.1,455.6L534.8,453.3L533.3,450.6L529.1,447.8L527.5,444.4L522.5,441.7L520.0,439.9M535.2,391.8L532.3,390.6L527.4,389.1L525.5,386.5L523.4,381.8L520.4,378.4L517.7,373.2" stroke="#FFC4CC"/>
<path d="M570.4,453.5L571.8,457.3L572.9,460.1L572.6,465.0L569.8,468.4L568.3,471.2L569.1,476.9L567.5,481.8L568.8,486.8L572.6,490.7L576.8,492.6L579.1,495.2L583.0,496.2L587.8,494.6M546.1,393.5L543.8,396.9L541.6,399.2L540.6,404.7L541.7,410.4L543.7,416.0L547.4,419.9L550.1,421.9L554.7,423.9L558.7,425.8L562.0,426.0L566.5,428.5M560.1,383.5L564.0,381.8L568.0,381.0L573.4,379.1L577.3,376.9L580.1,374.8L585.6,374.4L591.3,373.3L596.4,371.7L599.4,370.7L604.1,371.3L609.1,372.6L614.0,371.1L617.3,369.1M578.7,454.5L581.8,457.2L586.4,458.5L590.4,462.6L595.7,463.7L601.2,462.0M607.2,453.2L606.0,449.7L601.7,446.3L597.7,444.1L594.2,440.6L593.7,436.3L591.8,433.4L588.6,430.0L587.4,425.8L587.0,421.4L588.4,417.3L586.7,411.7M550.0,387.0L548.4,392.2L544.2,395.7L542.9,398.6L538.6,401.5L535.2,401.4L532.4,399.0L528.3,398.3L524.0,396.5L520.2,393.8M546.2,416.6L543.1,415.4L538.3,413.6L533.7,412.2L529.8,413.1L526.8,416.9L524.8,421.6L524.6,426.8L523.3,430.7L521.6,435.4L522.8,440.2L521.8,445.0L522.8,448.1" stroke="#BFF2FF"/>
</g>
<g clip-path="url(#lc7)"><path d="M236,655 L256,590 L292,540 L330,516 L360,512 L420,492 L449,478 L478,440 L512,389 L560,355 L591,342 L640,333" fill="none" stroke="#FFC0CC" stroke-width="2"/></g>
<path d="M543,453h6v6h-6zM543,459h6v6h-6zM561,423h6v6h-6zM561,441h6v6h-6zM573,417h6v6h-6zM573,423h6v6h-6zM591,381h6v6h-6zM591,405h6v6h-6zM597,399h6v6h-6zM603,399h6v6h-6zM609,381h6v6h-6zM609,393h6v6h-6zM615,381h6v6h-6zM615,387h6v6h-6zM615,393h6v6h-6z" fill="#FFFF00"/>
<path d="M555,447h6v6h-6zM555,459h6v6h-6zM573,411h6v6h-6zM585,405h6v6h-6zM597,381h6v6h-6zM597,387h6v6h-6zM609,375h6v6h-6zM609,387h6v6h-6zM621,375h6v6h-6z" fill="#FF8000"/>
<path d="M547,478 L604,470 L626,480 L637,500 L626,528 L600,528 L580,520 L560,500 Z" fill="#FFFFFF"/>
<clipPath id="lc8"><path d="M547,478 L604,470 L626,480 L637,500 L626,528 L600,528 L580,520 L560,500 Z"/></clipPath><g clip-path="url(#lc8)" fill="none" stroke-width="1">
<path d="M582.3,479.2L581.1,483.3L579.0,487.0L576.4,491.6L573.9,493.3L569.7,493.8L564.4,495.0L559.3,494.0M561.3,484.6L563.7,487.5L568.1,491.1L572.0,492.1L576.7,493.4L581.6,495.9M570.9,519.5L572.8,514.5L576.6,512.1L581.0,508.4L586.8,507.5L592.4,508.4L597.9,506.6L602.9,506.2L608.0,506.6L612.2,506.0L616.8,506.1M561.6,488.1L564.5,489.3L568.8,490.5L572.2,491.6L574.6,494.2L577.8,497.6L579.6,501.7L579.5,506.6L579.3,512.0L576.5,516.2M573.4,473.2L571.0,470.5L570.0,465.9L571.9,462.1L575.9,459.1L578.7,457.5L582.4,454.9L584.6,449.4L588.8,445.3L590.4,442.2L589.7,436.9L587.0,434.1L584.4,432.4L580.0,428.8" stroke="#FFC4CC"/>
<path d="M597.4,522.6L596.3,519.1L596.6,513.7L594.3,508.3L594.2,504.5L596.0,501.9L598.0,497.1L602.1,493.1L603.0,489.8L602.4,484.9L602.2,480.2M582.7,477.8L582.3,483.5L580.1,486.0L576.5,487.5L572.7,488.4L569.3,490.2L566.5,493.8L565.8,498.7L567.4,503.7L567.6,507.7L565.3,513.0M629.5,505.5L627.7,502.9L626.3,499.6L625.4,496.3L624.2,490.8L622.4,486.8L621.2,481.3M585.0,483.1L586.8,478.6L585.9,473.1L587.1,468.1L590.4,463.5L592.4,459.7L595.0,456.6L598.8,453.1L604.4,452.4L609.3,454.8L615.1,454.9M571.5,495.9L572.3,500.5L570.0,504.6L565.4,507.6L561.5,508.2L558.4,507.2L554.0,506.9M579.5,526.4L582.8,524.6L587.2,525.4L591.9,522.8L596.4,523.3L601.3,526.4L606.3,526.6L610.7,529.1" stroke="#BFF2FF"/>
</g>
<g clip-path="url(#lc8)"><path d="M236,655 L256,590 L292,540 L330,516 L360,512 L420,492 L449,478 L478,440 L512,389 L560,355 L591,342 L640,333" fill="none" stroke="#FFC0CC" stroke-width="2"/></g>
<path d="M555,477h6v6h-6zM555,483h6v6h-6zM573,495h6v6h-6zM573,501h6v6h-6zM573,507h6v6h-6zM579,477h6v6h-6zM585,489h6v6h-6zM591,495h6v6h-6zM591,507h6v6h-6zM597,501h6v6h-6zM603,507h6v6h-6zM609,507h6v6h-6zM615,495h6v6h-6zM615,513h6v6h-6zM621,495h6v6h-6zM627,501h6v6h-6z" fill="#FFFF00"/>
<path d="M561,477h6v6h-6zM567,495h6v6h-6zM573,483h6v6h-6zM585,483h6v6h-6zM591,477h6v6h-6zM591,489h6v6h-6zM591,501h6v6h-6zM609,489h6v6h-6zM609,501h6v6h-6zM609,513h6v6h-6zM615,477h6v6h-6zM627,513h6v6h-6z" fill="#FF8000"/>
<rect x="544" y="406" width="16" height="19" fill="#FF0000"/>
<rect x="548" y="410" width="8" height="12" fill="#800000"/>
<rect x="519" y="447" width="10" height="15" fill="#FF0000"/>
<path d="M363,555h6v6h-6zM369,567h6v6h-6zM381,573h6v6h-6zM381,591h6v6h-6zM387,597h6v6h-6zM393,567h6v6h-6zM399,555h6v6h-6zM399,597h6v6h-6zM399,609h6v6h-6zM405,555h6v6h-6zM411,585h6v6h-6zM411,609h6v6h-6zM417,591h6v6h-6zM423,549h6v6h-6zM423,615h6v6h-6zM429,585h6v6h-6zM435,615h6v6h-6zM441,549h6v6h-6zM441,573h6v6h-6zM447,549h6v6h-6zM447,585h6v6h-6zM447,609h6v6h-6zM453,561h6v6h-6zM453,567h6v6h-6zM453,603h6v6h-6zM465,585h6v6h-6zM465,603h6v6h-6zM471,561h6v6h-6zM471,609h6v6h-6zM477,573h6v6h-6z" fill="#FFFF00"/>
<path d="M387,579h6v6h-6zM387,591h6v6h-6zM405,573h6v6h-6zM417,603h6v6h-6zM429,549h6v6h-6zM429,567h6v6h-6zM429,603h6v6h-6zM429,615h6v6h-6zM435,549h6v6h-6zM435,597h6v6h-6zM441,567h6v6h-6zM441,591h6v6h-6zM459,561h6v6h-6zM465,561h6v6h-6zM471,549h6v6h-6zM471,579h6v6h-6zM471,591h6v6h-6zM471,597h6v6h-6zM477,579h6v6h-6z" fill="#FFFFFF"/>
<path d="M573,288 L587,281 L601,267 L624,263 L634,267 L627,286 L629,305 L632,335 L593,335 L570,340 L558,348 L539,350 L542,329 L554,315 L564,299 Z" fill="#FFFF00"/>
<path d="M601,296 L629,296 L629,335 L601,335 Z" fill="#FFFFFF"/>
<clipPath id="lc9"><path d="M601,296 L629,296 L629,335 L601,335 Z"/></clipPath><g clip-path="url(#lc9)" fill="none" stroke-width="1">
<path d="M620.7,306.4L616.8,309.0L613.2,313.0L610.3,316.2L606.9,318.1L603.9,320.6L599.1,321.6L594.2,319.6L590.3,317.0L586.7,315.5L583.1,315.8L579.1,314.8L575.7,315.7L570.3,314.7L565.9,313.8M628.8,329.2L623.3,329.1L619.2,327.7L616.4,324.1L613.9,320.3L609.4,318.3L606.5,315.3L602.2,313.9L598.8,312.3L594.7,312.6L590.8,314.8L588.8,319.1" stroke="#FFC4CC"/>
</g>
<g clip-path="url(#lc9)"><path d="M236,655 L256,590 L292,540 L330,516 L360,512 L420,492 L449,478 L478,440 L512,389 L560,355 L591,342 L640,333" fill="none" stroke="#FFC0CC" stroke-width="2"/></g>
<path d="M603,315h6v6h-6zM609,297h6v6h-6zM615,297h6v6h-6zM621,309h6v6h-6zM621,315h6v6h-6z" fill="#FFFF00"/>
<path d="M531,297h6v6h-6zM531,303h6v6h-6zM531,309h6v6h-6zM531,315h6v6h-6zM543,303h6v6h-6zM543,309h6v6h-6zM543,315h6v6h-6zM549,303h6v6h-6z" fill="#FFFF00"/>
<path d="M531,327h6v6h-6zM537,297h6v6h-6zM537,309h6v6h-6zM537,321h6v6h-6zM549,297h6v6h-6z" fill="#FFFFFF"/>
<rect x="573" y="237" width="14" height="19" fill="#FFFFFF"/>
<rect x="585" y="263" width="7" height="18" fill="#FFFFFF"/>
<path d="M633,255h6v6h-6zM639,231h6v6h-6zM639,243h6v6h-6zM639,255h6v6h-6zM645,231h6v6h-6zM645,237h6v6h-6zM645,255h6v6h-6zM651,231h6v6h-6zM657,231h6v6h-6zM657,237h6v6h-6z" fill="#FFFFFF"/>
<path d="M651,243h6v6h-6zM651,249h6v6h-6zM651,255h6v6h-6z" fill="#FFFF00"/>
<path d="M639,249h6v6h-6zM645,249h6v6h-6zM645,255h6v6h-6zM657,249h6v6h-6zM663,255h6v6h-6zM675,249h6v6h-6zM675,255h6v6h-6zM681,249h6v6h-6zM699,249h6v6h-6zM711,243h6v6h-6z" fill="#FFFF00"/>
<path d="M651,255h6v6h-6zM657,255h6v6h-6zM663,249h6v6h-6zM669,249h6v6h-6zM669,255h6v6h-6zM681,255h6v6h-6zM687,249h6v6h-6zM693,243h6v6h-6zM693,249h6v6h-6zM699,243h6v6h-6zM705,243h6v6h-6zM705,249h6v6h-6zM717,243h6v6h-6zM717,249h6v6h-6z" fill="#FFFFFF"/>
<rect x="690" y="246" width="32" height="9" fill="#FFFFFF"/>
<path d="M621,279h6v6h-6zM627,279h6v6h-6zM633,273h6v6h-6zM633,279h6v6h-6zM633,285h6v6h-6zM639,267h6v6h-6zM639,273h6v6h-6zM639,279h6v6h-6zM639,285h6v6h-6zM645,267h6v6h-6zM645,273h6v6h-6zM645,279h6v6h-6zM645,285h6v6h-6zM651,267h6v6h-6zM651,273h6v6h-6zM651,279h6v6h-6zM651,285h6v6h-6zM657,261h6v6h-6zM657,267h6v6h-6zM657,273h6v6h-6zM657,279h6v6h-6zM657,285h6v6h-6zM663,261h6v6h-6zM663,267h6v6h-6zM663,273h6v6h-6zM663,279h6v6h-6zM663,285h6v6h-6zM669,261h6v6h-6zM669,267h6v6h-6zM669,273h6v6h-6zM669,279h6v6h-6zM669,285h6v6h-6zM675,261h6v6h-6zM675,267h6v6h-6zM675,273h6v6h-6zM675,279h6v6h-6zM675,285h6v6h-6zM675,291h6v6h-6zM681,261h6v6h-6zM681,267h6v6h-6zM681,273h6v6h-6zM681,279h6v6h-6zM681,285h6v6h-6zM681,291h6v6h-6zM687,261h6v6h-6zM687,267h6v6h-6zM687,273h6v6h-6zM687,279h6v6h-6zM687,285h6v6h-6zM687,291h6v6h-6zM693,261h6v6h-6zM693,267h6v6h-6zM693,273h6v6h-6zM693,279h6v6h-6zM693,285h6v6h-6zM693,291h6v6h-6zM699,261h6v6h-6zM699,267h6v6h-6zM699,273h6v6h-6zM699,279h6v6h-6zM699,285h6v6h-6zM699,291h6v6h-6zM705,267h6v6h-6zM705,273h6v6h-6zM705,279h6v6h-6zM705,285h6v6h-6zM705,291h6v6h-6zM711,267h6v6h-6zM711,273h6v6h-6zM711,279h6v6h-6zM711,285h6v6h-6zM711,291h6v6h-6zM711,297h6v6h-6zM717,267h6v6h-6zM717,273h6v6h-6zM717,279h6v6h-6zM717,285h6v6h-6zM717,291h6v6h-6zM717,297h6v6h-6zM723,267h6v6h-6zM723,273h6v6h-6zM723,279h6v6h-6zM723,285h6v6h-6zM723,291h6v6h-6zM723,297h6v6h-6zM729,261h6v6h-6zM729,267h6v6h-6zM729,273h6v6h-6zM729,279h6v6h-6zM729,285h6v6h-6zM729,291h6v6h-6zM735,261h6v6h-6zM735,267h6v6h-6zM735,273h6v6h-6zM735,279h6v6h-6zM735,285h6v6h-6zM735,291h6v6h-6zM741,261h6v6h-6zM741,267h6v6h-6zM741,273h6v6h-6zM741,279h6v6h-6zM741,285h6v6h-6zM741,291h6v6h-6zM747,255h6v6h-6zM747,261h6v6h-6zM747,267h6v6h-6zM747,273h6v6h-6zM747,279h6v6h-6zM747,285h6v6h-6zM747,291h6v6h-6zM747,297h6v6h-6zM753,255h6v6h-6zM753,261h6v6h-6zM753,267h6v6h-6zM753,273h6v6h-6zM753,279h6v6h-6zM753,285h6v6h-6zM753,291h6v6h-6zM753,297h6v6h-6zM759,255h6v6h-6zM759,261h6v6h-6zM759,267h6v6h-6zM759,273h6v6h-6zM759,279h6v6h-6zM759,285h6v6h-6zM759,291h6v6h-6zM759,297h6v6h-6zM765,249h6v6h-6zM765,255h6v6h-6zM765,261h6v6h-6zM765,267h6v6h-6zM765,273h6v6h-6zM765,279h6v6h-6zM765,285h6v6h-6zM765,291h6v6h-6zM765,297h6v6h-6zM771,249h6v6h-6zM771,255h6v6h-6zM771,261h6v6h-6zM771,267h6v6h-6zM771,273h6v6h-6zM771,279h6v6h-6zM771,285h6v6h-6zM771,291h6v6h-6zM777,249h6v6h-6zM777,255h6v6h-6zM777,291h6v6h-6zM783,249h6v6h-6z" fill="#FF0000"/>
<path d="M651,273h6v6h-6zM669,285h6v6h-6zM675,261h6v6h-6zM675,273h6v6h-6zM675,285h6v6h-6zM681,291h6v6h-6zM693,267h6v6h-6zM693,273h6v6h-6zM705,261h6v6h-6zM717,261h6v6h-6zM717,279h6v6h-6zM723,285h6v6h-6zM729,285h6v6h-6zM735,291h6v6h-6zM747,273h6v6h-6zM753,261h6v6h-6z" fill="#FF8000"/>
<rect x="694" y="262" width="6" height="5" fill="#800000"/>
<rect x="664" y="323" width="11" height="17" fill="#FF0000"/>
<rect x="694" y="323" width="41" height="11" fill="#FF0000"/>
<rect x="680" y="342" width="25" height="17" fill="#FF0000"/>
<rect x="645" y="346" width="19" height="7" fill="#FF0000"/>
<rect x="790" y="341" width="11" height="11" fill="#FF0000"/>
<rect x="801" y="298" width="8" height="12" fill="#FF0000"/>
<rect x="675" y="219" width="8" height="6" fill="#FF0000"/>
<rect x="694" y="201" width="6" height="6" fill="#FF0000"/>
<path d="M669,429h6v6h-6zM675,417h6v6h-6zM675,423h6v6h-6zM675,429h6v6h-6zM675,435h6v6h-6zM675,441h6v6h-6zM681,423h6v6h-6zM681,429h6v6h-6zM681,435h6v6h-6zM681,441h6v6h-6zM687,423h6v6h-6zM687,429h6v6h-6zM687,435h6v6h-6zM687,441h6v6h-6zM693,423h6v6h-6zM693,429h6v6h-6zM693,435h6v6h-6zM693,441h6v6h-6zM699,429h6v6h-6zM699,435h6v6h-6zM699,441h6v6h-6zM705,435h6v6h-6zM705,441h6v6h-6zM711,435h6v6h-6zM717,429h6v6h-6zM717,435h6v6h-6zM723,381h6v6h-6zM723,387h6v6h-6zM723,417h6v6h-6zM723,423h6v6h-6zM723,429h6v6h-6zM723,435h6v6h-6zM729,375h6v6h-6zM729,381h6v6h-6zM729,387h6v6h-6zM729,393h6v6h-6zM729,399h6v6h-6zM729,405h6v6h-6zM729,411h6v6h-6zM729,417h6v6h-6zM729,423h6v6h-6zM735,369h6v6h-6zM735,375h6v6h-6zM735,381h6v6h-6zM735,387h6v6h-6zM735,393h6v6h-6zM735,399h6v6h-6zM735,405h6v6h-6zM735,411h6v6h-6zM741,369h6v6h-6zM741,375h6v6h-6zM741,381h6v6h-6zM741,387h6v6h-6zM741,393h6v6h-6zM741,399h6v6h-6zM741,405h6v6h-6zM747,369h6v6h-6zM747,375h6v6h-6zM747,381h6v6h-6zM747,387h6v6h-6zM747,393h6v6h-6zM753,369h6v6h-6zM753,375h6v6h-6zM753,381h6v6h-6zM753,387h6v6h-6zM753,393h6v6h-6zM759,369h6v6h-6zM759,375h6v6h-6zM759,381h6v6h-6zM759,387h6v6h-6zM759,393h6v6h-6zM765,369h6v6h-6zM765,375h6v6h-6zM765,381h6v6h-6zM765,387h6v6h-6zM771,369h6v6h-6zM771,375h6v6h-6zM771,381h6v6h-6zM777,369h6v6h-6zM777,375h6v6h-6zM777,381h6v6h-6z" fill="#FF0000"/>
<path d="M679,410 L700,396 L721,389 L728,405 L731,424 L719,436 L700,433 L682,424 Z" fill="#FFFF00"/>
<rect x="700" y="407" width="17" height="15" fill="#FF8000"/>
<rect x="644" y="466" width="14" height="14" fill="#FF0000"/>
<rect x="623" y="508" width="61" height="14" fill="#FF0000"/>
<rect x="651" y="522" width="12" height="5" fill="#FF0000"/>
<path d="M501,627h6v6h-6zM507,615h6v6h-6zM507,621h6v6h-6zM507,627h6v6h-6zM507,633h6v6h-6zM513,603h6v6h-6zM513,609h6v6h-6zM513,615h6v6h-6zM513,621h6v6h-6zM513,627h6v6h-6zM519,597h6v6h-6zM519,603h6v6h-6zM519,609h6v6h-6zM519,615h6v6h-6zM525,585h6v6h-6zM525,591h6v6h-6zM525,597h6v6h-6zM525,603h6v6h-6zM525,609h6v6h-6zM531,573h6v6h-6zM531,579h6v6h-6zM531,585h6v6h-6zM531,591h6v6h-6zM531,597h6v6h-6zM531,603h6v6h-6zM537,567h6v6h-6zM537,573h6v6h-6zM537,579h6v6h-6zM537,585h6v6h-6zM537,591h6v6h-6zM537,597h6v6h-6zM537,603h6v6h-6zM543,561h6v6h-6zM543,567h6v6h-6zM543,573h6v6h-6zM543,579h6v6h-6zM543,585h6v6h-6zM543,591h6v6h-6zM543,597h6v6h-6zM549,555h6v6h-6zM549,561h6v6h-6zM549,567h6v6h-6zM549,573h6v6h-6zM549,579h6v6h-6zM549,585h6v6h-6zM555,555h6v6h-6zM555,561h6v6h-6zM555,567h6v6h-6zM555,573h6v6h-6zM555,579h6v6h-6zM561,549h6v6h-6zM561,555h6v6h-6zM561,561h6v6h-6zM561,567h6v6h-6zM561,573h6v6h-6zM561,579h6v6h-6zM567,549h6v6h-6zM567,555h6v6h-6zM567,561h6v6h-6zM567,567h6v6h-6zM567,573h6v6h-6zM573,543h6v6h-6zM573,549h6v6h-6zM573,555h6v6h-6zM573,567h6v6h-6zM579,543h6v6h-6zM579,549h6v6h-6zM585,537h6v6h-6zM585,543h6v6h-6zM591,537h6v6h-6zM591,543h6v6h-6zM597,531h6v6h-6zM597,537h6v6h-6zM597,543h6v6h-6zM603,525h6v6h-6zM603,531h6v6h-6zM603,537h6v6h-6zM609,531h6v6h-6z" fill="#FF0000"/>
<path d="M519,597h6v6h-6zM525,585h6v6h-6zM525,591h6v6h-6zM525,597h6v6h-6zM531,573h6v6h-6zM531,579h6v6h-6zM531,585h6v6h-6zM531,591h6v6h-6zM531,597h6v6h-6zM537,573h6v6h-6zM537,579h6v6h-6zM537,585h6v6h-6zM537,591h6v6h-6zM543,573h6v6h-6zM543,579h6v6h-6zM543,585h6v6h-6zM549,573h6v6h-6zM549,579h6v6h-6zM555,573h6v6h-6zM555,579h6v6h-6zM561,567h6v6h-6zM561,573h6v6h-6zM567,561h6v6h-6zM567,567h6v6h-6zM573,561h6v6h-6zM579,555h6v6h-6zM585,549h6v6h-6zM591,543h6v6h-6zM591,549h6v6h-6zM597,537h6v6h-6zM597,543h6v6h-6zM603,531h6v6h-6zM603,537h6v6h-6z" fill="#800000"/>
<path d="M621,507h6v6h-6zM621,513h6v6h-6zM633,507h6v6h-6zM639,513h6v6h-6zM639,519h6v6h-6zM645,507h6v6h-6zM645,513h6v6h-6zM645,519h6v6h-6zM651,513h6v6h-6zM651,519h6v6h-6zM657,507h6v6h-6zM657,513h6v6h-6zM663,507h6v6h-6zM663,513h6v6h-6zM663,519h6v6h-6zM669,507h6v6h-6zM675,507h6v6h-6zM675,513h6v6h-6zM675,519h6v6h-6zM681,507h6v6h-6zM681,513h6v6h-6z" fill="#FF0000"/>
<path d="M621,519h6v6h-6zM627,507h6v6h-6zM627,513h6v6h-6zM633,513h6v6h-6z" fill="#800000"/>
<rect x="595" y="528" width="19" height="14" fill="#FF0000"/>
<rect x="472" y="566" width="25" height="46" fill="#FF0000"/>
<path d="M486,563 L509,563 L509,656 L486,656 Z" fill="#FFFF00"/>
<clipPath id="lc10"><path d="M486,563 L509,563 L509,656 L486,656 Z"/></clipPath><g clip-path="url(#lc10)" fill="none" stroke-width="0.9">
<path d="M496.2,593.3L493.3,594.9L489.6,597.2L485.2,599.3L480.6,598.3L476.4,598.8L473.7,601.5L471.9,605.3L472.8,608.7L475.0,611.5L475.4,617.4L477.7,620.6L481.0,624.7L484.3,627.9M492.9,626.6L494.0,623.4L496.0,621.1L499.2,616.5L498.9,610.9L500.8,607.5L502.9,602.8L504.8,599.1L507.9,594.0M501.2,596.3L499.3,600.1L496.0,604.2L492.6,608.5L492.4,612.7L492.5,616.9L494.8,622.4L493.8,627.1L492.9,632.6L490.8,637.0L487.3,639.5" stroke="#FFA000"/>
<path d="M486.7,633.3L481.8,636.6L476.3,638.4L471.5,639.8L468.3,642.0L464.5,645.0L462.2,648.8L460.2,652.8L457.2,655.2L454.5,657.8L450.7,660.4L447.3,662.1L443.5,665.9L439.9,667.2" stroke="#C0F000"/>
</g>
<path d="M483,621h6v6h-6zM483,651h6v6h-6zM489,561h6v6h-6zM489,609h6v6h-6zM489,633h6v6h-6zM489,645h6v6h-6zM495,579h6v6h-6zM501,561h6v6h-6zM501,585h6v6h-6z" fill="#FF8000"/>
<path d="M495,645h6v6h-6zM501,573h6v6h-6z" fill="#FF0000"/>
</g>
<path d="M262,301 L272,289 L279,281 L291,268 L308,268 L308,251 L321,250 L333,239 L345,232 L363,214 L406,214 L423,230 L458,258 L458,274 L491,289 L493,281 L503,272 L521,267 L540,263 L550,253 L557,239 L566,218 L573,213 L587,225 L606,218 L622,213 L634,204 L643,192 L664,189 L669,200 L688,196 L700,190 L712,190 L713,201 L742,203 L749,216 L765,225 L779,227 L788,233 L790,252 L782,260 L782,279 L790,290 L806,294 L814,301 L817,323 L812,339 L803,361 L785,370 L782,382 L773,391 L764,400 L750,405 L745,417 L733,429 L728,440 L717,447 L696,454 L670,450 L660,461 L668,473 L677,494 L686,513 L689,532 L686,545 L678,548 L644,542 L640,551 L647,557 L628,564 L622,561 L619,570 L603,576 L584,570 L581,582 L565,589 L553,595 L534,607 L522,620 L512,639 L503,654 L476,658 L464,654 L433,634 L413,622 L413,599 L386,603 L363,619 L347,634 L324,650 L316,669 L285,677 L261,665 L245,662 L238,658 L234,599 L226,591 L233,582 L233,567 L214,561 L189,567 L183,542 L195,541 L204,539 L209,529 L216,527 L227,534 L242,541 L251,548 L256,541 L267,536 L281,527 L293,515 L305,504 L319,492 L326,480 L314,473 L305,471 L293,475 L286,473 L281,466 L284,457 L291,447 L281,447 L272,450 L260,454 L246,459 L239,450 L230,433 L230,422 L239,412 L244,398 L249,384 L256,377 L263,370 L270,341 L267,322 L264,303 Z" fill="none" stroke="#FF2000" stroke-width="1.4"/>
<g fill="none" stroke="#A02800" stroke-width="1.3"><circle cx="320.3" cy="349.3" r="4.9"/><circle cx="240.3" cy="430.3" r="4.9"/><circle cx="511.3" cy="389.3" r="4.9"/><circle cx="449.3" cy="478.3" r="4.9"/><circle cx="553.3" cy="462.3" r="4.9"/><circle cx="375.3" cy="553.3" r="4.9"/><circle cx="501.3" cy="598.3" r="4.9"/><circle cx="611.3" cy="294.3" r="4.9"/><circle cx="591.3" cy="342.3" r="4.9"/><circle cx="715.3" cy="255.3" r="4.9"/><circle cx="722.3" cy="353.3" r="4.9"/></g><g fill="#A02800"><circle cx="320.3" cy="349.3" r="3.2"/><circle cx="240.3" cy="430.3" r="3.2"/><circle cx="511.3" cy="389.3" r="3.2"/><circle cx="449.3" cy="478.3" r="3.2"/><circle cx="553.3" cy="462.3" r="3.2"/><circle cx="375.3" cy="553.3" r="3.2"/><circle cx="501.3" cy="598.3" r="3.2"/><circle cx="611.3" cy="294.3" r="3.2"/><circle cx="591.3" cy="342.3" r="3.2"/><circle cx="715.3" cy="255.3" r="3.2"/><circle cx="722.3" cy="353.3" r="3.2"/></g></g><line x1="188.5" y1="88" x2="188.5" y2="94" stroke="#000" stroke-width="1"/><line x1="203.5" y1="90" x2="203.5" y2="94" stroke="#000" stroke-width="1"/><line x1="218.5" y1="88" x2="218.5" y2="94" stroke="#000" stroke-width="1"/><line x1="233.5" y1="90" x2="233.5" y2="94" stroke="#000" stroke-width="1"/><line x1="248.5" y1="88" x2="248.5" y2="94" stroke="#000" stroke-width="1"/><line x1="264.5" y1="90" x2="264.5" y2="94" stroke="#000" stroke-width="1"/><line x1="279.5" y1="88" x2="279.5" y2="94" stroke="#000" stroke-width="1"/><line x1="294.5" y1="90" x2="294.5" y2="94" stroke="#000" stroke-width="1"/><line x1="309.5" y1="88" x2="309.5" y2="94" stroke="#000" stroke-width="1"/><line x1="324.5" y1="90" x2="324.5" y2="94" stroke="#000" stroke-width="1"/><line x1="339.5" y1="88" x2="339.5" y2="94" stroke="#000" stroke-width="1"/><line x1="354.5" y1="90" x2="354.5" y2="94" stroke="#000" stroke-width="1"/><line x1="369.5" y1="88" x2="369.5" y2="94" stroke="#000" stroke-width="1"/><line x1="384.5" y1="90" x2="384.5" y2="94" stroke="#000" stroke-width="1"/><line x1="399.5" y1="78" x2="399.5" y2="94" stroke="#000" stroke-width="1"/><line x1="414.5" y1="90" x2="414.5" y2="94" stroke="#000" stroke-width="1"/><line x1="429.5" y1="88" x2="429.5" y2="94" stroke="#000" stroke-width="1"/><line x1="444.5" y1="90" x2="444.5" y2="94" stroke="#000" stroke-width="1"/><line x1="459.5" y1="88" x2="459.5" y2="94" stroke="#000" stroke-width="1"/><line x1="474.5" y1="90" x2="474.5" y2="94" stroke="#000" stroke-width="1"/><line x1="489.5" y1="88" x2="489.5" y2="94" stroke="#000" stroke-width="1"/><line x1="504.5" y1="90" x2="504.5" y2="94" stroke="#000" stroke-width="1"/><line x1="519.5" y1="88" x2="519.5" y2="94" stroke="#000" stroke-width="1"/><line x1="534.5" y1="90" x2="534.5" y2="94" stroke="#000" stroke-width="1"/><line x1="550.5" y1="88" x2="550.5" y2="94" stroke="#000" stroke-width="1"/><line x1="565.5" y1="90" x2="565.5" y2="94" stroke="#000" stroke-width="1"/><line x1="580.5" y1="88" x2="580.5" y2="94" stroke="#000" stroke-width="1"/><line x1="595.5" y1="90" x2="595.5" y2="94" stroke="#000" stroke-width="1"/><line x1="610.5" y1="88" x2="610.5" y2="94" stroke="#000" stroke-width="1"/><line x1="625.5" y1="90" x2="625.5" y2="94" stroke="#000" stroke-width="1"/><line x1="640.5" y1="88" x2="640.5" y2="94" stroke="#000" stroke-width="1"/><line x1="655.5" y1="90" x2="655.5" y2="94" stroke="#000" stroke-width="1"/><line x1="670.5" y1="88" x2="670.5" y2="94" stroke="#000" stroke-width="1"/><line x1="685.5" y1="90" x2="685.5" y2="94" stroke="#000" stroke-width="1"/><line x1="700.5" y1="78" x2="700.5" y2="94" stroke="#000" stroke-width="1"/><line x1="715.5" y1="90" x2="715.5" y2="94" stroke="#000" stroke-width="1"/><line x1="730.5" y1="88" x2="730.5" y2="94" stroke="#000" stroke-width="1"/><line x1="745.5" y1="90" x2="745.5" y2="94" stroke="#000" stroke-width="1"/><line x1="760.5" y1="88" x2="760.5" y2="94" stroke="#000" stroke-width="1"/><line x1="775.5" y1="90" x2="775.5" y2="94" stroke="#000" stroke-width="1"/><line x1="790.5" y1="88" x2="790.5" y2="94" stroke="#000" stroke-width="1"/><line x1="805.5" y1="90" x2="805.5" y2="94" stroke="#000" stroke-width="1"/><line x1="820.5" y1="88" x2="820.5" y2="94" stroke="#000" stroke-width="1"/><line x1="835.5" y1="90" x2="835.5" y2="94" stroke="#000" stroke-width="1"/><line x1="850.5" y1="88" x2="850.5" y2="94" stroke="#000" stroke-width="1"/><text x="398" y="87.6" font-size="9.5" text-anchor="end" letter-spacing="-0.4" font-family="Liberation Sans">750000.00</text><text x="699" y="87.6" font-size="9.5" text-anchor="end" letter-spacing="-0.4" font-family="Liberation Sans">800000.00</text><line x1="174" y1="101.5" x2="181" y2="101.5" stroke="#000" stroke-width="1"/><line x1="176" y1="116.5" x2="181" y2="116.5" stroke="#000" stroke-width="1"/><line x1="174" y1="131.5" x2="181" y2="131.5" stroke="#000" stroke-width="1"/><line x1="176" y1="146.5" x2="181" y2="146.5" stroke="#000" stroke-width="1"/><line x1="174" y1="161.5" x2="181" y2="161.5" stroke="#000" stroke-width="1"/><line x1="176" y1="176.5" x2="181" y2="176.5" stroke="#000" stroke-width="1"/><line x1="174" y1="191.5" x2="181" y2="191.5" stroke="#000" stroke-width="1"/><line x1="176" y1="206.5" x2="181" y2="206.5" stroke="#000" stroke-width="1"/><line x1="174" y1="221.5" x2="181" y2="221.5" stroke="#000" stroke-width="1"/><line x1="176" y1="236.5" x2="181" y2="236.5" stroke="#000" stroke-width="1"/><line x1="174" y1="251.5" x2="181" y2="251.5" stroke="#000" stroke-width="1"/><line x1="176" y1="266.5" x2="181" y2="266.5" stroke="#000" stroke-width="1"/><line x1="164" y1="281.5" x2="181" y2="281.5" stroke="#000" stroke-width="1"/><line x1="176" y1="296.5" x2="181" y2="296.5" stroke="#000" stroke-width="1"/><line x1="174" y1="311.5" x2="181" y2="311.5" stroke="#000" stroke-width="1"/><line x1="176" y1="326.5" x2="181" y2="326.5" stroke="#000" stroke-width="1"/><line x1="174" y1="341.5" x2="181" y2="341.5" stroke="#000" stroke-width="1"/><line x1="176" y1="356.5" x2="181" y2="356.5" stroke="#000" stroke-width="1"/><line x1="174" y1="371.5" x2="181" y2="371.5" stroke="#000" stroke-width="1"/><line x1="176" y1="386.5" x2="181" y2="386.5" stroke="#000" stroke-width="1"/><line x1="174" y1="401.5" x2="181" y2="401.5" stroke="#000" stroke-width="1"/><line x1="176" y1="416.5" x2="181" y2="416.5" stroke="#000" stroke-width="1"/><line x1="174" y1="431.5" x2="181" y2="431.5" stroke="#000" stroke-width="1"/><line x1="176" y1="446.5" x2="181" y2="446.5" stroke="#000" stroke-width="1"/><line x1="174" y1="461.5" x2="181" y2="461.5" stroke="#000" stroke-width="1"/><line x1="176" y1="476.5" x2="181" y2="476.5" stroke="#000" stroke-width="1"/><line x1="174" y1="491.5" x2="181" y2="491.5" stroke="#000" stroke-width="1"/><line x1="176" y1="506.5" x2="181" y2="506.5" stroke="#000" stroke-width="1"/><line x1="174" y1="521.5" x2="181" y2="521.5" stroke="#000" stroke-width="1"/><line x1="176" y1="536.5" x2="181" y2="536.5" stroke="#000" stroke-width="1"/><line x1="174" y1="551.5" x2="181" y2="551.5" stroke="#000" stroke-width="1"/><line x1="176" y1="566.5" x2="181" y2="566.5" stroke="#000" stroke-width="1"/><line x1="164" y1="581.5" x2="181" y2="581.5" stroke="#000" stroke-width="1"/><line x1="176" y1="596.5" x2="181" y2="596.5" stroke="#000" stroke-width="1"/><line x1="174" y1="611.5" x2="181" y2="611.5" stroke="#000" stroke-width="1"/><line x1="176" y1="626.5" x2="181" y2="626.5" stroke="#000" stroke-width="1"/><line x1="174" y1="641.5" x2="181" y2="641.5" stroke="#000" stroke-width="1"/><line x1="176" y1="656.5" x2="181" y2="656.5" stroke="#000" stroke-width="1"/><line x1="174" y1="671.5" x2="181" y2="671.5" stroke="#000" stroke-width="1"/><line x1="176" y1="686.5" x2="181" y2="686.5" stroke="#000" stroke-width="1"/><line x1="174" y1="701.5" x2="181" y2="701.5" stroke="#000" stroke-width="1"/><line x1="176" y1="716.5" x2="181" y2="716.5" stroke="#000" stroke-width="1"/><line x1="174" y1="731.5" x2="181" y2="731.5" stroke="#000" stroke-width="1"/><text transform="translate(172.2,280.5) rotate(-90)" font-size="9.5" letter-spacing="-0.4" font-family="Liberation Sans">3150000.00</text><text transform="translate(172.2,580.5) rotate(-90)" font-size="9.5" letter-spacing="-0.4" font-family="Liberation Sans">3100000.00</text></svg><!-- /MAPSVG -->
<!-- RIGHT PANEL -->
<div class="abs" style="left:859px;top:77px;width:165px;height:16px;background:#0A5BE6"></div>
<div class="abs" style="left:863px;top:77px;color:#fff">网格分析计算</div>


<div class="abs" style="left:992px;top:78px;width:14px;height:14px;border:1px solid #3A5070;border-radius:2px;background:#ECEBE4"><svg class="abs" style="left:1px;top:1px" width="11" height="11"><path d="M3 1h5v6h1v1H6v3H5V8H2V7h1z M4 2v5h3V2z" fill="#000"/></svg></div>
<div class="abs" style="left:1009px;top:78px;width:15px;height:14px;border:1px solid #3A5070;border-radius:2px;background:#ECEBE4"><svg class="abs" style="left:1px;top:1px" width="12" height="12"><path d="M2 2L10 10M10 2L2 10" stroke="#000" stroke-width="1.6"/></svg></div>
<div class="grp" style="left:859px;top:106px;width:170px;height:610px"></div>
<div class="gt" style="left:905px;top:99px">网格分析计算</div>
<div class="grp" style="left:860px;top:124px;width:170px;height:42px"></div>
<div class="gt" style="left:866px;top:118px">计算因子设置</div>
<div class="btn" style="left:892px;top:136px;width:102px;height:21px">计算因子设置</div>
<div class="grp" style="left:860px;top:179px;width:170px;height:77px"></div>
<div class="gt" style="left:866px;top:173px">短期预警分析</div>
<div class="abs" style="left:870px;top:197px">预警日期</div>
<div class="combo" style="top:193px"><span>2008-&nbsp;&nbsp;6-&nbsp;&nbsp;3</span><div class="dd"></div></div>
<div class="btn" style="left:898px;top:223px;width:87px;height:21px">分析计算</div>
<div class="grp" style="left:860px;top:271px;width:170px;height:104px"></div>
<div class="gt" style="left:866px;top:265px">短时预警分析</div>
<div class="abs" style="left:870px;top:290px">预警日期</div>
<div class="combo" style="top:288px"><span>2008-&nbsp;&nbsp;6-&nbsp;&nbsp;3</span><div class="dd"></div></div>
<div class="abs" style="left:870px;top:313px">预警时次</div>
<div class="combo" style="top:312px"><div class="dd"></div></div>
<div class="btn" style="left:898px;top:341px;width:87px;height:21px">分析计算</div>
<div class="grp" style="left:870px;top:391px;width:146px;height:187px"></div>
<div class="btn" style="left:895px;top:377px;width:97px;height:21px;border-width:2px;line-height:16px"><span style="outline:1px dotted #000;outline-offset:1px">地质因子的显示</span></div>
<div class="btn" style="left:895px;top:403px;width:97px;height:21px">地形地貌因子</div>
<div class="btn" style="left:895px;top:431px;width:97px;height:21px">岩土工程因子</div>
<div class="btn" style="left:895px;top:460px;width:97px;height:21px">人口密度因子</div>
<div class="btn" style="left:895px;top:488px;width:97px;height:21px">地震烈度因子</div>
<div class="btn" style="left:895px;top:517px;width:97px;height:21px">矿山分布因子</div>
<div class="btn" style="left:895px;top:545px;width:97px;height:21px">灾害分布因子</div>
<div class="btn" style="left:895px;top:585px;width:97px;height:21px">中小尺度雨量</div>
<div class="btn" style="left:895px;top:612px;width:97px;height:21px">影像图显示</div>
<div class="btn" style="left:895px;top:639px;width:97px;height:21px">易发分区图</div>
<div class="btn" style="left:895px;top:666px;width:97px;height:21px">防治规划图</div>
<div class="btn" style="left:894px;top:691px;width:98px;height:22px">清空显示</div>


<div id="status" class="abs">
  <div class="st" style="left:3px;font-size:11px;letter-spacing:0.1px">Ready</div>
  <div class="ssep" style="left:262px"></div>
  <div class="st" style="left:268px">地质灾害预警系统</div>
  <div class="ssep" style="left:524px"></div>
  <div class="st" style="left:530px;letter-spacing:0.35px">经纬度:114.296875,28.162686</div>
  <div class="ssep" style="left:786px"></div>
  <div class="st" style="left:792px;letter-spacing:0.3px">显示比例:166.158</div>
  <div class="ssep" style="left:1004px"></div><svg class="abs" style="left:1008px;top:0px" width="16" height="18"><rect x="12" y="9" width="2" height="2" fill="#fff"/><rect x="11" y="8" width="2" height="2" fill="#A8A590"/><rect x="8" y="13" width="2" height="2" fill="#fff"/><rect x="7" y="12" width="2" height="2" fill="#A8A590"/><rect x="12" y="13" width="2" height="2" fill="#fff"/><rect x="11" y="12" width="2" height="2" fill="#A8A590"/><rect x="4" y="17" width="2" height="2" fill="#fff"/><rect x="3" y="16" width="2" height="2" fill="#A8A590"/><rect x="8" y="17" width="2" height="2" fill="#fff"/><rect x="7" y="16" width="2" height="2" fill="#A8A590"/><rect x="12" y="17" width="2" height="2" fill="#fff"/><rect x="11" y="16" width="2" height="2" fill="#A8A590"/></svg>
</div>
<div class="abs" style="left:0;top:766px;width:1024px;height:1px;background:#2C62C8"></div><div class="abs" style="left:0;top:767px;width:1024px;height:1px;background:#3A84EA"></div>
</body></html>
